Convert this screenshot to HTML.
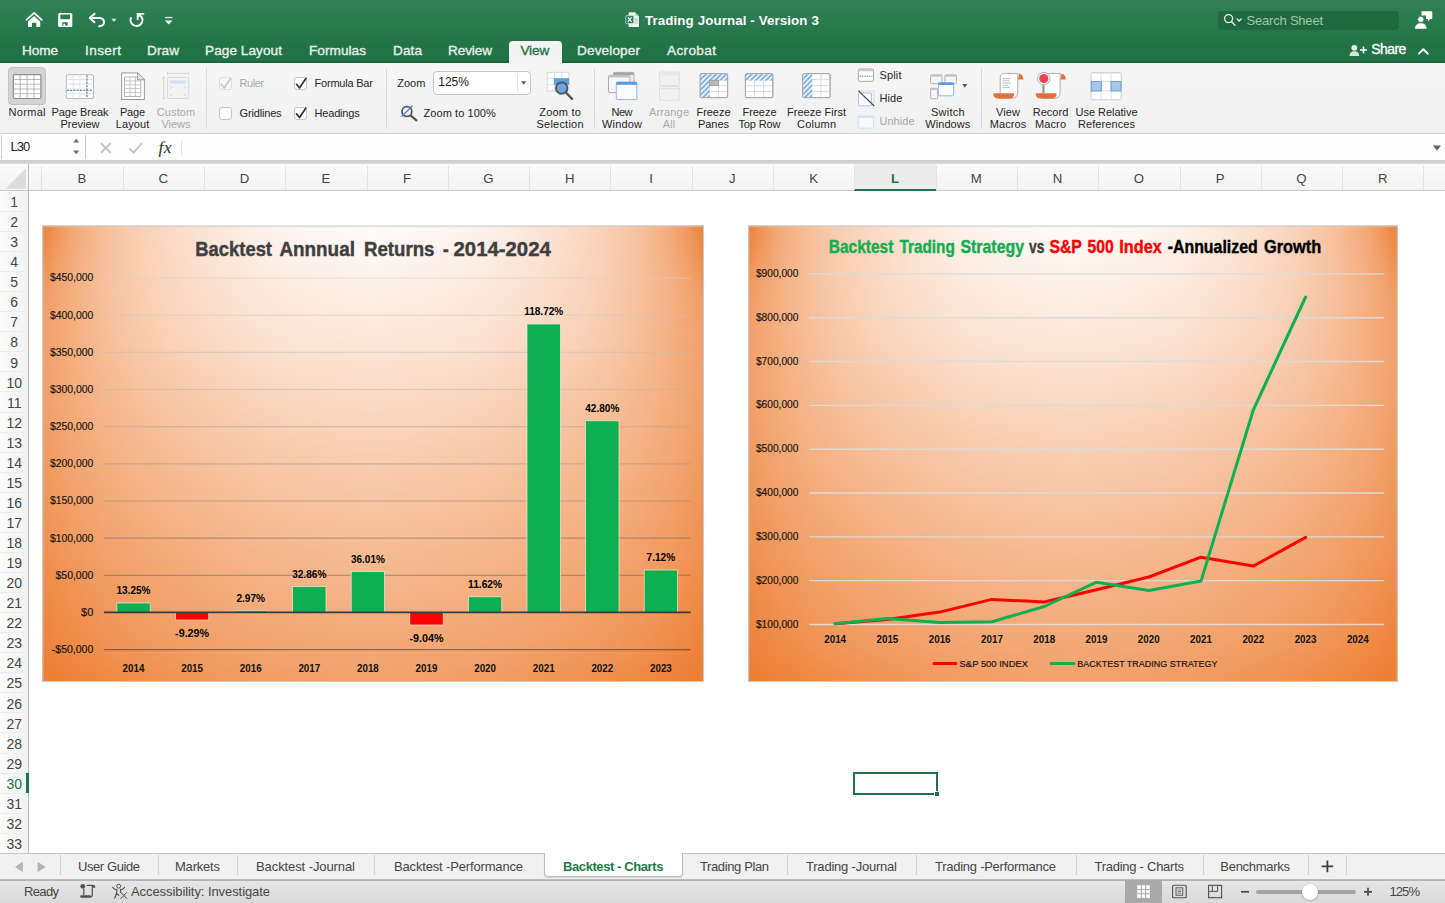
<!DOCTYPE html>
<html lang="en"><head><meta charset="utf-8"><title>Trading Journal - Version 3</title>
<style>
html,body{margin:0;padding:0;}
body{width:1445px;height:903px;overflow:hidden;position:relative;background:#fff;font-family:"Liberation Sans",sans-serif;}
.t{position:absolute;white-space:nowrap;}
.a{position:absolute;}
svg{position:absolute;overflow:visible;}
svg text{font-family:"Liberation Sans",sans-serif;}
</style></head><body>
<div class="a" id="titlebar" style="left:0;top:0;width:1445px;height:63px;background:linear-gradient(to bottom,#327f56 0px,#2c7c51 16px,#26784c 32px,#217346 48px,#217346 61px,#1b673d 61.5px,#1b673d 63px);"></div>
<div class="a" id="tab-view" style="left:508.6px;top:41px;width:53.2px;height:23px;background:#f4f4f4;border-radius:4px 4px 0 0;"></div>
<div class="a" id="search" style="left:1218.3px;top:10.5px;width:180.4px;height:19.2px;background:rgba(0,40,15,0.22);border-radius:4px;"></div>
<span class="t" style="left:1246.60px;top:14.00px;font-size:13px;line-height:13px;letter-spacing:-0.215px;color:#9ec7ae;">Search Sheet</span>
<span class="t" style="left:645.00px;top:13.64px;font-size:13.3px;line-height:13.3px;font-weight:700;letter-spacing:0.119px;color:#ffffff;">Trading Journal - Version 3</span>
<span class="t" style="left:22.00px;top:43.79px;font-size:13.6px;line-height:13.6px;letter-spacing:-0.092px;color:#e6f0ea;-webkit-text-stroke:0.35px #e6f0ea;">Home</span>
<span class="t" style="left:85.00px;top:43.79px;font-size:13.6px;line-height:13.6px;letter-spacing:0.398px;color:#e6f0ea;-webkit-text-stroke:0.35px #e6f0ea;">Insert</span>
<span class="t" style="left:147.00px;top:43.79px;font-size:13.6px;line-height:13.6px;letter-spacing:0.088px;color:#e6f0ea;-webkit-text-stroke:0.35px #e6f0ea;">Draw</span>
<span class="t" style="left:205.00px;top:43.79px;font-size:13.6px;line-height:13.6px;letter-spacing:0.063px;color:#e6f0ea;-webkit-text-stroke:0.35px #e6f0ea;">Page Layout</span>
<span class="t" style="left:309.00px;top:43.79px;font-size:13.6px;line-height:13.6px;letter-spacing:0.047px;color:#e6f0ea;-webkit-text-stroke:0.35px #e6f0ea;">Formulas</span>
<span class="t" style="left:393.00px;top:43.79px;font-size:13.6px;line-height:13.6px;letter-spacing:0.091px;color:#e6f0ea;-webkit-text-stroke:0.35px #e6f0ea;">Data</span>
<span class="t" style="left:448.00px;top:43.79px;font-size:13.6px;line-height:13.6px;letter-spacing:-0.118px;color:#e6f0ea;-webkit-text-stroke:0.35px #e6f0ea;">Review</span>
<span class="t" style="left:577.00px;top:43.79px;font-size:13.6px;line-height:13.6px;letter-spacing:0.127px;color:#e6f0ea;-webkit-text-stroke:0.35px #e6f0ea;">Developer</span>
<span class="t" style="left:667.00px;top:43.79px;font-size:13.6px;line-height:13.6px;letter-spacing:0.356px;color:#e6f0ea;-webkit-text-stroke:0.35px #e6f0ea;">Acrobat</span>
<span class="t" style="left:520.40px;top:43.79px;font-size:13.6px;line-height:13.6px;letter-spacing:-0.111px;color:#217346;-webkit-text-stroke:0.35px #217346;">View</span>
<span class="t" style="left:1371.20px;top:41.75px;font-size:14px;line-height:14px;letter-spacing:-0.564px;color:#ffffff;-webkit-text-stroke:0.3px #fff;">Share</span>
<div class="a" id="ribbon" style="left:0;top:63px;width:1445px;height:70px;background:linear-gradient(#f6f6f6,#f1f1f1);border-bottom:1px solid #d2d2d2;"></div>
<div class="a" style="left:8.2px;top:67px;width:37.7px;height:38px;background:#d4d4d4;border:1px solid #c2c2c2;border-radius:4px;box-sizing:border-box;"></div>
<div class="a" style="left:206.3px;top:68px;width:1px;height:61px;background:#dadada;"></div>
<div class="a" style="left:385.5px;top:68px;width:1px;height:61px;background:#dadada;"></div>
<div class="a" style="left:593.5px;top:68px;width:1px;height:61px;background:#dadada;"></div>
<div class="a" style="left:980.8px;top:68px;width:1px;height:61px;background:#dadada;"></div>
<div class="a" style="left:433px;top:71.3px;width:97.8px;height:23.7px;background:#fff;border:1px solid #c9c9c9;border-radius:4px;box-sizing:border-box;"></div>
<div class="a" style="left:516.5px;top:74px;width:1px;height:18px;background:#e2e2e2;"></div>
<span class="t" style="left:438.30px;top:76.14px;font-size:12px;line-height:12px;letter-spacing:-0.063px;color:#222;">125%</span>
<div class="a" style="left:218.6px;top:77.3px;width:13px;height:13px;background:#f7f7f7;border:1px solid #dedede;border-radius:3px;box-sizing:border-box;"></div>
<div class="a" style="left:218.6px;top:106.9px;width:13px;height:13px;background:#fdfdfd;border:1px solid #c6c6c6;border-radius:3px;box-sizing:border-box;"></div>
<div class="a" style="left:293.9px;top:77.3px;width:13px;height:13px;background:#fdfdfd;border:1px solid #c6c6c6;border-radius:3px;box-sizing:border-box;"></div>
<div class="a" style="left:293.9px;top:106.9px;width:13px;height:13px;background:#fdfdfd;border:1px solid #c6c6c6;border-radius:3px;box-sizing:border-box;"></div>
<span class="t" style="left:239.50px;top:77.99px;font-size:11px;line-height:11px;letter-spacing:-0.446px;color:#a9a9a9;">Ruler</span>
<span class="t" style="left:239.50px;top:108.29px;font-size:11px;line-height:11px;letter-spacing:-0.163px;color:#262626;">Gridlines</span>
<span class="t" style="left:314.60px;top:77.99px;font-size:11px;line-height:11px;letter-spacing:-0.231px;color:#262626;">Formula Bar</span>
<span class="t" style="left:314.60px;top:108.29px;font-size:11px;line-height:11px;letter-spacing:-0.196px;color:#262626;">Headings</span>
<span class="t" style="left:397.30px;top:77.99px;font-size:11px;line-height:11px;letter-spacing:-0.038px;color:#262626;">Zoom</span>
<span class="t" style="left:423.50px;top:108.29px;font-size:11px;line-height:11px;letter-spacing:0.070px;color:#262626;">Zoom to 100%</span>
<span class="t" style="left:8.50px;top:107.49px;font-size:11px;line-height:11px;letter-spacing:0.311px;color:#262626;">Normal</span>
<span class="t" style="left:51.50px;top:107.49px;font-size:11px;line-height:11px;letter-spacing:-0.053px;color:#262626;">Page Break</span>
<span class="t" style="left:60.50px;top:119.39px;font-size:11px;line-height:11px;letter-spacing:-0.020px;color:#262626;">Preview</span>
<span class="t" style="left:120.00px;top:107.49px;font-size:11px;line-height:11px;letter-spacing:-0.229px;color:#262626;">Page</span>
<span class="t" style="left:115.75px;top:119.39px;font-size:11px;line-height:11px;letter-spacing:0.095px;color:#262626;">Layout</span>
<span class="t" style="left:156.75px;top:107.49px;font-size:11px;line-height:11px;letter-spacing:0.121px;color:#a9a9a9;">Custom</span>
<span class="t" style="left:161.50px;top:119.39px;font-size:11px;line-height:11px;letter-spacing:-0.036px;color:#a9a9a9;">Views</span>
<span class="t" style="left:539.25px;top:107.49px;font-size:11px;line-height:11px;letter-spacing:0.193px;color:#262626;">Zoom to</span>
<span class="t" style="left:536.50px;top:119.39px;font-size:11px;line-height:11px;letter-spacing:0.219px;color:#262626;">Selection</span>
<span class="t" style="left:611.50px;top:107.49px;font-size:11px;line-height:11px;letter-spacing:-0.503px;color:#262626;">New</span>
<span class="t" style="left:602.00px;top:119.39px;font-size:11px;line-height:11px;letter-spacing:0.176px;color:#262626;">Window</span>
<span class="t" style="left:649.00px;top:107.49px;font-size:11px;line-height:11px;letter-spacing:0.145px;color:#a9a9a9;">Arrange</span>
<span class="t" style="left:662.75px;top:119.39px;font-size:11px;line-height:11px;letter-spacing:0.137px;color:#a9a9a9;">All</span>
<span class="t" style="left:696.50px;top:107.49px;font-size:11px;line-height:11px;letter-spacing:-0.046px;color:#262626;">Freeze</span>
<span class="t" style="left:698.00px;top:119.39px;font-size:11px;line-height:11px;letter-spacing:-0.047px;color:#262626;">Panes</span>
<span class="t" style="left:742.50px;top:107.49px;font-size:11px;line-height:11px;letter-spacing:-0.046px;color:#262626;">Freeze</span>
<span class="t" style="left:738.50px;top:119.39px;font-size:11px;line-height:11px;letter-spacing:-0.133px;color:#262626;">Top Row</span>
<span class="t" style="left:787.00px;top:107.49px;font-size:11px;line-height:11px;letter-spacing:0.030px;color:#262626;">Freeze First</span>
<span class="t" style="left:797.00px;top:119.39px;font-size:11px;line-height:11px;letter-spacing:0.220px;color:#262626;">Column</span>
<span class="t" style="left:931.05px;top:107.49px;font-size:11px;line-height:11px;letter-spacing:0.220px;color:#262626;">Switch</span>
<span class="t" style="left:925.30px;top:119.39px;font-size:11px;line-height:11px;letter-spacing:0.063px;color:#262626;">Windows</span>
<span class="t" style="left:996.00px;top:107.49px;font-size:11px;line-height:11px;letter-spacing:0.119px;color:#262626;">View</span>
<span class="t" style="left:989.75px;top:119.39px;font-size:11px;line-height:11px;letter-spacing:0.088px;color:#262626;">Macros</span>
<span class="t" style="left:1032.75px;top:107.49px;font-size:11px;line-height:11px;letter-spacing:0.008px;color:#262626;">Record</span>
<span class="t" style="left:1035.00px;top:119.39px;font-size:11px;line-height:11px;letter-spacing:0.110px;color:#262626;">Macro</span>
<span class="t" style="left:1075.50px;top:107.49px;font-size:11px;line-height:11px;letter-spacing:-0.032px;color:#262626;">Use Relative</span>
<span class="t" style="left:1078.00px;top:119.39px;font-size:11px;line-height:11px;letter-spacing:0.084px;color:#262626;">References</span>
<span class="t" style="left:879.40px;top:70.19px;font-size:11px;line-height:11px;letter-spacing:0.175px;color:#262626;">Split</span>
<span class="t" style="left:879.40px;top:93.19px;font-size:11px;line-height:11px;letter-spacing:0.159px;color:#262626;">Hide</span>
<span class="t" style="left:879.40px;top:116.49px;font-size:11px;line-height:11px;letter-spacing:0.049px;color:#a9a9a9;">Unhide</span>
<div class="a" id="formulabar" style="left:0;top:134px;width:1445px;height:26px;background:#fdfdfd;"></div>
<div class="a" style="left:0;top:159.6px;width:1445px;height:4.3px;background:linear-gradient(#cbcbcb,#d3d3d3 60%,#dcdcdc);"></div>
<div class="a" style="left:84.5px;top:135px;width:1px;height:24px;background:#c4c4c4;"></div>
<div class="a" style="left:0.5px;top:135px;width:1px;height:24px;background:#d0d0d0;"></div>
<div class="a" style="left:180.5px;top:141px;width:1px;height:14px;background:#e0e0e0;"></div>
<span class="t" style="left:10.50px;top:140.30px;font-size:13px;line-height:13px;letter-spacing:-0.994px;color:#222;">L30</span>
<span class="t" style="left:158.6px;top:137.3px;font-family:'Liberation Serif',serif;font-style:italic;font-size:17.6px;line-height:20px;color:#333;letter-spacing:0.2px;">fx</span>
<div class="a" id="colhead" style="left:0;top:163.9px;width:1445px;height:27.6px;background:linear-gradient(#fbfbfb,#f3f3f3);border-bottom:1.5px solid #cbcbcb;box-sizing:border-box;"></div>
<div class="a" style="left:854px;top:164px;width:82px;height:27px;background:#ececec;border-bottom:2px solid #217346;box-sizing:border-box;"></div>
<div class="a" style="left:41.3px;top:166px;width:1px;height:24px;background:#e3e3e3;"></div>
<span class="t" style="left:77.55px;top:171.83px;font-size:13.2px;line-height:13.2px;color:#444;">B</span>
<div class="a" style="left:122.6px;top:166px;width:1px;height:24px;background:#e3e3e3;"></div>
<span class="t" style="left:158.48px;top:171.83px;font-size:13.2px;line-height:13.2px;color:#444;">C</span>
<div class="a" style="left:203.9px;top:166px;width:1px;height:24px;background:#e3e3e3;"></div>
<span class="t" style="left:239.78px;top:171.83px;font-size:13.2px;line-height:13.2px;color:#444;">D</span>
<div class="a" style="left:285.2px;top:166px;width:1px;height:24px;background:#e3e3e3;"></div>
<span class="t" style="left:321.45px;top:171.83px;font-size:13.2px;line-height:13.2px;color:#444;">E</span>
<div class="a" style="left:366.5px;top:166px;width:1px;height:24px;background:#e3e3e3;"></div>
<span class="t" style="left:403.12px;top:171.83px;font-size:13.2px;line-height:13.2px;color:#444;">F</span>
<div class="a" style="left:447.8px;top:166px;width:1px;height:24px;background:#e3e3e3;"></div>
<span class="t" style="left:483.32px;top:171.83px;font-size:13.2px;line-height:13.2px;color:#444;">G</span>
<div class="a" style="left:529.1px;top:166px;width:1px;height:24px;background:#e3e3e3;"></div>
<span class="t" style="left:564.98px;top:171.83px;font-size:13.2px;line-height:13.2px;color:#444;">H</span>
<div class="a" style="left:610.4px;top:166px;width:1px;height:24px;background:#e3e3e3;"></div>
<span class="t" style="left:649.22px;top:171.83px;font-size:13.2px;line-height:13.2px;color:#444;">I</span>
<div class="a" style="left:691.7px;top:166px;width:1px;height:24px;background:#e3e3e3;"></div>
<span class="t" style="left:729.05px;top:171.83px;font-size:13.2px;line-height:13.2px;color:#444;">J</span>
<div class="a" style="left:773.0px;top:166px;width:1px;height:24px;background:#e3e3e3;"></div>
<span class="t" style="left:809.25px;top:171.83px;font-size:13.2px;line-height:13.2px;color:#444;">K</span>
<div class="a" style="left:854.3px;top:166px;width:1px;height:24px;background:#e3e3e3;"></div>
<span class="t" style="left:890.92px;top:171.83px;font-size:13.2px;line-height:13.2px;font-weight:700;color:#217346;">L</span>
<div class="a" style="left:935.6px;top:166px;width:1px;height:24px;background:#e3e3e3;"></div>
<span class="t" style="left:970.75px;top:171.83px;font-size:13.2px;line-height:13.2px;color:#444;">M</span>
<div class="a" style="left:1016.9px;top:166px;width:1px;height:24px;background:#e3e3e3;"></div>
<span class="t" style="left:1052.78px;top:171.83px;font-size:13.2px;line-height:13.2px;color:#444;">N</span>
<div class="a" style="left:1098.2px;top:166px;width:1px;height:24px;background:#e3e3e3;"></div>
<span class="t" style="left:1133.72px;top:171.83px;font-size:13.2px;line-height:13.2px;color:#444;">O</span>
<div class="a" style="left:1179.5px;top:166px;width:1px;height:24px;background:#e3e3e3;"></div>
<span class="t" style="left:1215.75px;top:171.83px;font-size:13.2px;line-height:13.2px;color:#444;">P</span>
<div class="a" style="left:1260.8px;top:166px;width:1px;height:24px;background:#e3e3e3;"></div>
<span class="t" style="left:1296.32px;top:171.83px;font-size:13.2px;line-height:13.2px;color:#444;">Q</span>
<div class="a" style="left:1342.1px;top:166px;width:1px;height:24px;background:#e3e3e3;"></div>
<span class="t" style="left:1377.98px;top:171.83px;font-size:13.2px;line-height:13.2px;color:#444;">R</span>
<div class="a" style="left:1423.4px;top:166px;width:1px;height:24px;background:#e3e3e3;"></div>
<div class="a" id="rowhead" style="left:0;top:191px;width:28px;height:662.4px;background:linear-gradient(to right,#fbfbfb,#f2f2f2);"></div>
<div class="a" style="left:28px;top:164px;width:1px;height:690px;background:#b9b9b9;"></div>
<div class="a" style="left:0;top:210.9px;width:28px;height:1px;background:#ececec;"></div>
<span class="t" style="left:10.31px;top:195.05px;font-size:14px;line-height:14px;color:#444;">1</span>
<div class="a" style="left:0;top:230.9px;width:28px;height:1px;background:#ececec;"></div>
<span class="t" style="left:10.31px;top:215.11px;font-size:14px;line-height:14px;color:#444;">2</span>
<div class="a" style="left:0;top:251.0px;width:28px;height:1px;background:#ececec;"></div>
<span class="t" style="left:10.31px;top:235.17px;font-size:14px;line-height:14px;color:#444;">3</span>
<div class="a" style="left:0;top:271.0px;width:28px;height:1px;background:#ececec;"></div>
<span class="t" style="left:10.31px;top:255.23px;font-size:14px;line-height:14px;color:#444;">4</span>
<div class="a" style="left:0;top:291.1px;width:28px;height:1px;background:#ececec;"></div>
<span class="t" style="left:10.31px;top:275.29px;font-size:14px;line-height:14px;color:#444;">5</span>
<div class="a" style="left:0;top:311.2px;width:28px;height:1px;background:#ececec;"></div>
<span class="t" style="left:10.31px;top:295.35px;font-size:14px;line-height:14px;color:#444;">6</span>
<div class="a" style="left:0;top:331.2px;width:28px;height:1px;background:#ececec;"></div>
<span class="t" style="left:10.31px;top:315.41px;font-size:14px;line-height:14px;color:#444;">7</span>
<div class="a" style="left:0;top:351.3px;width:28px;height:1px;background:#ececec;"></div>
<span class="t" style="left:10.31px;top:335.47px;font-size:14px;line-height:14px;color:#444;">8</span>
<div class="a" style="left:0;top:371.3px;width:28px;height:1px;background:#ececec;"></div>
<span class="t" style="left:10.31px;top:355.53px;font-size:14px;line-height:14px;color:#444;">9</span>
<div class="a" style="left:0;top:391.4px;width:28px;height:1px;background:#ececec;"></div>
<span class="t" style="left:6.41px;top:375.59px;font-size:14px;line-height:14px;color:#444;">10</span>
<div class="a" style="left:0;top:411.5px;width:28px;height:1px;background:#ececec;"></div>
<span class="t" style="left:6.93px;top:395.65px;font-size:14px;line-height:14px;color:#444;">11</span>
<div class="a" style="left:0;top:431.5px;width:28px;height:1px;background:#ececec;"></div>
<span class="t" style="left:6.41px;top:415.71px;font-size:14px;line-height:14px;color:#444;">12</span>
<div class="a" style="left:0;top:451.6px;width:28px;height:1px;background:#ececec;"></div>
<span class="t" style="left:6.41px;top:435.77px;font-size:14px;line-height:14px;color:#444;">13</span>
<div class="a" style="left:0;top:471.6px;width:28px;height:1px;background:#ececec;"></div>
<span class="t" style="left:6.41px;top:455.83px;font-size:14px;line-height:14px;color:#444;">14</span>
<div class="a" style="left:0;top:491.7px;width:28px;height:1px;background:#ececec;"></div>
<span class="t" style="left:6.41px;top:475.89px;font-size:14px;line-height:14px;color:#444;">15</span>
<div class="a" style="left:0;top:511.8px;width:28px;height:1px;background:#ececec;"></div>
<span class="t" style="left:6.41px;top:495.95px;font-size:14px;line-height:14px;color:#444;">16</span>
<div class="a" style="left:0;top:531.8px;width:28px;height:1px;background:#ececec;"></div>
<span class="t" style="left:6.41px;top:516.01px;font-size:14px;line-height:14px;color:#444;">17</span>
<div class="a" style="left:0;top:551.9px;width:28px;height:1px;background:#ececec;"></div>
<span class="t" style="left:6.41px;top:536.07px;font-size:14px;line-height:14px;color:#444;">18</span>
<div class="a" style="left:0;top:571.9px;width:28px;height:1px;background:#ececec;"></div>
<span class="t" style="left:6.41px;top:556.13px;font-size:14px;line-height:14px;color:#444;">19</span>
<div class="a" style="left:0;top:592.0px;width:28px;height:1px;background:#ececec;"></div>
<span class="t" style="left:6.41px;top:576.19px;font-size:14px;line-height:14px;color:#444;">20</span>
<div class="a" style="left:0;top:612.1px;width:28px;height:1px;background:#ececec;"></div>
<span class="t" style="left:6.41px;top:596.25px;font-size:14px;line-height:14px;color:#444;">21</span>
<div class="a" style="left:0;top:632.1px;width:28px;height:1px;background:#ececec;"></div>
<span class="t" style="left:6.41px;top:616.31px;font-size:14px;line-height:14px;color:#444;">22</span>
<div class="a" style="left:0;top:652.2px;width:28px;height:1px;background:#ececec;"></div>
<span class="t" style="left:6.41px;top:636.37px;font-size:14px;line-height:14px;color:#444;">23</span>
<div class="a" style="left:0;top:672.2px;width:28px;height:1px;background:#ececec;"></div>
<span class="t" style="left:6.41px;top:656.43px;font-size:14px;line-height:14px;color:#444;">24</span>
<div class="a" style="left:0;top:692.3px;width:28px;height:1px;background:#ececec;"></div>
<span class="t" style="left:6.41px;top:676.49px;font-size:14px;line-height:14px;color:#444;">25</span>
<div class="a" style="left:0;top:712.4px;width:28px;height:1px;background:#ececec;"></div>
<span class="t" style="left:6.41px;top:696.55px;font-size:14px;line-height:14px;color:#444;">26</span>
<div class="a" style="left:0;top:732.4px;width:28px;height:1px;background:#ececec;"></div>
<span class="t" style="left:6.41px;top:716.61px;font-size:14px;line-height:14px;color:#444;">27</span>
<div class="a" style="left:0;top:752.5px;width:28px;height:1px;background:#ececec;"></div>
<span class="t" style="left:6.41px;top:736.67px;font-size:14px;line-height:14px;color:#444;">28</span>
<div class="a" style="left:0;top:772.5px;width:28px;height:1px;background:#ececec;"></div>
<span class="t" style="left:6.41px;top:756.73px;font-size:14px;line-height:14px;color:#444;">29</span>
<div class="a" style="left:0;top:792.6px;width:28px;height:1px;background:#ececec;"></div>
<span class="t" style="left:6.41px;top:776.79px;font-size:14px;line-height:14px;color:#217346;">30</span>
<div class="a" style="left:0;top:812.7px;width:28px;height:1px;background:#ececec;"></div>
<span class="t" style="left:6.41px;top:796.85px;font-size:14px;line-height:14px;color:#444;">31</span>
<div class="a" style="left:0;top:832.7px;width:28px;height:1px;background:#ececec;"></div>
<span class="t" style="left:6.41px;top:816.91px;font-size:14px;line-height:14px;color:#444;">32</span>
<div class="a" style="left:0;top:852.8px;width:28px;height:1px;background:#ececec;"></div>
<span class="t" style="left:6.41px;top:836.97px;font-size:14px;line-height:14px;color:#444;">33</span>
<div class="a" style="left:26px;top:773.0px;width:2.5px;height:20px;background:#217346;"></div>
<div class="a" id="selcell" style="left:852.5px;top:771.5px;width:85px;height:23.5px;border:2px solid #217346;box-sizing:border-box;"></div>
<div class="a" style="left:933.5px;top:790.5px;width:6px;height:6px;background:#fff;"></div>
<div class="a" style="left:934.5px;top:791.5px;width:4.5px;height:4.5px;background:#217346;"></div>
<div class="a" id="sheettabs" style="left:0;top:853.4px;width:1445px;height:26.6px;background:#f1f1f1;border-top:1px solid #c8c8c8;border-bottom:1px solid #bdbdbd;box-sizing:border-box;"></div>
<div class="a" style="left:60.3px;top:855px;width:1px;height:20px;background:#d2d2d2;"></div>
<div class="a" style="left:157.7px;top:855px;width:1px;height:20px;background:#d2d2d2;"></div>
<div class="a" style="left:237.2px;top:855px;width:1px;height:20px;background:#d2d2d2;"></div>
<div class="a" style="left:373.7px;top:855px;width:1px;height:20px;background:#d2d2d2;"></div>
<div class="a" style="left:787.0px;top:855px;width:1px;height:20px;background:#d2d2d2;"></div>
<div class="a" style="left:916.0px;top:855px;width:1px;height:20px;background:#d2d2d2;"></div>
<div class="a" style="left:1076.0px;top:855px;width:1px;height:20px;background:#d2d2d2;"></div>
<div class="a" style="left:1202.6px;top:855px;width:1px;height:20px;background:#d2d2d2;"></div>
<div class="a" style="left:1308.0px;top:855px;width:1px;height:20px;background:#d2d2d2;"></div>
<div class="a" style="left:1346.0px;top:855px;width:1px;height:20px;background:#d2d2d2;"></div>
<div class="a" style="left:543.6px;top:853px;width:139.3px;height:23.6px;background:#fff;border:1px solid #bcbcbc;border-top:none;border-radius:0 0 4px 4px;box-sizing:border-box;box-shadow:0 1px 1px rgba(0,0,0,0.12);"></div>
<span class="t" style="left:78.00px;top:859.60px;font-size:13px;line-height:13px;letter-spacing:-0.416px;color:#464646;">User Guide</span>
<span class="t" style="left:175.00px;top:859.60px;font-size:13px;line-height:13px;letter-spacing:-0.205px;color:#464646;">Markets</span>
<span class="t" style="left:256.00px;top:859.60px;font-size:13px;line-height:13px;letter-spacing:-0.089px;color:#464646;">Backtest -Journal</span>
<span class="t" style="left:394.00px;top:859.60px;font-size:13px;line-height:13px;letter-spacing:-0.160px;color:#464646;">Backtest -Performance</span>
<span class="t" style="left:700.00px;top:859.60px;font-size:13px;line-height:13px;letter-spacing:-0.384px;color:#464646;">Trading Plan</span>
<span class="t" style="left:806.00px;top:859.60px;font-size:13px;line-height:13px;letter-spacing:-0.211px;color:#464646;">Trading -Journal</span>
<span class="t" style="left:935.00px;top:859.60px;font-size:13px;line-height:13px;letter-spacing:-0.260px;color:#464646;">Trading -Performance</span>
<span class="t" style="left:1094.50px;top:859.60px;font-size:13px;line-height:13px;letter-spacing:-0.262px;color:#464646;">Trading - Charts</span>
<span class="t" style="left:1220.30px;top:859.60px;font-size:13px;line-height:13px;letter-spacing:-0.283px;color:#464646;">Benchmarks</span>
<span class="t" style="left:563.00px;top:859.60px;font-size:13px;line-height:13px;font-weight:700;letter-spacing:-0.407px;color:#1e7b45;">Backtest - Charts</span>
<div class="a" id="statusbar" style="left:0;top:880px;width:1445px;height:23px;background:linear-gradient(#e6e6e6,#d9d9d9);border-top:1px solid #b4b4b4;box-sizing:border-box;"></div>
<div class="a" style="left:1124.9px;top:880px;width:36.8px;height:23px;background:#a9a9a9;"></div>
<span class="t" style="left:24.00px;top:885.20px;font-size:13px;line-height:13px;letter-spacing:-0.644px;color:#464646;">Ready</span>
<span class="t" style="left:131.00px;top:885.20px;font-size:13px;line-height:13px;letter-spacing:-0.075px;color:#464646;">Accessibility: Investigate</span>
<span class="t" style="left:1389.40px;top:885.20px;font-size:13px;line-height:13px;letter-spacing:-0.883px;color:#464646;">125%</span>
<div class="a" style="left:1256.4px;top:889.8px;width:100px;height:4px;background:#a3a3a3;border-radius:2px;"></div>
<div class="a" style="left:1301.7px;top:883.5px;width:16px;height:16px;background:#fff;border-radius:8px;box-shadow:0 0.5px 2px rgba(0,0,0,0.35);"></div>
<svg id="icons" width="1445" height="903" viewBox="0 0 1445 903" style="left:0;top:0;"><path d="M26.4 19.9 L34.1 12.9 L41.8 19.9" fill="none" stroke="#fff" stroke-width="1.7" stroke-linecap="round" stroke-linejoin="round"/>
<path d="M28 21.4 L34.1 16 L40.2 21.4 V26.9 H36.3 V22.8 H32 V26.9 H28 Z" fill="#fff"/>
<path d="M59.6 12.9 H70.8 Q72.3 12.9 72.3 14.4 V25.5 Q72.3 27 70.8 27 H59.6 Q58.1 27 58.1 25.5 V14.4 Q58.1 12.9 59.6 12.9 Z M60.4 15 V18.6 Q60.4 19.2 61 19.2 H69.4 Q70 19.2 70 18.6 V15 Q70 14.4 69.4 14.4 H61 Q60.4 14.4 60.4 15 Z M62.2 22.8 V25.8 H63.4 V23.8 H65.2 V25.8 H67.7 V22.8 Q67.7 22.2 67.1 22.2 H62.8 Q62.2 22.2 62.2 22.8 Z" fill="#fff" fill-rule="evenodd"/>
<path d="M94.6 13.7 L89.7 18.05 L94.4 22.3 M90.2 18.05 H99.6 Q104 18.3 104 22.2 Q103.8 25.8 99.1 26.2" fill="none" stroke="#fff" stroke-width="2" stroke-linecap="round" stroke-linejoin="round"/>
<path d="M111.3 18.7 H116.6 L113.95 21.9 Z" fill="#d8e6dd"/>
<path d="M130.9 17.9 A6 6 0 1 0 141.7 17 L138.4 14.4" fill="none" stroke="#fff" stroke-width="1.9" stroke-linecap="round" stroke-linejoin="round"/>
<path d="M144.2 13.9 H137.7 V20" fill="none" stroke="#fff" stroke-width="1.9" stroke-linecap="butt" stroke-linejoin="miter"/>
<path d="M137.7 13.9 H141.5 L137.7 17.6 Z" fill="#fff"/>
<rect x="165" y="16.9" width="7.4" height="1.3" fill="#e6f0ea"/>
<path d="M164.9 20.4 H172.5 L168.7 24.4 Z" fill="#fff"/>
<path d="M628.6 12.2 H635 L638.9 16.2 V26.9 H628.6 Z" fill="#f4f8f5"/>
<path d="M635 12.2 V16.2 H638.9 Z" fill="#b9d3c3"/>
<rect x="625.7" y="15.6" width="8" height="8" rx="1" fill="#2e7d52" stroke="#cfe3d6" stroke-width="0.7"/>
<path d="M627.8 17.4 L631.6 21.9 M631.6 17.4 L627.8 21.9" stroke="#fff" stroke-width="1.1"/>
<path d="M635.2 18 V24 M637 18 V24" stroke="#9cc3ab" stroke-width="0.8"/>
<circle cx="1228.6" cy="18.6" r="4" fill="none" stroke="#eaf3ed" stroke-width="1.3"/>
<path d="M1231.4 21.6 L1235 25.2" stroke="#eaf3ed" stroke-width="1.4" stroke-linecap="round"/>
<path d="M1237.2 19 L1239.2 21 L1241.2 19" fill="none" stroke="#eaf3ed" stroke-width="1.2" stroke-linecap="round" stroke-linejoin="round"/>
<path d="M1421.5 11.2 H1431.3 Q1432.3 11.2 1432.3 12.2 V18 Q1432.3 19 1431.3 19 H1430.2 L1428 21.3 V19 H1426 V15.5 H1421.5 Z" fill="#fff"/>
<circle cx="1420.8" cy="19.4" r="3.1" fill="#fff" stroke="#2d7b51" stroke-width="0.8"/>
<path d="M1415 28.8 Q1415 23.2 1420.8 23.2 Q1426.6 23.2 1426.6 28.8 Z" fill="#fff"/>
<circle cx="1354.3" cy="47.8" r="2.9" fill="#e8f1ec"/>
<path d="M1349.5 56 Q1349.5 51.3 1354.3 51.3 Q1359.2 51.3 1359.2 56 Z" fill="#d3e4d9"/>
<path d="M1360 50 H1367 M1363.5 46.5 V53.5" stroke="#fff" stroke-width="1.6"/>
<path d="M1418.9 53.6 L1423.3 49.2 L1427.7 53.6" fill="none" stroke="#fff" stroke-width="2" stroke-linecap="round" stroke-linejoin="round"/>
<path d="M221.2 84.3 L224.2 87.9 L230.6 78.5" fill="none" stroke="#c9c9c9" stroke-width="1.7" stroke-linecap="round" stroke-linejoin="round"/>
<path d="M296.5 84.3 L299.5 87.9 L305.9 78.5" fill="none" stroke="#333" stroke-width="1.7" stroke-linecap="round" stroke-linejoin="round"/>
<path d="M296.5 113.9 L299.5 117.5 L305.9 108.1" fill="none" stroke="#333" stroke-width="1.7" stroke-linecap="round" stroke-linejoin="round"/>
<rect x="13.3" y="74.7" width="27.6" height="23.8" rx="1.5" fill="#fff" stroke="#8a8a8a" stroke-width="1.2"/>
<path d="M20.2 74.7 V98.5 M27.1 74.7 V98.5 M34.0 74.7 V98.5 M13.3 79.5 H40.9 M13.3 84.2 H40.9 M13.3 89.0 H40.9 M13.3 93.7 H40.9 " stroke="#9c9c9c" stroke-width="0.7" fill="none"/>
<rect x="66.3" y="74.7" width="27.2" height="23.8" rx="1.5" fill="#fff" stroke="#b4b4b4" stroke-width="1"/>
<path d="M73.1 74.7 V98.5 M79.9 74.7 V98.5 M86.7 74.7 V98.5 M66.3 79.5 H93.5 M66.3 84.2 H93.5 M66.3 89.0 H93.5 M66.3 93.7 H93.5 " stroke="#cfe0f5" stroke-width="0.8" fill="none"/>
<path d="M66.8 90.3 H93 M87 75.2 V98" stroke="#555" stroke-width="0.9" stroke-dasharray="2 1.3" fill="none"/>
<path d="M121.6 72.9 H137.6 L144.4 79.7 V99.5 H121.6 Z" fill="#fff" stroke="#9a9a9a" stroke-width="1"/>
<path d="M137.6 72.9 V79.7 H144.4 Z" fill="#e4e4e4" stroke="#9a9a9a" stroke-width="0.8"/>
<rect x="124.6" y="77" width="16.2" height="19.4" fill="none" stroke="#a5a5a5" stroke-width="0.8"/>
<path d="M130.0 77.0 V96.4 M135.4 77.0 V96.4 M124.6 80.9 H140.8 M124.6 84.8 H140.8 M124.6 88.6 H140.8 M124.6 92.5 H140.8 " stroke="#b5b5b5" stroke-width="0.7" fill="none"/>
<path d="M137.6 72.9 V79.7 H144.4 L137.6 72.9Z" fill="#ebebeb" stroke="#9a9a9a" stroke-width="0.8"/>
<rect x="167.5" y="77.3" width="21.2" height="21.2" rx="1" fill="#f3f3f3" stroke="#d7d7d7" stroke-width="1"/>
<rect x="170.2" y="80.4" width="15.8" height="3.4" fill="#d7e1f0"/>
<path d="M167.5 73.4 H188.7 M167.5 71.8 V75 M188.7 71.8 V75 M163.6 77.3 V98.5 M162 77.3 H165.2 M162 98.5 H165.2" stroke="#d0d0d0" stroke-width="0.9" fill="none"/>
<path d="M170.5 89 V86.8 H172.7 M183.5 86.8 H185.7 V89 M170.5 93.5 V95.7 H172.7 M183.5 95.7 H185.7 V93.5" stroke="#d4d4d4" stroke-width="0.8" fill="none"/>
<circle cx="406.9" cy="111.6" r="4.9" fill="none" stroke="#555" stroke-width="1.7"/>
<path d="M410.6 115.4 L416.4 120.4" stroke="#555" stroke-width="2.1" stroke-linecap="round"/>
<path d="M401.4 116.6 L412.6 105.8" stroke="#3b7fd6" stroke-width="1.3"/>
<path d="M521.2 81.2 H526.2 L523.7 84.8 Z" fill="#555"/>
<rect x="547.2" y="72.3" width="21.8" height="18.6" fill="#fff" stroke="#d0d0d0" stroke-width="0.8"/>
<path d="M554.5 72.3 V90.9 M561.7 72.3 V90.9 M547.2 78.5 H569.0 M547.2 84.7 H569.0 " stroke="#d6d6d6" stroke-width="0.7" fill="none"/>
<rect x="553.9" y="78.3" width="15.1" height="6.6" fill="#5d9ce4"/>
<circle cx="561.7" cy="88.1" r="5.7" fill="#6ea6e4" stroke="#555" stroke-width="2"/>
<path d="M566 92.5 L572 98.8" stroke="#555" stroke-width="2.4" stroke-linecap="round"/>
<rect x="613.5" y="72.4" width="20.5" height="14" rx="1.5" fill="#f0f0f0" stroke="#a8a8a8" stroke-width="0.9"/>
<rect x="613.5" y="72.4" width="20.5" height="2.6" fill="#a8a8a8"/>
<rect x="608.5" y="75.3" width="21.5" height="17.2" rx="1.5" fill="#f7f7f7" stroke="#a0a0a0" stroke-width="0.9"/>
<rect x="608.5" y="75.3" width="21.5" height="2.2" fill="#c4c4c4"/>
<rect x="616.3" y="82" width="20.6" height="17.6" rx="1.5" fill="#f9fbfe" stroke="#8bb9f2" stroke-width="1"/>
<rect x="616.3" y="82" width="20.6" height="2.8" fill="#5b9be6"/>
<rect x="659.5" y="72" width="19.8" height="13.8" rx="1" fill="#f1f1f1" stroke="#dcdcdc" stroke-width="0.9"/>
<rect x="659.5" y="86.5" width="19.8" height="13.8" rx="1" fill="#f1f1f1" stroke="#dcdcdc" stroke-width="0.9"/>
<path d="M659.5 74.2 H679.3 M659.5 88.7 H679.3" stroke="#dedede" stroke-width="0.9"/>
<defs><pattern id="hatch" width="3.6" height="3.6" patternUnits="userSpaceOnUse" patternTransform="rotate(-45)"><rect width="3.6" height="3.6" fill="#eef4fc"/><rect width="3.6" height="1.7" fill="#78aee8"/></pattern></defs>
<rect x="700.2" y="73.6" width="27.4" height="24.0" rx="1.2" fill="#fff" stroke="#a6a6a6" stroke-width="0.9"/><path d="M709.3 73.6 V97.6 M718.5 73.6 V97.6 M700.2 79.6 H727.6 M700.2 85.6 H727.6 M700.2 91.6 H727.6 " stroke="#d2d2d2" stroke-width="0.8" fill="none"/><rect x="700.7" y="74.1" width="26.4" height="6.5" fill="url(#hatch)"/><rect x="700.7" y="74.1" width="9" height="23.0" fill="url(#hatch)"/><rect x="709.7" y="80.2" width="8.8" height="5.4" fill="#b9b9b9" stroke="#8a8a8a" stroke-width="0.7"/><rect x="700.2" y="73.6" width="27.4" height="24.0" rx="1.2" fill="none" stroke="#a6a6a6" stroke-width="0.9"/>
<rect x="745.4" y="73.6" width="27.4" height="24.0" rx="1.2" fill="#fff" stroke="#a6a6a6" stroke-width="0.9"/><path d="M754.5 73.6 V97.6 M763.7 73.6 V97.6 M745.4 79.6 H772.8 M745.4 85.6 H772.8 M745.4 91.6 H772.8 " stroke="#d2d2d2" stroke-width="0.8" fill="none"/><rect x="745.9" y="74.1" width="26.4" height="6.5" fill="url(#hatch)"/><rect x="745.4" y="73.6" width="27.4" height="24.0" rx="1.2" fill="none" stroke="#a6a6a6" stroke-width="0.9"/>
<rect x="802.7" y="73.6" width="27.4" height="24.0" rx="1.2" fill="#fff" stroke="#a6a6a6" stroke-width="0.9"/><path d="M811.8 73.6 V97.6 M821.0 73.6 V97.6 M802.7 79.6 H830.1 M802.7 85.6 H830.1 M802.7 91.6 H830.1 " stroke="#d2d2d2" stroke-width="0.8" fill="none"/><rect x="803.2" y="74.1" width="9" height="23.0" fill="url(#hatch)"/><rect x="802.7" y="73.6" width="27.4" height="24.0" rx="1.2" fill="none" stroke="#a6a6a6" stroke-width="0.9"/>
<rect x="858.3" y="69" width="15.2" height="12.3" rx="1.2" fill="#fff" stroke="#a0a0a0" stroke-width="0.9"/>
<rect x="858.3" y="69" width="15.2" height="2.3" fill="#c9c9c9"/>
<path d="M859.5 76.2 H872.5" stroke="#3b86e0" stroke-width="1" stroke-dasharray="1.4 1"/>
<rect x="858.5" y="93" width="13" height="12.8" rx="1" fill="#fafcff" stroke="#9cc3f3" stroke-width="0.9"/>
<path d="M858.5 91 H874 V104" stroke="#b8b8b8" stroke-width="0.8" stroke-dasharray="1.2 1.2" fill="none"/>
<path d="M858.2 90.6 L874.2 106" stroke="#444" stroke-width="1.1"/>
<rect x="858.3" y="116" width="15.2" height="12.2" rx="1.2" fill="#f8fafd" stroke="#c6dcf6" stroke-width="0.9"/>
<rect x="858.3" y="116" width="15.2" height="2" fill="#d3e3f7"/>
<rect x="930.6" y="74.9" width="11.4" height="8.8" rx="1" fill="#f6f6f6" stroke="#a9a9a9" stroke-width="0.9"/>
<rect x="930.6" y="74.9" width="11.4" height="1.8" fill="#c4c4c4"/>
<rect x="945.0" y="74.9" width="11.4" height="8.8" rx="1" fill="#f6f6f6" stroke="#a9a9a9" stroke-width="0.9"/>
<rect x="945.0" y="74.9" width="11.4" height="1.8" fill="#c4c4c4"/>
<rect x="930.6" y="88.3" width="7.0" height="10.4" rx="1" fill="#f6f6f6" stroke="#a9a9a9" stroke-width="0.9"/>
<rect x="930.6" y="88.3" width="7.0" height="1.8" fill="#c4c4c4"/>
<rect x="938.4" y="82.6" width="15.2" height="13.2" rx="1" fill="#f9fbfe" stroke="#8bb9f2" stroke-width="1"/>
<rect x="938.4" y="82.6" width="15.2" height="2.4" fill="#5b9be6"/>
<path d="M962.3 84 H967.3 L964.8 87.7 Z" fill="#555"/>
<path d="M1004.7 73.4 H1017.7 Q1017.7 73.4 1017.7 79.8 V92 Q1017.7 98.4 1011.2 98.4 H999.2 Q1000.2 96 1000.2 92.6 V77.5 Q1000.2 73.4 1004.7 73.4 Z" fill="#fff" stroke="#a6a6a6" stroke-width="0.9"/><path d="M1017.7 73.6 Q1023.2 73.6 1023.4 79.6 H1017.8 Q1020.2 73.8 1017.7 73.6 Z" fill="#e0703f"/><path d="M993.2 93.2 H1014.2 Q1014.2 98.6 1009.2 98.6 H998.2 Q993.4 98.6 993.2 93.2 Z" fill="#e0703f"/>
<path d="M1002.6 78.6 H1011 M1002.6 80.8 H1009 M1002.6 83 H1011 M1002.6 85.2 H1008 M1002.6 87.4 H1010" stroke="#b5b5b5" stroke-width="0.9"/>
<path d="M1047.1 73.4 H1060.1 Q1060.1 73.4 1060.1 79.8 V92 Q1060.1 98.4 1053.6 98.4 H1041.6 Q1042.6 96 1042.6 92.6 V77.5 Q1042.6 73.4 1047.1 73.4 Z" fill="#fff" stroke="#a6a6a6" stroke-width="0.9"/><path d="M1060.1 73.6 Q1065.6 73.6 1065.8 79.6 H1060.2 Q1062.6 73.8 1060.1 73.6 Z" fill="#e0703f"/><path d="M1035.6 93.2 H1056.6 Q1056.6 98.6 1051.6 98.6 H1040.6 Q1035.8 98.6 1035.6 93.2 Z" fill="#e0703f"/>
<path d="M1043.8 83 V93" stroke="#9a9a9a" stroke-width="1.6"/>
<circle cx="1043.8" cy="78.6" r="6.2" fill="#fff" stroke="#a0a0a0" stroke-width="0.8"/>
<circle cx="1043.8" cy="78.6" r="4.6" fill="#e8474e"/>
<rect x="1091" y="72.8" width="30.2" height="27" rx="1" fill="#fff" stroke="#c4c4c4" stroke-width="0.9"/>
<path d="M1101.1 72.8 V99.8 M1111.1 72.8 V99.8 M1091.0 81.8 H1121.2 M1091.0 90.8 H1121.2 " stroke="#d4d4d4" stroke-width="0.8" fill="none"/>
<rect x="1091.3" y="81.6" width="10" height="9.4" fill="#a9c7ea" stroke="#5b9be6" stroke-width="0.9"/>
<rect x="1111" y="81.6" width="10" height="9.4" fill="#a9c7ea" stroke="#5b9be6" stroke-width="0.9"/>
<path d="M73.2 142.5 L76.2 138.8 L79.2 142.5 Z M73.2 150.6 L76.2 154.3 L79.2 150.6 Z" fill="#6e6e6e"/>
<path d="M100.9 143.3 L110.7 152.8 M110.7 143.3 L100.9 152.8" stroke="#c4c4c4" stroke-width="1.9"/>
<path d="M129.3 148.3 L133.6 152.6 L142 143.2" stroke="#c4c4c4" stroke-width="1.9" fill="none"/>
<path d="M1433 145.5 H1441 L1437 150.7 Z" fill="#666"/>
<path d="M5.5 188.8 L26 168.3 V188.8 Z" fill="#dcdcdc"/>
<path d="M22.8 861.8 V872.2 L15 867 Z" fill="#b4b4b4"/>
<path d="M37.6 861.8 V872.2 L45.6 867 Z" fill="#b4b4b4"/>
<path d="M1321.6 866.4 H1333.2 M1327.4 860.6 V872.2" stroke="#3c3c3c" stroke-width="1.8"/>
<circle cx="82.8" cy="886.3" r="2.4" fill="#505050"/>
<path d="M83.8 888.5 V895.6" stroke="#505050" stroke-width="1.2"/>
<rect x="80.2" y="895.2" width="10.6" height="2.5" rx="1.2" fill="#505050"/>
<path d="M86.6 885.3 H92.8 Q94.7 885.3 94.7 887.6 M92.3 885.6 V894.8 Q92.3 897.1 89.6 897.1" stroke="#505050" stroke-width="1.2" fill="none"/>
<path d="M92.3 885 Q94.9 885 94.9 887.8 H92.3 Z" fill="#505050"/>
<circle cx="118.7" cy="886.2" r="1.9" fill="#f2f2f2" stroke="#4a4a4a" stroke-width="1"/>
<path d="M112.8 887.2 Q114.2 889.8 117 889.5 L116.5 893.2 L114.7 898.3 M124.6 887.2 Q123.2 889.8 120.5 889.5 L120.8 892.4 M116.7 893.6 L118.8 895.3" stroke="#4a4a4a" stroke-width="1.1" fill="none" stroke-linecap="round" stroke-linejoin="round"/>
<path d="M120.6 892.2 L127 898.8 M127 892.2 L120.6 898.8" stroke="#4a4a4a" stroke-width="1"/>
<rect x="1137.2" y="885.3" width="12.6" height="12.6" fill="#fff"/>
<path d="M1141.4 885.3 V897.9 M1145.6 885.3 V897.9 M1137.2 889.5 H1149.8 M1137.2 893.7 H1149.8 " stroke="#a9a9a9" stroke-width="1.1" fill="none"/>
<rect x="1172.6" y="885.3" width="13.6" height="12.4" rx="1" fill="none" stroke="#4f4f4f" stroke-width="1.1"/>
<rect x="1176" y="887.8" width="6.8" height="7.4" fill="none" stroke="#4f4f4f" stroke-width="0.9"/>
<path d="M1177.5 890 H1181.3 M1177.5 891.6 H1181.3 M1177.5 893.2 H1181.3" stroke="#4f4f4f" stroke-width="0.7"/>
<rect x="1208.6" y="885.3" width="13" height="12.4" fill="none" stroke="#4f4f4f" stroke-width="1.1"/>
<path d="M1212.4 885.3 V891.4 M1217.6 885.3 V891.4 M1208.6 891.4 H1217.6" stroke="#4f4f4f" stroke-width="1"/>
<path d="M1241 891.8 H1249" stroke="#4a4a4a" stroke-width="1.7"/>
<path d="M1364 891.8 H1372 M1368 887.8 V895.8" stroke="#4a4a4a" stroke-width="1.7"/></svg>
<svg id="chart1" width="1445" height="903" viewBox="0 0 1445 903" style="left:0;top:0;"><defs><linearGradient id="g1s0" gradientUnits="userSpaceOnUse" x1="42.40" y1="0" x2="704.00" y2="0"><stop offset="0.0000" stop-color="rgb(238,129,55)"/><stop offset="0.0200" stop-color="rgb(240,148,86)"/><stop offset="0.0475" stop-color="rgb(243,169,118)"/><stop offset="0.0950" stop-color="rgb(246,192,155)"/><stop offset="0.1400" stop-color="rgb(248,206,178)"/><stop offset="0.1870" stop-color="rgb(250,217,195)"/><stop offset="0.2325" stop-color="rgb(251,226,210)"/><stop offset="0.2800" stop-color="rgb(252,234,222)"/><stop offset="0.3350" stop-color="rgb(253,242,234)"/><stop offset="0.4000" stop-color="rgb(254,247,243)"/><stop offset="0.5000" stop-color="rgb(254,251,249)"/><stop offset="0.6000" stop-color="rgb(254,247,243)"/><stop offset="0.6650" stop-color="rgb(253,242,234)"/><stop offset="0.7200" stop-color="rgb(252,234,222)"/><stop offset="0.7675" stop-color="rgb(251,226,210)"/><stop offset="0.8130" stop-color="rgb(250,217,195)"/><stop offset="0.8600" stop-color="rgb(248,206,178)"/><stop offset="0.9050" stop-color="rgb(246,192,155)"/><stop offset="0.9525" stop-color="rgb(243,169,118)"/><stop offset="0.9800" stop-color="rgb(240,148,86)"/><stop offset="1.0000" stop-color="rgb(238,129,55)"/></linearGradient><linearGradient id="g1s1" gradientUnits="userSpaceOnUse" x1="42.40" y1="0" x2="704.00" y2="0"><stop offset="0.0000" stop-color="rgb(238,129,55)"/><stop offset="0.0200" stop-color="rgb(240,148,86)"/><stop offset="0.0475" stop-color="rgb(243,169,118)"/><stop offset="0.0950" stop-color="rgb(246,192,155)"/><stop offset="0.1400" stop-color="rgb(248,206,178)"/><stop offset="0.1870" stop-color="rgb(250,217,195)"/><stop offset="0.2325" stop-color="rgb(251,226,210)"/><stop offset="0.2800" stop-color="rgb(252,234,222)"/><stop offset="0.3350" stop-color="rgb(253,242,234)"/><stop offset="0.4000" stop-color="rgb(254,247,243)"/><stop offset="0.5000" stop-color="rgb(254,251,249)"/><stop offset="0.6000" stop-color="rgb(254,247,243)"/><stop offset="0.6650" stop-color="rgb(253,242,234)"/><stop offset="0.7200" stop-color="rgb(252,234,222)"/><stop offset="0.7675" stop-color="rgb(251,226,210)"/><stop offset="0.8130" stop-color="rgb(250,217,195)"/><stop offset="0.8600" stop-color="rgb(248,206,178)"/><stop offset="0.9050" stop-color="rgb(246,192,155)"/><stop offset="0.9525" stop-color="rgb(243,169,118)"/><stop offset="0.9800" stop-color="rgb(240,148,86)"/><stop offset="1.0000" stop-color="rgb(238,129,55)"/></linearGradient><linearGradient id="g1s2" gradientUnits="userSpaceOnUse" x1="42.40" y1="0" x2="704.00" y2="0"><stop offset="0.0000" stop-color="rgb(238,130,57)"/><stop offset="0.0200" stop-color="rgb(240,148,86)"/><stop offset="0.0475" stop-color="rgb(243,169,118)"/><stop offset="0.0950" stop-color="rgb(246,192,155)"/><stop offset="0.1400" stop-color="rgb(248,206,178)"/><stop offset="0.1870" stop-color="rgb(250,217,195)"/><stop offset="0.2325" stop-color="rgb(251,226,210)"/><stop offset="0.2800" stop-color="rgb(252,234,222)"/><stop offset="0.3350" stop-color="rgb(253,242,234)"/><stop offset="0.4000" stop-color="rgb(254,247,243)"/><stop offset="0.5000" stop-color="rgb(254,251,249)"/><stop offset="0.6000" stop-color="rgb(254,247,243)"/><stop offset="0.6650" stop-color="rgb(253,242,234)"/><stop offset="0.7200" stop-color="rgb(252,234,222)"/><stop offset="0.7675" stop-color="rgb(251,226,210)"/><stop offset="0.8130" stop-color="rgb(250,217,195)"/><stop offset="0.8600" stop-color="rgb(248,206,178)"/><stop offset="0.9050" stop-color="rgb(246,192,155)"/><stop offset="0.9525" stop-color="rgb(243,169,118)"/><stop offset="0.9800" stop-color="rgb(240,148,86)"/><stop offset="1.0000" stop-color="rgb(238,130,57)"/></linearGradient><linearGradient id="g1s3" gradientUnits="userSpaceOnUse" x1="42.40" y1="0" x2="704.00" y2="0"><stop offset="0.0000" stop-color="rgb(238,134,64)"/><stop offset="0.0200" stop-color="rgb(241,151,91)"/><stop offset="0.0475" stop-color="rgb(243,170,120)"/><stop offset="0.0950" stop-color="rgb(246,192,155)"/><stop offset="0.1400" stop-color="rgb(248,206,177)"/><stop offset="0.1870" stop-color="rgb(250,217,194)"/><stop offset="0.2325" stop-color="rgb(251,225,208)"/><stop offset="0.2800" stop-color="rgb(252,233,220)"/><stop offset="0.3350" stop-color="rgb(253,240,232)"/><stop offset="0.4000" stop-color="rgb(254,245,240)"/><stop offset="0.5000" stop-color="rgb(254,249,246)"/><stop offset="0.6000" stop-color="rgb(254,245,240)"/><stop offset="0.6650" stop-color="rgb(253,240,232)"/><stop offset="0.7200" stop-color="rgb(252,233,220)"/><stop offset="0.7675" stop-color="rgb(251,225,208)"/><stop offset="0.8130" stop-color="rgb(250,217,194)"/><stop offset="0.8600" stop-color="rgb(248,206,177)"/><stop offset="0.9050" stop-color="rgb(246,192,155)"/><stop offset="0.9525" stop-color="rgb(243,170,120)"/><stop offset="0.9800" stop-color="rgb(241,151,91)"/><stop offset="1.0000" stop-color="rgb(238,134,64)"/></linearGradient><linearGradient id="g1s4" gradientUnits="userSpaceOnUse" x1="42.40" y1="0" x2="704.00" y2="0"><stop offset="0.0000" stop-color="rgb(239,139,71)"/><stop offset="0.0200" stop-color="rgb(241,154,96)"/><stop offset="0.0475" stop-color="rgb(243,171,123)"/><stop offset="0.0950" stop-color="rgb(246,192,155)"/><stop offset="0.1400" stop-color="rgb(248,206,177)"/><stop offset="0.1870" stop-color="rgb(250,216,193)"/><stop offset="0.2325" stop-color="rgb(251,224,206)"/><stop offset="0.2800" stop-color="rgb(252,231,217)"/><stop offset="0.3350" stop-color="rgb(253,238,229)"/><stop offset="0.4000" stop-color="rgb(253,243,236)"/><stop offset="0.5000" stop-color="rgb(254,247,242)"/><stop offset="0.6000" stop-color="rgb(253,243,236)"/><stop offset="0.6650" stop-color="rgb(253,238,229)"/><stop offset="0.7200" stop-color="rgb(252,231,217)"/><stop offset="0.7675" stop-color="rgb(251,224,206)"/><stop offset="0.8130" stop-color="rgb(250,216,193)"/><stop offset="0.8600" stop-color="rgb(248,206,177)"/><stop offset="0.9050" stop-color="rgb(246,192,155)"/><stop offset="0.9525" stop-color="rgb(243,171,123)"/><stop offset="0.9800" stop-color="rgb(241,154,96)"/><stop offset="1.0000" stop-color="rgb(239,139,71)"/></linearGradient><linearGradient id="g1s5" gradientUnits="userSpaceOnUse" x1="42.40" y1="0" x2="704.00" y2="0"><stop offset="0.0000" stop-color="rgb(240,143,78)"/><stop offset="0.0200" stop-color="rgb(242,158,101)"/><stop offset="0.0475" stop-color="rgb(244,173,125)"/><stop offset="0.0950" stop-color="rgb(246,192,156)"/><stop offset="0.1400" stop-color="rgb(248,205,176)"/><stop offset="0.1870" stop-color="rgb(250,215,192)"/><stop offset="0.2325" stop-color="rgb(251,223,205)"/><stop offset="0.2800" stop-color="rgb(251,230,215)"/><stop offset="0.3350" stop-color="rgb(252,237,226)"/><stop offset="0.4000" stop-color="rgb(253,241,233)"/><stop offset="0.5000" stop-color="rgb(254,245,238)"/><stop offset="0.6000" stop-color="rgb(253,241,233)"/><stop offset="0.6650" stop-color="rgb(252,237,226)"/><stop offset="0.7200" stop-color="rgb(251,230,215)"/><stop offset="0.7675" stop-color="rgb(251,223,205)"/><stop offset="0.8130" stop-color="rgb(250,215,192)"/><stop offset="0.8600" stop-color="rgb(248,205,176)"/><stop offset="0.9050" stop-color="rgb(246,192,156)"/><stop offset="0.9525" stop-color="rgb(244,173,125)"/><stop offset="0.9800" stop-color="rgb(242,158,101)"/><stop offset="1.0000" stop-color="rgb(240,143,78)"/></linearGradient><linearGradient id="g1s6" gradientUnits="userSpaceOnUse" x1="42.40" y1="0" x2="704.00" y2="0"><stop offset="0.0000" stop-color="rgb(240,148,85)"/><stop offset="0.0200" stop-color="rgb(242,161,106)"/><stop offset="0.0475" stop-color="rgb(244,175,128)"/><stop offset="0.0950" stop-color="rgb(246,192,156)"/><stop offset="0.1400" stop-color="rgb(248,205,175)"/><stop offset="0.1870" stop-color="rgb(249,215,191)"/><stop offset="0.2325" stop-color="rgb(250,222,203)"/><stop offset="0.2800" stop-color="rgb(251,228,212)"/><stop offset="0.3350" stop-color="rgb(252,235,223)"/><stop offset="0.4000" stop-color="rgb(253,239,229)"/><stop offset="0.5000" stop-color="rgb(253,242,235)"/><stop offset="0.6000" stop-color="rgb(253,239,229)"/><stop offset="0.6650" stop-color="rgb(252,235,223)"/><stop offset="0.7200" stop-color="rgb(251,228,212)"/><stop offset="0.7675" stop-color="rgb(250,222,203)"/><stop offset="0.8130" stop-color="rgb(249,215,191)"/><stop offset="0.8600" stop-color="rgb(248,205,175)"/><stop offset="0.9050" stop-color="rgb(246,192,156)"/><stop offset="0.9525" stop-color="rgb(244,175,128)"/><stop offset="0.9800" stop-color="rgb(242,161,106)"/><stop offset="1.0000" stop-color="rgb(240,148,85)"/></linearGradient><linearGradient id="g1s7" gradientUnits="userSpaceOnUse" x1="42.40" y1="0" x2="704.00" y2="0"><stop offset="0.0000" stop-color="rgb(241,152,92)"/><stop offset="0.0200" stop-color="rgb(242,164,111)"/><stop offset="0.0475" stop-color="rgb(244,176,130)"/><stop offset="0.0950" stop-color="rgb(246,193,156)"/><stop offset="0.1400" stop-color="rgb(248,204,175)"/><stop offset="0.1870" stop-color="rgb(249,214,190)"/><stop offset="0.2325" stop-color="rgb(250,221,201)"/><stop offset="0.2800" stop-color="rgb(251,227,210)"/><stop offset="0.3350" stop-color="rgb(252,233,220)"/><stop offset="0.4000" stop-color="rgb(252,237,226)"/><stop offset="0.5000" stop-color="rgb(253,240,231)"/><stop offset="0.6000" stop-color="rgb(252,237,226)"/><stop offset="0.6650" stop-color="rgb(252,233,220)"/><stop offset="0.7200" stop-color="rgb(251,227,210)"/><stop offset="0.7675" stop-color="rgb(250,221,201)"/><stop offset="0.8130" stop-color="rgb(249,214,190)"/><stop offset="0.8600" stop-color="rgb(248,204,175)"/><stop offset="0.9050" stop-color="rgb(246,193,156)"/><stop offset="0.9525" stop-color="rgb(244,176,130)"/><stop offset="0.9800" stop-color="rgb(242,164,111)"/><stop offset="1.0000" stop-color="rgb(241,152,92)"/></linearGradient><linearGradient id="g1s8" gradientUnits="userSpaceOnUse" x1="42.40" y1="0" x2="704.00" y2="0"><stop offset="0.0000" stop-color="rgb(241,154,95)"/><stop offset="0.0200" stop-color="rgb(242,165,112)"/><stop offset="0.0475" stop-color="rgb(244,176,129)"/><stop offset="0.0950" stop-color="rgb(246,192,155)"/><stop offset="0.1400" stop-color="rgb(248,203,173)"/><stop offset="0.1870" stop-color="rgb(249,213,188)"/><stop offset="0.2325" stop-color="rgb(250,220,199)"/><stop offset="0.2800" stop-color="rgb(251,225,208)"/><stop offset="0.3350" stop-color="rgb(252,231,218)"/><stop offset="0.4000" stop-color="rgb(252,235,224)"/><stop offset="0.5000" stop-color="rgb(253,238,228)"/><stop offset="0.6000" stop-color="rgb(252,235,224)"/><stop offset="0.6650" stop-color="rgb(252,231,218)"/><stop offset="0.7200" stop-color="rgb(251,225,208)"/><stop offset="0.7675" stop-color="rgb(250,220,199)"/><stop offset="0.8130" stop-color="rgb(249,213,188)"/><stop offset="0.8600" stop-color="rgb(248,203,173)"/><stop offset="0.9050" stop-color="rgb(246,192,155)"/><stop offset="0.9525" stop-color="rgb(244,176,129)"/><stop offset="0.9800" stop-color="rgb(242,165,112)"/><stop offset="1.0000" stop-color="rgb(241,154,95)"/></linearGradient><linearGradient id="g1s9" gradientUnits="userSpaceOnUse" x1="42.40" y1="0" x2="704.00" y2="0"><stop offset="0.0000" stop-color="rgb(241,156,98)"/><stop offset="0.0200" stop-color="rgb(243,165,113)"/><stop offset="0.0475" stop-color="rgb(244,175,129)"/><stop offset="0.0950" stop-color="rgb(246,191,154)"/><stop offset="0.1400" stop-color="rgb(248,202,172)"/><stop offset="0.1870" stop-color="rgb(249,212,186)"/><stop offset="0.2325" stop-color="rgb(250,218,197)"/><stop offset="0.2800" stop-color="rgb(251,224,205)"/><stop offset="0.3350" stop-color="rgb(252,230,215)"/><stop offset="0.4000" stop-color="rgb(252,233,221)"/><stop offset="0.5000" stop-color="rgb(252,236,225)"/><stop offset="0.6000" stop-color="rgb(252,233,221)"/><stop offset="0.6650" stop-color="rgb(252,230,215)"/><stop offset="0.7200" stop-color="rgb(251,224,205)"/><stop offset="0.7675" stop-color="rgb(250,218,197)"/><stop offset="0.8130" stop-color="rgb(249,212,186)"/><stop offset="0.8600" stop-color="rgb(248,202,172)"/><stop offset="0.9050" stop-color="rgb(246,191,154)"/><stop offset="0.9525" stop-color="rgb(244,175,129)"/><stop offset="0.9800" stop-color="rgb(243,165,113)"/><stop offset="1.0000" stop-color="rgb(241,156,98)"/></linearGradient><linearGradient id="g1s10" gradientUnits="userSpaceOnUse" x1="42.40" y1="0" x2="704.00" y2="0"><stop offset="0.0000" stop-color="rgb(241,157,100)"/><stop offset="0.0200" stop-color="rgb(243,166,114)"/><stop offset="0.0475" stop-color="rgb(244,175,129)"/><stop offset="0.0950" stop-color="rgb(246,191,153)"/><stop offset="0.1400" stop-color="rgb(248,202,170)"/><stop offset="0.1870" stop-color="rgb(249,211,185)"/><stop offset="0.2325" stop-color="rgb(250,217,195)"/><stop offset="0.2800" stop-color="rgb(250,222,203)"/><stop offset="0.3350" stop-color="rgb(251,229,213)"/><stop offset="0.4000" stop-color="rgb(252,232,218)"/><stop offset="0.5000" stop-color="rgb(252,234,222)"/><stop offset="0.6000" stop-color="rgb(252,232,218)"/><stop offset="0.6650" stop-color="rgb(251,229,213)"/><stop offset="0.7200" stop-color="rgb(250,222,203)"/><stop offset="0.7675" stop-color="rgb(250,217,195)"/><stop offset="0.8130" stop-color="rgb(249,211,185)"/><stop offset="0.8600" stop-color="rgb(248,202,170)"/><stop offset="0.9050" stop-color="rgb(246,191,153)"/><stop offset="0.9525" stop-color="rgb(244,175,129)"/><stop offset="0.9800" stop-color="rgb(243,166,114)"/><stop offset="1.0000" stop-color="rgb(241,157,100)"/></linearGradient><linearGradient id="g1s11" gradientUnits="userSpaceOnUse" x1="42.40" y1="0" x2="704.00" y2="0"><stop offset="0.0000" stop-color="rgb(242,159,103)"/><stop offset="0.0200" stop-color="rgb(243,166,115)"/><stop offset="0.0475" stop-color="rgb(244,175,128)"/><stop offset="0.0950" stop-color="rgb(246,190,152)"/><stop offset="0.1400" stop-color="rgb(247,201,169)"/><stop offset="0.1870" stop-color="rgb(249,209,183)"/><stop offset="0.2325" stop-color="rgb(250,216,193)"/><stop offset="0.2800" stop-color="rgb(250,221,201)"/><stop offset="0.3350" stop-color="rgb(251,227,211)"/><stop offset="0.4000" stop-color="rgb(252,230,216)"/><stop offset="0.5000" stop-color="rgb(252,232,219)"/><stop offset="0.6000" stop-color="rgb(252,230,216)"/><stop offset="0.6650" stop-color="rgb(251,227,211)"/><stop offset="0.7200" stop-color="rgb(250,221,201)"/><stop offset="0.7675" stop-color="rgb(250,216,193)"/><stop offset="0.8130" stop-color="rgb(249,209,183)"/><stop offset="0.8600" stop-color="rgb(247,201,169)"/><stop offset="0.9050" stop-color="rgb(246,190,152)"/><stop offset="0.9525" stop-color="rgb(244,175,128)"/><stop offset="0.9800" stop-color="rgb(243,166,115)"/><stop offset="1.0000" stop-color="rgb(242,159,103)"/></linearGradient><linearGradient id="g1s12" gradientUnits="userSpaceOnUse" x1="42.40" y1="0" x2="704.00" y2="0"><stop offset="0.0000" stop-color="rgb(242,159,103)"/><stop offset="0.0200" stop-color="rgb(243,166,114)"/><stop offset="0.0475" stop-color="rgb(244,175,127)"/><stop offset="0.0950" stop-color="rgb(246,189,151)"/><stop offset="0.1400" stop-color="rgb(247,199,167)"/><stop offset="0.1870" stop-color="rgb(248,208,180)"/><stop offset="0.2325" stop-color="rgb(249,214,190)"/><stop offset="0.2800" stop-color="rgb(250,219,197)"/><stop offset="0.3350" stop-color="rgb(251,225,207)"/><stop offset="0.4000" stop-color="rgb(251,228,212)"/><stop offset="0.5000" stop-color="rgb(252,230,215)"/><stop offset="0.6000" stop-color="rgb(251,228,212)"/><stop offset="0.6650" stop-color="rgb(251,225,207)"/><stop offset="0.7200" stop-color="rgb(250,219,197)"/><stop offset="0.7675" stop-color="rgb(249,214,190)"/><stop offset="0.8130" stop-color="rgb(248,208,180)"/><stop offset="0.8600" stop-color="rgb(247,199,167)"/><stop offset="0.9050" stop-color="rgb(246,189,151)"/><stop offset="0.9525" stop-color="rgb(244,175,127)"/><stop offset="0.9800" stop-color="rgb(243,166,114)"/><stop offset="1.0000" stop-color="rgb(242,159,103)"/></linearGradient><linearGradient id="g1s13" gradientUnits="userSpaceOnUse" x1="42.40" y1="0" x2="704.00" y2="0"><stop offset="0.0000" stop-color="rgb(242,159,103)"/><stop offset="0.0200" stop-color="rgb(243,166,114)"/><stop offset="0.0475" stop-color="rgb(244,174,127)"/><stop offset="0.0950" stop-color="rgb(246,188,149)"/><stop offset="0.1400" stop-color="rgb(247,198,164)"/><stop offset="0.1870" stop-color="rgb(248,205,177)"/><stop offset="0.2325" stop-color="rgb(249,211,186)"/><stop offset="0.2800" stop-color="rgb(250,216,194)"/><stop offset="0.3350" stop-color="rgb(250,222,203)"/><stop offset="0.4000" stop-color="rgb(251,225,208)"/><stop offset="0.5000" stop-color="rgb(251,227,211)"/><stop offset="0.6000" stop-color="rgb(251,225,208)"/><stop offset="0.6650" stop-color="rgb(250,222,203)"/><stop offset="0.7200" stop-color="rgb(250,216,194)"/><stop offset="0.7675" stop-color="rgb(249,211,186)"/><stop offset="0.8130" stop-color="rgb(248,205,177)"/><stop offset="0.8600" stop-color="rgb(247,198,164)"/><stop offset="0.9050" stop-color="rgb(246,188,149)"/><stop offset="0.9525" stop-color="rgb(244,174,127)"/><stop offset="0.9800" stop-color="rgb(243,166,114)"/><stop offset="1.0000" stop-color="rgb(242,159,103)"/></linearGradient><linearGradient id="g1s14" gradientUnits="userSpaceOnUse" x1="42.40" y1="0" x2="704.00" y2="0"><stop offset="0.0000" stop-color="rgb(242,159,102)"/><stop offset="0.0200" stop-color="rgb(243,165,113)"/><stop offset="0.0475" stop-color="rgb(244,174,126)"/><stop offset="0.0950" stop-color="rgb(246,187,146)"/><stop offset="0.1400" stop-color="rgb(247,196,161)"/><stop offset="0.1870" stop-color="rgb(248,203,173)"/><stop offset="0.2325" stop-color="rgb(249,209,182)"/><stop offset="0.2800" stop-color="rgb(249,214,190)"/><stop offset="0.3350" stop-color="rgb(250,220,199)"/><stop offset="0.4000" stop-color="rgb(251,223,204)"/><stop offset="0.5000" stop-color="rgb(251,225,207)"/><stop offset="0.6000" stop-color="rgb(251,223,204)"/><stop offset="0.6650" stop-color="rgb(250,220,199)"/><stop offset="0.7200" stop-color="rgb(249,214,190)"/><stop offset="0.7675" stop-color="rgb(249,209,182)"/><stop offset="0.8130" stop-color="rgb(248,203,173)"/><stop offset="0.8600" stop-color="rgb(247,196,161)"/><stop offset="0.9050" stop-color="rgb(246,187,146)"/><stop offset="0.9525" stop-color="rgb(244,174,126)"/><stop offset="0.9800" stop-color="rgb(243,165,113)"/><stop offset="1.0000" stop-color="rgb(242,159,102)"/></linearGradient><linearGradient id="g1s15" gradientUnits="userSpaceOnUse" x1="42.40" y1="0" x2="704.00" y2="0"><stop offset="0.0000" stop-color="rgb(242,158,102)"/><stop offset="0.0200" stop-color="rgb(243,165,112)"/><stop offset="0.0475" stop-color="rgb(244,173,125)"/><stop offset="0.0950" stop-color="rgb(245,185,144)"/><stop offset="0.1400" stop-color="rgb(247,194,159)"/><stop offset="0.1870" stop-color="rgb(248,201,170)"/><stop offset="0.2325" stop-color="rgb(248,207,178)"/><stop offset="0.2800" stop-color="rgb(249,211,186)"/><stop offset="0.3350" stop-color="rgb(250,217,195)"/><stop offset="0.4000" stop-color="rgb(250,220,200)"/><stop offset="0.5000" stop-color="rgb(251,223,204)"/><stop offset="0.6000" stop-color="rgb(250,220,200)"/><stop offset="0.6650" stop-color="rgb(250,217,195)"/><stop offset="0.7200" stop-color="rgb(249,211,186)"/><stop offset="0.7675" stop-color="rgb(248,207,178)"/><stop offset="0.8130" stop-color="rgb(248,201,170)"/><stop offset="0.8600" stop-color="rgb(247,194,159)"/><stop offset="0.9050" stop-color="rgb(245,185,144)"/><stop offset="0.9525" stop-color="rgb(244,173,125)"/><stop offset="0.9800" stop-color="rgb(243,165,112)"/><stop offset="1.0000" stop-color="rgb(242,158,102)"/></linearGradient><linearGradient id="g1s16" gradientUnits="userSpaceOnUse" x1="42.40" y1="0" x2="704.00" y2="0"><stop offset="0.0000" stop-color="rgb(242,158,101)"/><stop offset="0.0200" stop-color="rgb(242,164,112)"/><stop offset="0.0475" stop-color="rgb(244,173,125)"/><stop offset="0.0950" stop-color="rgb(245,184,142)"/><stop offset="0.1400" stop-color="rgb(246,193,156)"/><stop offset="0.1870" stop-color="rgb(247,199,167)"/><stop offset="0.2325" stop-color="rgb(248,204,175)"/><stop offset="0.2800" stop-color="rgb(249,209,182)"/><stop offset="0.3350" stop-color="rgb(249,214,191)"/><stop offset="0.4000" stop-color="rgb(250,218,196)"/><stop offset="0.5000" stop-color="rgb(250,220,200)"/><stop offset="0.6000" stop-color="rgb(250,218,196)"/><stop offset="0.6650" stop-color="rgb(249,214,191)"/><stop offset="0.7200" stop-color="rgb(249,209,182)"/><stop offset="0.7675" stop-color="rgb(248,204,175)"/><stop offset="0.8130" stop-color="rgb(247,199,167)"/><stop offset="0.8600" stop-color="rgb(246,193,156)"/><stop offset="0.9050" stop-color="rgb(245,184,142)"/><stop offset="0.9525" stop-color="rgb(244,173,125)"/><stop offset="0.9800" stop-color="rgb(242,164,112)"/><stop offset="1.0000" stop-color="rgb(242,158,101)"/></linearGradient><linearGradient id="g1s17" gradientUnits="userSpaceOnUse" x1="42.40" y1="0" x2="704.00" y2="0"><stop offset="0.0000" stop-color="rgb(242,158,101)"/><stop offset="0.0200" stop-color="rgb(242,164,111)"/><stop offset="0.0475" stop-color="rgb(244,172,124)"/><stop offset="0.0950" stop-color="rgb(245,183,140)"/><stop offset="0.1400" stop-color="rgb(246,191,153)"/><stop offset="0.1870" stop-color="rgb(247,197,163)"/><stop offset="0.2325" stop-color="rgb(248,202,171)"/><stop offset="0.2800" stop-color="rgb(248,207,178)"/><stop offset="0.3350" stop-color="rgb(249,212,186)"/><stop offset="0.4000" stop-color="rgb(249,215,192)"/><stop offset="0.5000" stop-color="rgb(250,218,196)"/><stop offset="0.6000" stop-color="rgb(249,215,192)"/><stop offset="0.6650" stop-color="rgb(249,212,186)"/><stop offset="0.7200" stop-color="rgb(248,207,178)"/><stop offset="0.7675" stop-color="rgb(248,202,171)"/><stop offset="0.8130" stop-color="rgb(247,197,163)"/><stop offset="0.8600" stop-color="rgb(246,191,153)"/><stop offset="0.9050" stop-color="rgb(245,183,140)"/><stop offset="0.9525" stop-color="rgb(244,172,124)"/><stop offset="0.9800" stop-color="rgb(242,164,111)"/><stop offset="1.0000" stop-color="rgb(242,158,101)"/></linearGradient><linearGradient id="g1s18" gradientUnits="userSpaceOnUse" x1="42.40" y1="0" x2="704.00" y2="0"><stop offset="0.0000" stop-color="rgb(241,157,99)"/><stop offset="0.0200" stop-color="rgb(242,163,109)"/><stop offset="0.0475" stop-color="rgb(243,171,122)"/><stop offset="0.0950" stop-color="rgb(245,181,138)"/><stop offset="0.1400" stop-color="rgb(246,189,150)"/><stop offset="0.1870" stop-color="rgb(247,195,160)"/><stop offset="0.2325" stop-color="rgb(247,200,168)"/><stop offset="0.2800" stop-color="rgb(248,205,175)"/><stop offset="0.3350" stop-color="rgb(249,209,183)"/><stop offset="0.4000" stop-color="rgb(249,213,188)"/><stop offset="0.5000" stop-color="rgb(249,215,192)"/><stop offset="0.6000" stop-color="rgb(249,213,188)"/><stop offset="0.6650" stop-color="rgb(249,209,183)"/><stop offset="0.7200" stop-color="rgb(248,205,175)"/><stop offset="0.7675" stop-color="rgb(247,200,168)"/><stop offset="0.8130" stop-color="rgb(247,195,160)"/><stop offset="0.8600" stop-color="rgb(246,189,150)"/><stop offset="0.9050" stop-color="rgb(245,181,138)"/><stop offset="0.9525" stop-color="rgb(243,171,122)"/><stop offset="0.9800" stop-color="rgb(242,163,109)"/><stop offset="1.0000" stop-color="rgb(241,157,99)"/></linearGradient><linearGradient id="g1s19" gradientUnits="userSpaceOnUse" x1="42.40" y1="0" x2="704.00" y2="0"><stop offset="0.0000" stop-color="rgb(241,156,98)"/><stop offset="0.0200" stop-color="rgb(242,162,108)"/><stop offset="0.0475" stop-color="rgb(243,170,120)"/><stop offset="0.0950" stop-color="rgb(245,180,135)"/><stop offset="0.1400" stop-color="rgb(246,187,148)"/><stop offset="0.1870" stop-color="rgb(246,193,157)"/><stop offset="0.2325" stop-color="rgb(247,198,165)"/><stop offset="0.2800" stop-color="rgb(248,202,172)"/><stop offset="0.3350" stop-color="rgb(248,207,179)"/><stop offset="0.4000" stop-color="rgb(249,210,184)"/><stop offset="0.5000" stop-color="rgb(249,213,188)"/><stop offset="0.6000" stop-color="rgb(249,210,184)"/><stop offset="0.6650" stop-color="rgb(248,207,179)"/><stop offset="0.7200" stop-color="rgb(248,202,172)"/><stop offset="0.7675" stop-color="rgb(247,198,165)"/><stop offset="0.8130" stop-color="rgb(246,193,157)"/><stop offset="0.8600" stop-color="rgb(246,187,148)"/><stop offset="0.9050" stop-color="rgb(245,180,135)"/><stop offset="0.9525" stop-color="rgb(243,170,120)"/><stop offset="0.9800" stop-color="rgb(242,162,108)"/><stop offset="1.0000" stop-color="rgb(241,156,98)"/></linearGradient><linearGradient id="g1s20" gradientUnits="userSpaceOnUse" x1="42.40" y1="0" x2="704.00" y2="0"><stop offset="0.0000" stop-color="rgb(241,155,96)"/><stop offset="0.0200" stop-color="rgb(242,161,106)"/><stop offset="0.0475" stop-color="rgb(243,169,118)"/><stop offset="0.0950" stop-color="rgb(244,178,133)"/><stop offset="0.1400" stop-color="rgb(245,185,145)"/><stop offset="0.1870" stop-color="rgb(246,191,154)"/><stop offset="0.2325" stop-color="rgb(247,196,162)"/><stop offset="0.2800" stop-color="rgb(247,200,168)"/><stop offset="0.3350" stop-color="rgb(248,205,176)"/><stop offset="0.4000" stop-color="rgb(248,208,180)"/><stop offset="0.5000" stop-color="rgb(249,211,185)"/><stop offset="0.6000" stop-color="rgb(248,208,180)"/><stop offset="0.6650" stop-color="rgb(248,205,176)"/><stop offset="0.7200" stop-color="rgb(247,200,168)"/><stop offset="0.7675" stop-color="rgb(247,196,162)"/><stop offset="0.8130" stop-color="rgb(246,191,154)"/><stop offset="0.8600" stop-color="rgb(245,185,145)"/><stop offset="0.9050" stop-color="rgb(244,178,133)"/><stop offset="0.9525" stop-color="rgb(243,169,118)"/><stop offset="0.9800" stop-color="rgb(242,161,106)"/><stop offset="1.0000" stop-color="rgb(241,155,96)"/></linearGradient><linearGradient id="g1s21" gradientUnits="userSpaceOnUse" x1="42.40" y1="0" x2="704.00" y2="0"><stop offset="0.0000" stop-color="rgb(241,154,94)"/><stop offset="0.0200" stop-color="rgb(242,160,104)"/><stop offset="0.0475" stop-color="rgb(243,167,116)"/><stop offset="0.0950" stop-color="rgb(244,177,131)"/><stop offset="0.1400" stop-color="rgb(245,184,142)"/><stop offset="0.1870" stop-color="rgb(246,190,151)"/><stop offset="0.2325" stop-color="rgb(247,194,159)"/><stop offset="0.2800" stop-color="rgb(247,198,165)"/><stop offset="0.3350" stop-color="rgb(248,203,172)"/><stop offset="0.4000" stop-color="rgb(248,206,177)"/><stop offset="0.5000" stop-color="rgb(249,208,181)"/><stop offset="0.6000" stop-color="rgb(248,206,177)"/><stop offset="0.6650" stop-color="rgb(248,203,172)"/><stop offset="0.7200" stop-color="rgb(247,198,165)"/><stop offset="0.7675" stop-color="rgb(247,194,159)"/><stop offset="0.8130" stop-color="rgb(246,190,151)"/><stop offset="0.8600" stop-color="rgb(245,184,142)"/><stop offset="0.9050" stop-color="rgb(244,177,131)"/><stop offset="0.9525" stop-color="rgb(243,167,116)"/><stop offset="0.9800" stop-color="rgb(242,160,104)"/><stop offset="1.0000" stop-color="rgb(241,154,94)"/></linearGradient><linearGradient id="g1s22" gradientUnits="userSpaceOnUse" x1="42.40" y1="0" x2="704.00" y2="0"><stop offset="0.0000" stop-color="rgb(241,153,93)"/><stop offset="0.0200" stop-color="rgb(242,159,102)"/><stop offset="0.0475" stop-color="rgb(243,166,114)"/><stop offset="0.0950" stop-color="rgb(244,175,128)"/><stop offset="0.1400" stop-color="rgb(245,182,139)"/><stop offset="0.1870" stop-color="rgb(246,188,148)"/><stop offset="0.2325" stop-color="rgb(246,192,155)"/><stop offset="0.2800" stop-color="rgb(247,196,162)"/><stop offset="0.3350" stop-color="rgb(247,200,169)"/><stop offset="0.4000" stop-color="rgb(248,203,173)"/><stop offset="0.5000" stop-color="rgb(248,206,177)"/><stop offset="0.6000" stop-color="rgb(248,203,173)"/><stop offset="0.6650" stop-color="rgb(247,200,169)"/><stop offset="0.7200" stop-color="rgb(247,196,162)"/><stop offset="0.7675" stop-color="rgb(246,192,155)"/><stop offset="0.8130" stop-color="rgb(246,188,148)"/><stop offset="0.8600" stop-color="rgb(245,182,139)"/><stop offset="0.9050" stop-color="rgb(244,175,128)"/><stop offset="0.9525" stop-color="rgb(243,166,114)"/><stop offset="0.9800" stop-color="rgb(242,159,102)"/><stop offset="1.0000" stop-color="rgb(241,153,93)"/></linearGradient><linearGradient id="g1s23" gradientUnits="userSpaceOnUse" x1="42.40" y1="0" x2="704.00" y2="0"><stop offset="0.0000" stop-color="rgb(241,152,91)"/><stop offset="0.0200" stop-color="rgb(242,158,101)"/><stop offset="0.0475" stop-color="rgb(243,165,112)"/><stop offset="0.0950" stop-color="rgb(244,174,126)"/><stop offset="0.1400" stop-color="rgb(245,180,136)"/><stop offset="0.1870" stop-color="rgb(245,186,145)"/><stop offset="0.2325" stop-color="rgb(246,190,152)"/><stop offset="0.2800" stop-color="rgb(247,194,159)"/><stop offset="0.3350" stop-color="rgb(247,198,165)"/><stop offset="0.4000" stop-color="rgb(248,201,169)"/><stop offset="0.5000" stop-color="rgb(248,204,173)"/><stop offset="0.6000" stop-color="rgb(248,201,169)"/><stop offset="0.6650" stop-color="rgb(247,198,165)"/><stop offset="0.7200" stop-color="rgb(247,194,159)"/><stop offset="0.7675" stop-color="rgb(246,190,152)"/><stop offset="0.8130" stop-color="rgb(245,186,145)"/><stop offset="0.8600" stop-color="rgb(245,180,136)"/><stop offset="0.9050" stop-color="rgb(244,174,126)"/><stop offset="0.9525" stop-color="rgb(243,165,112)"/><stop offset="0.9800" stop-color="rgb(242,158,101)"/><stop offset="1.0000" stop-color="rgb(241,152,91)"/></linearGradient><linearGradient id="g1s24" gradientUnits="userSpaceOnUse" x1="42.40" y1="0" x2="704.00" y2="0"><stop offset="0.0000" stop-color="rgb(241,151,90)"/><stop offset="0.0200" stop-color="rgb(241,157,99)"/><stop offset="0.0475" stop-color="rgb(242,164,110)"/><stop offset="0.0950" stop-color="rgb(243,172,123)"/><stop offset="0.1400" stop-color="rgb(244,178,133)"/><stop offset="0.1870" stop-color="rgb(245,184,142)"/><stop offset="0.2325" stop-color="rgb(246,188,149)"/><stop offset="0.2800" stop-color="rgb(246,192,155)"/><stop offset="0.3350" stop-color="rgb(247,196,162)"/><stop offset="0.4000" stop-color="rgb(247,199,166)"/><stop offset="0.5000" stop-color="rgb(248,201,170)"/><stop offset="0.6000" stop-color="rgb(247,199,166)"/><stop offset="0.6650" stop-color="rgb(247,196,162)"/><stop offset="0.7200" stop-color="rgb(246,192,155)"/><stop offset="0.7675" stop-color="rgb(246,188,149)"/><stop offset="0.8130" stop-color="rgb(245,184,142)"/><stop offset="0.8600" stop-color="rgb(244,178,133)"/><stop offset="0.9050" stop-color="rgb(243,172,123)"/><stop offset="0.9525" stop-color="rgb(242,164,110)"/><stop offset="0.9800" stop-color="rgb(241,157,99)"/><stop offset="1.0000" stop-color="rgb(241,151,90)"/></linearGradient><linearGradient id="g1s25" gradientUnits="userSpaceOnUse" x1="42.40" y1="0" x2="704.00" y2="0"><stop offset="0.0000" stop-color="rgb(240,150,88)"/><stop offset="0.0200" stop-color="rgb(241,155,97)"/><stop offset="0.0475" stop-color="rgb(242,162,108)"/><stop offset="0.0950" stop-color="rgb(243,170,121)"/><stop offset="0.1400" stop-color="rgb(244,176,130)"/><stop offset="0.1870" stop-color="rgb(245,182,139)"/><stop offset="0.2325" stop-color="rgb(245,186,146)"/><stop offset="0.2800" stop-color="rgb(246,190,152)"/><stop offset="0.3350" stop-color="rgb(247,194,158)"/><stop offset="0.4000" stop-color="rgb(247,196,162)"/><stop offset="0.5000" stop-color="rgb(247,199,166)"/><stop offset="0.6000" stop-color="rgb(247,196,162)"/><stop offset="0.6650" stop-color="rgb(247,194,158)"/><stop offset="0.7200" stop-color="rgb(246,190,152)"/><stop offset="0.7675" stop-color="rgb(245,186,146)"/><stop offset="0.8130" stop-color="rgb(245,182,139)"/><stop offset="0.8600" stop-color="rgb(244,176,130)"/><stop offset="0.9050" stop-color="rgb(243,170,121)"/><stop offset="0.9525" stop-color="rgb(242,162,108)"/><stop offset="0.9800" stop-color="rgb(241,155,97)"/><stop offset="1.0000" stop-color="rgb(240,150,88)"/></linearGradient><linearGradient id="g1s26" gradientUnits="userSpaceOnUse" x1="42.40" y1="0" x2="704.00" y2="0"><stop offset="0.0000" stop-color="rgb(240,148,86)"/><stop offset="0.0200" stop-color="rgb(241,154,95)"/><stop offset="0.0475" stop-color="rgb(242,160,105)"/><stop offset="0.0950" stop-color="rgb(243,168,118)"/><stop offset="0.1400" stop-color="rgb(244,175,128)"/><stop offset="0.1870" stop-color="rgb(245,180,136)"/><stop offset="0.2325" stop-color="rgb(245,184,142)"/><stop offset="0.2800" stop-color="rgb(246,188,149)"/><stop offset="0.3350" stop-color="rgb(246,192,155)"/><stop offset="0.4000" stop-color="rgb(247,194,159)"/><stop offset="0.5000" stop-color="rgb(247,197,163)"/><stop offset="0.6000" stop-color="rgb(247,194,159)"/><stop offset="0.6650" stop-color="rgb(246,192,155)"/><stop offset="0.7200" stop-color="rgb(246,188,149)"/><stop offset="0.7675" stop-color="rgb(245,184,142)"/><stop offset="0.8130" stop-color="rgb(245,180,136)"/><stop offset="0.8600" stop-color="rgb(244,175,128)"/><stop offset="0.9050" stop-color="rgb(243,168,118)"/><stop offset="0.9525" stop-color="rgb(242,160,105)"/><stop offset="0.9800" stop-color="rgb(241,154,95)"/><stop offset="1.0000" stop-color="rgb(240,148,86)"/></linearGradient><linearGradient id="g1s27" gradientUnits="userSpaceOnUse" x1="42.40" y1="0" x2="704.00" y2="0"><stop offset="0.0000" stop-color="rgb(240,147,84)"/><stop offset="0.0200" stop-color="rgb(241,152,92)"/><stop offset="0.0475" stop-color="rgb(242,159,103)"/><stop offset="0.0950" stop-color="rgb(243,167,115)"/><stop offset="0.1400" stop-color="rgb(244,173,125)"/><stop offset="0.1870" stop-color="rgb(244,178,133)"/><stop offset="0.2325" stop-color="rgb(245,182,139)"/><stop offset="0.2800" stop-color="rgb(245,186,145)"/><stop offset="0.3350" stop-color="rgb(246,190,151)"/><stop offset="0.4000" stop-color="rgb(246,192,155)"/><stop offset="0.5000" stop-color="rgb(247,194,159)"/><stop offset="0.6000" stop-color="rgb(246,192,155)"/><stop offset="0.6650" stop-color="rgb(246,190,151)"/><stop offset="0.7200" stop-color="rgb(245,186,145)"/><stop offset="0.7675" stop-color="rgb(245,182,139)"/><stop offset="0.8130" stop-color="rgb(244,178,133)"/><stop offset="0.8600" stop-color="rgb(244,173,125)"/><stop offset="0.9050" stop-color="rgb(243,167,115)"/><stop offset="0.9525" stop-color="rgb(242,159,103)"/><stop offset="0.9800" stop-color="rgb(241,152,92)"/><stop offset="1.0000" stop-color="rgb(240,147,84)"/></linearGradient><linearGradient id="g1s28" gradientUnits="userSpaceOnUse" x1="42.40" y1="0" x2="704.00" y2="0"><stop offset="0.0000" stop-color="rgb(240,146,82)"/><stop offset="0.0200" stop-color="rgb(241,151,90)"/><stop offset="0.0475" stop-color="rgb(241,157,100)"/><stop offset="0.0950" stop-color="rgb(243,165,112)"/><stop offset="0.1400" stop-color="rgb(243,171,122)"/><stop offset="0.1870" stop-color="rgb(244,176,129)"/><stop offset="0.2325" stop-color="rgb(245,180,136)"/><stop offset="0.2800" stop-color="rgb(245,184,142)"/><stop offset="0.3350" stop-color="rgb(246,187,148)"/><stop offset="0.4000" stop-color="rgb(246,190,152)"/><stop offset="0.5000" stop-color="rgb(246,192,155)"/><stop offset="0.6000" stop-color="rgb(246,190,152)"/><stop offset="0.6650" stop-color="rgb(246,187,148)"/><stop offset="0.7200" stop-color="rgb(245,184,142)"/><stop offset="0.7675" stop-color="rgb(245,180,136)"/><stop offset="0.8130" stop-color="rgb(244,176,129)"/><stop offset="0.8600" stop-color="rgb(243,171,122)"/><stop offset="0.9050" stop-color="rgb(243,165,112)"/><stop offset="0.9525" stop-color="rgb(241,157,100)"/><stop offset="0.9800" stop-color="rgb(241,151,90)"/><stop offset="1.0000" stop-color="rgb(240,146,82)"/></linearGradient><linearGradient id="g1s29" gradientUnits="userSpaceOnUse" x1="42.40" y1="0" x2="704.00" y2="0"><stop offset="0.0000" stop-color="rgb(240,145,80)"/><stop offset="0.0200" stop-color="rgb(240,150,88)"/><stop offset="0.0475" stop-color="rgb(241,156,98)"/><stop offset="0.0950" stop-color="rgb(242,163,110)"/><stop offset="0.1400" stop-color="rgb(243,169,119)"/><stop offset="0.1870" stop-color="rgb(244,174,126)"/><stop offset="0.2325" stop-color="rgb(244,178,132)"/><stop offset="0.2800" stop-color="rgb(245,181,138)"/><stop offset="0.3350" stop-color="rgb(245,185,144)"/><stop offset="0.4000" stop-color="rgb(246,188,148)"/><stop offset="0.5000" stop-color="rgb(246,190,152)"/><stop offset="0.6000" stop-color="rgb(246,188,148)"/><stop offset="0.6650" stop-color="rgb(245,185,144)"/><stop offset="0.7200" stop-color="rgb(245,181,138)"/><stop offset="0.7675" stop-color="rgb(244,178,132)"/><stop offset="0.8130" stop-color="rgb(244,174,126)"/><stop offset="0.8600" stop-color="rgb(243,169,119)"/><stop offset="0.9050" stop-color="rgb(242,163,110)"/><stop offset="0.9525" stop-color="rgb(241,156,98)"/><stop offset="0.9800" stop-color="rgb(240,150,88)"/><stop offset="1.0000" stop-color="rgb(240,145,80)"/></linearGradient><linearGradient id="g1s30" gradientUnits="userSpaceOnUse" x1="42.40" y1="0" x2="704.00" y2="0"><stop offset="0.0000" stop-color="rgb(240,144,78)"/><stop offset="0.0200" stop-color="rgb(240,148,86)"/><stop offset="0.0475" stop-color="rgb(241,154,95)"/><stop offset="0.0950" stop-color="rgb(242,162,107)"/><stop offset="0.1400" stop-color="rgb(243,167,116)"/><stop offset="0.1870" stop-color="rgb(243,172,123)"/><stop offset="0.2325" stop-color="rgb(244,175,129)"/><stop offset="0.2800" stop-color="rgb(245,179,135)"/><stop offset="0.3350" stop-color="rgb(245,183,141)"/><stop offset="0.4000" stop-color="rgb(245,185,145)"/><stop offset="0.5000" stop-color="rgb(246,188,148)"/><stop offset="0.6000" stop-color="rgb(245,185,145)"/><stop offset="0.6650" stop-color="rgb(245,183,141)"/><stop offset="0.7200" stop-color="rgb(245,179,135)"/><stop offset="0.7675" stop-color="rgb(244,175,129)"/><stop offset="0.8130" stop-color="rgb(243,172,123)"/><stop offset="0.8600" stop-color="rgb(243,167,116)"/><stop offset="0.9050" stop-color="rgb(242,162,107)"/><stop offset="0.9525" stop-color="rgb(241,154,95)"/><stop offset="0.9800" stop-color="rgb(240,148,86)"/><stop offset="1.0000" stop-color="rgb(240,144,78)"/></linearGradient><linearGradient id="g1s31" gradientUnits="userSpaceOnUse" x1="42.40" y1="0" x2="704.00" y2="0"><stop offset="0.0000" stop-color="rgb(239,142,76)"/><stop offset="0.0200" stop-color="rgb(240,147,83)"/><stop offset="0.0475" stop-color="rgb(241,152,92)"/><stop offset="0.0950" stop-color="rgb(242,160,104)"/><stop offset="0.1400" stop-color="rgb(243,165,113)"/><stop offset="0.1870" stop-color="rgb(243,170,120)"/><stop offset="0.2325" stop-color="rgb(244,173,126)"/><stop offset="0.2800" stop-color="rgb(244,177,132)"/><stop offset="0.3350" stop-color="rgb(245,181,138)"/><stop offset="0.4000" stop-color="rgb(245,183,141)"/><stop offset="0.5000" stop-color="rgb(245,185,145)"/><stop offset="0.6000" stop-color="rgb(245,183,141)"/><stop offset="0.6650" stop-color="rgb(245,181,138)"/><stop offset="0.7200" stop-color="rgb(244,177,132)"/><stop offset="0.7675" stop-color="rgb(244,173,126)"/><stop offset="0.8130" stop-color="rgb(243,170,120)"/><stop offset="0.8600" stop-color="rgb(243,165,113)"/><stop offset="0.9050" stop-color="rgb(242,160,104)"/><stop offset="0.9525" stop-color="rgb(241,152,92)"/><stop offset="0.9800" stop-color="rgb(240,147,83)"/><stop offset="1.0000" stop-color="rgb(239,142,76)"/></linearGradient><linearGradient id="g1s32" gradientUnits="userSpaceOnUse" x1="42.40" y1="0" x2="704.00" y2="0"><stop offset="0.0000" stop-color="rgb(239,140,74)"/><stop offset="0.0200" stop-color="rgb(240,145,80)"/><stop offset="0.0475" stop-color="rgb(241,150,89)"/><stop offset="0.0950" stop-color="rgb(242,158,101)"/><stop offset="0.1400" stop-color="rgb(242,163,110)"/><stop offset="0.1870" stop-color="rgb(243,168,117)"/><stop offset="0.2325" stop-color="rgb(243,171,123)"/><stop offset="0.2800" stop-color="rgb(244,175,129)"/><stop offset="0.3350" stop-color="rgb(244,179,134)"/><stop offset="0.4000" stop-color="rgb(245,181,138)"/><stop offset="0.5000" stop-color="rgb(245,183,141)"/><stop offset="0.6000" stop-color="rgb(245,181,138)"/><stop offset="0.6650" stop-color="rgb(244,179,134)"/><stop offset="0.7200" stop-color="rgb(244,175,129)"/><stop offset="0.7675" stop-color="rgb(243,171,123)"/><stop offset="0.8130" stop-color="rgb(243,168,117)"/><stop offset="0.8600" stop-color="rgb(242,163,110)"/><stop offset="0.9050" stop-color="rgb(242,158,101)"/><stop offset="0.9525" stop-color="rgb(241,150,89)"/><stop offset="0.9800" stop-color="rgb(240,145,80)"/><stop offset="1.0000" stop-color="rgb(239,140,74)"/></linearGradient><linearGradient id="g1s33" gradientUnits="userSpaceOnUse" x1="42.40" y1="0" x2="704.00" y2="0"><stop offset="0.0000" stop-color="rgb(239,139,71)"/><stop offset="0.0200" stop-color="rgb(240,143,78)"/><stop offset="0.0475" stop-color="rgb(240,149,86)"/><stop offset="0.0950" stop-color="rgb(241,156,98)"/><stop offset="0.1400" stop-color="rgb(242,162,107)"/><stop offset="0.1870" stop-color="rgb(243,166,114)"/><stop offset="0.2325" stop-color="rgb(243,169,119)"/><stop offset="0.2800" stop-color="rgb(244,173,125)"/><stop offset="0.3350" stop-color="rgb(244,177,131)"/><stop offset="0.4000" stop-color="rgb(244,179,134)"/><stop offset="0.5000" stop-color="rgb(245,181,137)"/><stop offset="0.6000" stop-color="rgb(244,179,134)"/><stop offset="0.6650" stop-color="rgb(244,177,131)"/><stop offset="0.7200" stop-color="rgb(244,173,125)"/><stop offset="0.7675" stop-color="rgb(243,169,119)"/><stop offset="0.8130" stop-color="rgb(243,166,114)"/><stop offset="0.8600" stop-color="rgb(242,162,107)"/><stop offset="0.9050" stop-color="rgb(241,156,98)"/><stop offset="0.9525" stop-color="rgb(240,149,86)"/><stop offset="0.9800" stop-color="rgb(240,143,78)"/><stop offset="1.0000" stop-color="rgb(239,139,71)"/></linearGradient><linearGradient id="g1s34" gradientUnits="userSpaceOnUse" x1="42.40" y1="0" x2="704.00" y2="0"><stop offset="0.0000" stop-color="rgb(239,137,68)"/><stop offset="0.0200" stop-color="rgb(239,141,75)"/><stop offset="0.0475" stop-color="rgb(240,147,84)"/><stop offset="0.0950" stop-color="rgb(241,154,95)"/><stop offset="0.1400" stop-color="rgb(242,160,104)"/><stop offset="0.1870" stop-color="rgb(242,164,111)"/><stop offset="0.2325" stop-color="rgb(243,168,116)"/><stop offset="0.2800" stop-color="rgb(243,171,122)"/><stop offset="0.3350" stop-color="rgb(244,175,128)"/><stop offset="0.4000" stop-color="rgb(244,177,131)"/><stop offset="0.5000" stop-color="rgb(244,178,134)"/><stop offset="0.6000" stop-color="rgb(244,177,131)"/><stop offset="0.6650" stop-color="rgb(244,175,128)"/><stop offset="0.7200" stop-color="rgb(243,171,122)"/><stop offset="0.7675" stop-color="rgb(243,168,116)"/><stop offset="0.8130" stop-color="rgb(242,164,111)"/><stop offset="0.8600" stop-color="rgb(242,160,104)"/><stop offset="0.9050" stop-color="rgb(241,154,95)"/><stop offset="0.9525" stop-color="rgb(240,147,84)"/><stop offset="0.9800" stop-color="rgb(239,141,75)"/><stop offset="1.0000" stop-color="rgb(239,137,68)"/></linearGradient><linearGradient id="g1s35" gradientUnits="userSpaceOnUse" x1="42.40" y1="0" x2="704.00" y2="0"><stop offset="0.0000" stop-color="rgb(238,136,66)"/><stop offset="0.0200" stop-color="rgb(239,140,72)"/><stop offset="0.0475" stop-color="rgb(240,145,81)"/><stop offset="0.0950" stop-color="rgb(241,152,93)"/><stop offset="0.1400" stop-color="rgb(242,158,101)"/><stop offset="0.1870" stop-color="rgb(242,162,108)"/><stop offset="0.2325" stop-color="rgb(243,166,113)"/><stop offset="0.2800" stop-color="rgb(243,169,119)"/><stop offset="0.3350" stop-color="rgb(244,172,124)"/><stop offset="0.4000" stop-color="rgb(244,174,127)"/><stop offset="0.5000" stop-color="rgb(244,176,130)"/><stop offset="0.6000" stop-color="rgb(244,174,127)"/><stop offset="0.6650" stop-color="rgb(244,172,124)"/><stop offset="0.7200" stop-color="rgb(243,169,119)"/><stop offset="0.7675" stop-color="rgb(243,166,113)"/><stop offset="0.8130" stop-color="rgb(242,162,108)"/><stop offset="0.8600" stop-color="rgb(242,158,101)"/><stop offset="0.9050" stop-color="rgb(241,152,93)"/><stop offset="0.9525" stop-color="rgb(240,145,81)"/><stop offset="0.9800" stop-color="rgb(239,140,72)"/><stop offset="1.0000" stop-color="rgb(238,136,66)"/></linearGradient><linearGradient id="g1s36" gradientUnits="userSpaceOnUse" x1="42.40" y1="0" x2="704.00" y2="0"><stop offset="0.0000" stop-color="rgb(238,134,63)"/><stop offset="0.0200" stop-color="rgb(239,138,70)"/><stop offset="0.0475" stop-color="rgb(240,143,78)"/><stop offset="0.0950" stop-color="rgb(241,151,90)"/><stop offset="0.1400" stop-color="rgb(241,156,98)"/><stop offset="0.1870" stop-color="rgb(242,160,105)"/><stop offset="0.2325" stop-color="rgb(242,164,110)"/><stop offset="0.2800" stop-color="rgb(243,167,115)"/><stop offset="0.3350" stop-color="rgb(243,170,121)"/><stop offset="0.4000" stop-color="rgb(244,172,124)"/><stop offset="0.5000" stop-color="rgb(244,174,127)"/><stop offset="0.6000" stop-color="rgb(244,172,124)"/><stop offset="0.6650" stop-color="rgb(243,170,121)"/><stop offset="0.7200" stop-color="rgb(243,167,115)"/><stop offset="0.7675" stop-color="rgb(242,164,110)"/><stop offset="0.8130" stop-color="rgb(242,160,105)"/><stop offset="0.8600" stop-color="rgb(241,156,98)"/><stop offset="0.9050" stop-color="rgb(241,151,90)"/><stop offset="0.9525" stop-color="rgb(240,143,78)"/><stop offset="0.9800" stop-color="rgb(239,138,70)"/><stop offset="1.0000" stop-color="rgb(238,134,63)"/></linearGradient><linearGradient id="g1s37" gradientUnits="userSpaceOnUse" x1="42.40" y1="0" x2="704.00" y2="0"><stop offset="0.0000" stop-color="rgb(238,132,61)"/><stop offset="0.0200" stop-color="rgb(239,136,67)"/><stop offset="0.0475" stop-color="rgb(239,141,75)"/><stop offset="0.0950" stop-color="rgb(240,149,87)"/><stop offset="0.1400" stop-color="rgb(241,154,95)"/><stop offset="0.1870" stop-color="rgb(242,158,102)"/><stop offset="0.2325" stop-color="rgb(242,162,107)"/><stop offset="0.2800" stop-color="rgb(243,165,112)"/><stop offset="0.3350" stop-color="rgb(243,168,117)"/><stop offset="0.4000" stop-color="rgb(243,170,120)"/><stop offset="0.5000" stop-color="rgb(243,172,123)"/><stop offset="0.6000" stop-color="rgb(243,170,120)"/><stop offset="0.6650" stop-color="rgb(243,168,117)"/><stop offset="0.7200" stop-color="rgb(243,165,112)"/><stop offset="0.7675" stop-color="rgb(242,162,107)"/><stop offset="0.8130" stop-color="rgb(242,158,102)"/><stop offset="0.8600" stop-color="rgb(241,154,95)"/><stop offset="0.9050" stop-color="rgb(240,149,87)"/><stop offset="0.9525" stop-color="rgb(239,141,75)"/><stop offset="0.9800" stop-color="rgb(239,136,67)"/><stop offset="1.0000" stop-color="rgb(238,132,61)"/></linearGradient><linearGradient id="g1s38" gradientUnits="userSpaceOnUse" x1="42.40" y1="0" x2="704.00" y2="0"><stop offset="0.0000" stop-color="rgb(238,131,58)"/><stop offset="0.0200" stop-color="rgb(238,135,64)"/><stop offset="0.0475" stop-color="rgb(239,140,72)"/><stop offset="0.0950" stop-color="rgb(240,147,84)"/><stop offset="0.1400" stop-color="rgb(241,152,92)"/><stop offset="0.1870" stop-color="rgb(241,157,99)"/><stop offset="0.2325" stop-color="rgb(242,160,104)"/><stop offset="0.2800" stop-color="rgb(242,163,109)"/><stop offset="0.3350" stop-color="rgb(243,166,114)"/><stop offset="0.4000" stop-color="rgb(243,168,117)"/><stop offset="0.5000" stop-color="rgb(243,169,119)"/><stop offset="0.6000" stop-color="rgb(243,168,117)"/><stop offset="0.6650" stop-color="rgb(243,166,114)"/><stop offset="0.7200" stop-color="rgb(242,163,109)"/><stop offset="0.7675" stop-color="rgb(242,160,104)"/><stop offset="0.8130" stop-color="rgb(241,157,99)"/><stop offset="0.8600" stop-color="rgb(241,152,92)"/><stop offset="0.9050" stop-color="rgb(240,147,84)"/><stop offset="0.9525" stop-color="rgb(239,140,72)"/><stop offset="0.9800" stop-color="rgb(238,135,64)"/><stop offset="1.0000" stop-color="rgb(238,131,58)"/></linearGradient><linearGradient id="g1s39" gradientUnits="userSpaceOnUse" x1="42.40" y1="0" x2="704.00" y2="0"><stop offset="0.0000" stop-color="rgb(238,129,56)"/><stop offset="0.0200" stop-color="rgb(238,132,61)"/><stop offset="0.0475" stop-color="rgb(239,137,67)"/><stop offset="0.0950" stop-color="rgb(240,144,79)"/><stop offset="0.1400" stop-color="rgb(240,149,87)"/><stop offset="0.1870" stop-color="rgb(241,153,94)"/><stop offset="0.2325" stop-color="rgb(241,157,99)"/><stop offset="0.2800" stop-color="rgb(242,160,104)"/><stop offset="0.3350" stop-color="rgb(242,163,110)"/><stop offset="0.4000" stop-color="rgb(243,165,113)"/><stop offset="0.5000" stop-color="rgb(243,167,116)"/><stop offset="0.6000" stop-color="rgb(243,165,113)"/><stop offset="0.6650" stop-color="rgb(242,163,110)"/><stop offset="0.7200" stop-color="rgb(242,160,104)"/><stop offset="0.7675" stop-color="rgb(241,157,99)"/><stop offset="0.8130" stop-color="rgb(241,153,94)"/><stop offset="0.8600" stop-color="rgb(240,149,87)"/><stop offset="0.9050" stop-color="rgb(240,144,79)"/><stop offset="0.9525" stop-color="rgb(239,137,67)"/><stop offset="0.9800" stop-color="rgb(238,132,61)"/><stop offset="1.0000" stop-color="rgb(238,129,56)"/></linearGradient><linearGradient id="g1s40" gradientUnits="userSpaceOnUse" x1="42.40" y1="0" x2="704.00" y2="0"><stop offset="0.0000" stop-color="rgb(237,127,53)"/><stop offset="0.0200" stop-color="rgb(238,130,57)"/><stop offset="0.0475" stop-color="rgb(238,134,63)"/><stop offset="0.0950" stop-color="rgb(239,141,74)"/><stop offset="0.1400" stop-color="rgb(240,146,82)"/><stop offset="0.1870" stop-color="rgb(240,150,89)"/><stop offset="0.2325" stop-color="rgb(241,154,94)"/><stop offset="0.2800" stop-color="rgb(241,157,100)"/><stop offset="0.3350" stop-color="rgb(242,161,106)"/><stop offset="0.4000" stop-color="rgb(242,163,109)"/><stop offset="0.5000" stop-color="rgb(243,165,113)"/><stop offset="0.6000" stop-color="rgb(242,163,109)"/><stop offset="0.6650" stop-color="rgb(242,161,106)"/><stop offset="0.7200" stop-color="rgb(241,157,100)"/><stop offset="0.7675" stop-color="rgb(241,154,94)"/><stop offset="0.8130" stop-color="rgb(240,150,89)"/><stop offset="0.8600" stop-color="rgb(240,146,82)"/><stop offset="0.9050" stop-color="rgb(239,141,74)"/><stop offset="0.9525" stop-color="rgb(238,134,63)"/><stop offset="0.9800" stop-color="rgb(238,130,57)"/><stop offset="1.0000" stop-color="rgb(237,127,53)"/></linearGradient><linearGradient id="g1s41" gradientUnits="userSpaceOnUse" x1="42.40" y1="0" x2="704.00" y2="0"><stop offset="0.0000" stop-color="rgb(237,126,50)"/><stop offset="0.0200" stop-color="rgb(237,128,53)"/><stop offset="0.0475" stop-color="rgb(238,131,59)"/><stop offset="0.0950" stop-color="rgb(239,137,68)"/><stop offset="0.1400" stop-color="rgb(239,142,77)"/><stop offset="0.1870" stop-color="rgb(240,147,84)"/><stop offset="0.2325" stop-color="rgb(241,151,89)"/><stop offset="0.2800" stop-color="rgb(241,154,95)"/><stop offset="0.3350" stop-color="rgb(242,158,101)"/><stop offset="0.4000" stop-color="rgb(242,160,105)"/><stop offset="0.5000" stop-color="rgb(242,163,109)"/><stop offset="0.6000" stop-color="rgb(242,160,105)"/><stop offset="0.6650" stop-color="rgb(242,158,101)"/><stop offset="0.7200" stop-color="rgb(241,154,95)"/><stop offset="0.7675" stop-color="rgb(241,151,89)"/><stop offset="0.8130" stop-color="rgb(240,147,84)"/><stop offset="0.8600" stop-color="rgb(239,142,77)"/><stop offset="0.9050" stop-color="rgb(239,137,68)"/><stop offset="0.9525" stop-color="rgb(238,131,59)"/><stop offset="0.9800" stop-color="rgb(237,128,53)"/><stop offset="1.0000" stop-color="rgb(237,126,50)"/></linearGradient><linearGradient id="g1s42" gradientUnits="userSpaceOnUse" x1="42.40" y1="0" x2="704.00" y2="0"><stop offset="0.0000" stop-color="rgb(237,125,49)"/><stop offset="0.0200" stop-color="rgb(237,127,52)"/><stop offset="0.0475" stop-color="rgb(238,130,57)"/><stop offset="0.0950" stop-color="rgb(239,136,67)"/><stop offset="0.1400" stop-color="rgb(239,141,75)"/><stop offset="0.1870" stop-color="rgb(240,146,82)"/><stop offset="0.2325" stop-color="rgb(240,149,88)"/><stop offset="0.2800" stop-color="rgb(241,153,93)"/><stop offset="0.3350" stop-color="rgb(241,157,99)"/><stop offset="0.4000" stop-color="rgb(242,159,104)"/><stop offset="0.5000" stop-color="rgb(242,162,108)"/><stop offset="0.6000" stop-color="rgb(242,159,104)"/><stop offset="0.6650" stop-color="rgb(241,157,99)"/><stop offset="0.7200" stop-color="rgb(241,153,93)"/><stop offset="0.7675" stop-color="rgb(240,149,88)"/><stop offset="0.8130" stop-color="rgb(240,146,82)"/><stop offset="0.8600" stop-color="rgb(239,141,75)"/><stop offset="0.9050" stop-color="rgb(239,136,67)"/><stop offset="0.9525" stop-color="rgb(238,130,57)"/><stop offset="0.9800" stop-color="rgb(237,127,52)"/><stop offset="1.0000" stop-color="rgb(237,125,49)"/></linearGradient><linearGradient id="g1s43" gradientUnits="userSpaceOnUse" x1="42.40" y1="0" x2="704.00" y2="0"><stop offset="0.0000" stop-color="rgb(237,125,49)"/><stop offset="0.0200" stop-color="rgb(237,127,52)"/><stop offset="0.0475" stop-color="rgb(238,130,57)"/><stop offset="0.0950" stop-color="rgb(239,136,67)"/><stop offset="0.1400" stop-color="rgb(239,141,75)"/><stop offset="0.1870" stop-color="rgb(240,146,82)"/><stop offset="0.2325" stop-color="rgb(240,149,88)"/><stop offset="0.2800" stop-color="rgb(241,153,93)"/><stop offset="0.3350" stop-color="rgb(241,157,99)"/><stop offset="0.4000" stop-color="rgb(242,159,104)"/><stop offset="0.5000" stop-color="rgb(242,162,108)"/><stop offset="0.6000" stop-color="rgb(242,159,104)"/><stop offset="0.6650" stop-color="rgb(241,157,99)"/><stop offset="0.7200" stop-color="rgb(241,153,93)"/><stop offset="0.7675" stop-color="rgb(240,149,88)"/><stop offset="0.8130" stop-color="rgb(240,146,82)"/><stop offset="0.8600" stop-color="rgb(239,141,75)"/><stop offset="0.9050" stop-color="rgb(239,136,67)"/><stop offset="0.9525" stop-color="rgb(238,130,57)"/><stop offset="0.9800" stop-color="rgb(237,127,52)"/><stop offset="1.0000" stop-color="rgb(237,125,49)"/></linearGradient><clipPath id="g1clip"><rect x="42.4" y="225.6" width="661.6" height="456.4"/></clipPath><filter id="g1blur" filterUnits="userSpaceOnUse" x="22.4" y="202.8" width="701.6" height="502.0"><feGaussianBlur stdDeviation="0 6.8"/></filter></defs><g clip-path="url(#g1clip)"><g filter="url(#g1blur)"><rect x="22.4" y="202.48" width="701.6" height="12.01" fill="url(#g1s0)"/><rect x="22.4" y="213.89" width="701.6" height="12.01" fill="url(#g1s1)"/><rect x="22.4" y="225.30" width="701.6" height="12.01" fill="url(#g1s2)"/><rect x="22.4" y="236.71" width="701.6" height="12.01" fill="url(#g1s3)"/><rect x="22.4" y="248.12" width="701.6" height="12.01" fill="url(#g1s4)"/><rect x="22.4" y="259.53" width="701.6" height="12.01" fill="url(#g1s5)"/><rect x="22.4" y="270.94" width="701.6" height="12.01" fill="url(#g1s6)"/><rect x="22.4" y="282.35" width="701.6" height="12.01" fill="url(#g1s7)"/><rect x="22.4" y="293.76" width="701.6" height="12.01" fill="url(#g1s8)"/><rect x="22.4" y="305.17" width="701.6" height="12.01" fill="url(#g1s9)"/><rect x="22.4" y="316.58" width="701.6" height="12.01" fill="url(#g1s10)"/><rect x="22.4" y="327.99" width="701.6" height="12.01" fill="url(#g1s11)"/><rect x="22.4" y="339.40" width="701.6" height="12.01" fill="url(#g1s12)"/><rect x="22.4" y="350.81" width="701.6" height="12.01" fill="url(#g1s13)"/><rect x="22.4" y="362.22" width="701.6" height="12.01" fill="url(#g1s14)"/><rect x="22.4" y="373.63" width="701.6" height="12.01" fill="url(#g1s15)"/><rect x="22.4" y="385.04" width="701.6" height="12.01" fill="url(#g1s16)"/><rect x="22.4" y="396.45" width="701.6" height="12.01" fill="url(#g1s17)"/><rect x="22.4" y="407.86" width="701.6" height="12.01" fill="url(#g1s18)"/><rect x="22.4" y="419.27" width="701.6" height="12.01" fill="url(#g1s19)"/><rect x="22.4" y="430.68" width="701.6" height="12.01" fill="url(#g1s20)"/><rect x="22.4" y="442.09" width="701.6" height="12.01" fill="url(#g1s21)"/><rect x="22.4" y="453.50" width="701.6" height="12.01" fill="url(#g1s22)"/><rect x="22.4" y="464.91" width="701.6" height="12.01" fill="url(#g1s23)"/><rect x="22.4" y="476.32" width="701.6" height="12.01" fill="url(#g1s24)"/><rect x="22.4" y="487.73" width="701.6" height="12.01" fill="url(#g1s25)"/><rect x="22.4" y="499.14" width="701.6" height="12.01" fill="url(#g1s26)"/><rect x="22.4" y="510.55" width="701.6" height="12.01" fill="url(#g1s27)"/><rect x="22.4" y="521.96" width="701.6" height="12.01" fill="url(#g1s28)"/><rect x="22.4" y="533.37" width="701.6" height="12.01" fill="url(#g1s29)"/><rect x="22.4" y="544.78" width="701.6" height="12.01" fill="url(#g1s30)"/><rect x="22.4" y="556.19" width="701.6" height="12.01" fill="url(#g1s31)"/><rect x="22.4" y="567.60" width="701.6" height="12.01" fill="url(#g1s32)"/><rect x="22.4" y="579.01" width="701.6" height="12.01" fill="url(#g1s33)"/><rect x="22.4" y="590.42" width="701.6" height="12.01" fill="url(#g1s34)"/><rect x="22.4" y="601.83" width="701.6" height="12.01" fill="url(#g1s35)"/><rect x="22.4" y="613.24" width="701.6" height="12.01" fill="url(#g1s36)"/><rect x="22.4" y="624.65" width="701.6" height="12.01" fill="url(#g1s37)"/><rect x="22.4" y="636.06" width="701.6" height="12.01" fill="url(#g1s38)"/><rect x="22.4" y="647.47" width="701.6" height="12.01" fill="url(#g1s39)"/><rect x="22.4" y="658.88" width="701.6" height="12.01" fill="url(#g1s40)"/><rect x="22.4" y="670.29" width="701.6" height="12.01" fill="url(#g1s41)"/><rect x="22.4" y="681.70" width="701.6" height="12.01" fill="url(#g1s42)"/><rect x="22.4" y="693.11" width="701.6" height="12.01" fill="url(#g1s43)"/></g></g><rect x="42.9" y="226.1" width="660.6" height="455.4" fill="none" stroke="#c3cad2" stroke-width="1"/>
<text x="195.30" y="256.20" font-size="20.6" font-weight="700" fill="#3f3f3f" textLength="76.70" lengthAdjust="spacingAndGlyphs" stroke="#3f3f3f" stroke-width="0.45">Backtest</text>
<text x="279.40" y="256.20" font-size="20.6" font-weight="700" fill="#3f3f3f" textLength="75.50" lengthAdjust="spacingAndGlyphs" stroke="#3f3f3f" stroke-width="0.45">Annnual</text>
<text x="364.00" y="256.20" font-size="20.6" font-weight="700" fill="#3f3f3f" textLength="70.50" lengthAdjust="spacingAndGlyphs" stroke="#3f3f3f" stroke-width="0.45">Returns</text>
<text x="443.00" y="256.20" font-size="20.6" font-weight="700" fill="#3f3f3f" textLength="5.70" lengthAdjust="spacingAndGlyphs" stroke="#3f3f3f" stroke-width="0.45">-</text>
<text x="453.50" y="256.20" font-size="20.6" font-weight="700" fill="#3f3f3f" textLength="97.30" lengthAdjust="spacingAndGlyphs" stroke="#3f3f3f" stroke-width="0.45">2014-2024</text>
<path d="M104 278.05 H690.4" stroke="rgb(210,210,210)" stroke-opacity="0.47" stroke-width="1.15"/>
<text x="50.00" y="281.45" font-size="10.3" fill="#111" textLength="43.30" lengthAdjust="spacingAndGlyphs" stroke="#111" stroke-width="0.15">$450,000</text>
<path d="M104 315.20 H690.4" stroke="rgb(200,200,200)" stroke-opacity="0.47" stroke-width="1.15"/>
<text x="50.00" y="318.60" font-size="10.3" fill="#111" textLength="43.30" lengthAdjust="spacingAndGlyphs" stroke="#111" stroke-width="0.15">$400,000</text>
<path d="M104 352.35 H690.4" stroke="rgb(190,190,190)" stroke-opacity="0.47" stroke-width="1.15"/>
<text x="50.00" y="355.75" font-size="10.3" fill="#111" textLength="43.30" lengthAdjust="spacingAndGlyphs" stroke="#111" stroke-width="0.15">$350,000</text>
<path d="M104 389.50 H690.4" stroke="rgb(178,178,178)" stroke-opacity="0.47" stroke-width="1.15"/>
<text x="50.00" y="392.90" font-size="10.3" fill="#111" textLength="43.30" lengthAdjust="spacingAndGlyphs" stroke="#111" stroke-width="0.15">$300,000</text>
<path d="M104 426.65 H690.4" stroke="rgb(165,165,165)" stroke-opacity="0.47" stroke-width="1.15"/>
<text x="50.00" y="430.05" font-size="10.3" fill="#111" textLength="43.30" lengthAdjust="spacingAndGlyphs" stroke="#111" stroke-width="0.15">$250,000</text>
<path d="M104 463.80 H690.4" stroke="rgb(150,150,150)" stroke-opacity="0.47" stroke-width="1.15"/>
<text x="50.00" y="467.20" font-size="10.3" fill="#111" textLength="43.30" lengthAdjust="spacingAndGlyphs" stroke="#111" stroke-width="0.15">$200,000</text>
<path d="M104 500.95 H690.4" stroke="rgb(128,128,128)" stroke-opacity="0.47" stroke-width="1.15"/>
<text x="50.00" y="504.35" font-size="10.3" fill="#111" textLength="43.30" lengthAdjust="spacingAndGlyphs" stroke="#111" stroke-width="0.15">$150,000</text>
<path d="M104 538.10 H690.4" stroke="rgb(103,103,103)" stroke-opacity="0.47" stroke-width="1.15"/>
<text x="50.00" y="541.50" font-size="10.3" fill="#111" textLength="43.30" lengthAdjust="spacingAndGlyphs" stroke="#111" stroke-width="0.15">$100,000</text>
<path d="M104 575.25 H690.4" stroke="rgb(76,76,76)" stroke-opacity="0.47" stroke-width="1.15"/>
<text x="55.50" y="578.65" font-size="10.3" fill="#111" textLength="37.80" lengthAdjust="spacingAndGlyphs" stroke="#111" stroke-width="0.15">$50,000</text>
<text x="81.10" y="615.80" font-size="10.3" fill="#111" textLength="12.20" lengthAdjust="spacingAndGlyphs" stroke="#111" stroke-width="0.15">$0</text>
<path d="M104 649.55 H690.4" stroke="rgb(30,30,30)" stroke-opacity="0.47" stroke-width="1.15"/>
<text x="51.80" y="652.95" font-size="10.3" fill="#111" textLength="41.50" lengthAdjust="spacingAndGlyphs" stroke="#111" stroke-width="0.15">-$50,000</text>
<rect x="116.8" y="603.0" width="33.4" height="9.4" fill="#0db050" stroke="#fbe3d2" stroke-opacity="0.9" stroke-width="0.8"/>
<text x="116.50" y="594.30" font-size="10.2" font-weight="700" fill="#000" textLength="34.00" lengthAdjust="spacingAndGlyphs">13.25%</text>
<text x="122.60" y="671.50" font-size="10.3" font-weight="700" fill="#111" textLength="21.80" lengthAdjust="spacingAndGlyphs">2014</text>
<rect x="175.4" y="612.4" width="33.4" height="7.6" fill="#ff0000" stroke="#fbe3d2" stroke-opacity="0.9" stroke-width="0.8"/>
<text x="175.10" y="636.80" font-size="10.2" font-weight="700" fill="#000" textLength="34.00" lengthAdjust="spacingAndGlyphs">-9.29%</text>
<text x="181.20" y="671.50" font-size="10.3" font-weight="700" fill="#111" textLength="21.80" lengthAdjust="spacingAndGlyphs">2015</text>
<rect x="234.0" y="610.8" width="33.4" height="1.6" fill="#0db050" stroke="#fbe3d2" stroke-opacity="0.9" stroke-width="0.8"/>
<text x="236.40" y="602.10" font-size="10.2" font-weight="700" fill="#000" textLength="28.60" lengthAdjust="spacingAndGlyphs">2.97%</text>
<text x="239.80" y="671.50" font-size="10.3" font-weight="700" fill="#111" textLength="21.80" lengthAdjust="spacingAndGlyphs">2016</text>
<rect x="292.6" y="586.6" width="33.4" height="25.8" fill="#0db050" stroke="#fbe3d2" stroke-opacity="0.9" stroke-width="0.8"/>
<text x="292.30" y="577.90" font-size="10.2" font-weight="700" fill="#000" textLength="34.00" lengthAdjust="spacingAndGlyphs">32.86%</text>
<text x="298.40" y="671.50" font-size="10.3" font-weight="700" fill="#111" textLength="21.80" lengthAdjust="spacingAndGlyphs">2017</text>
<rect x="351.2" y="571.6" width="33.4" height="40.8" fill="#0db050" stroke="#fbe3d2" stroke-opacity="0.9" stroke-width="0.8"/>
<text x="350.90" y="562.90" font-size="10.2" font-weight="700" fill="#000" textLength="34.00" lengthAdjust="spacingAndGlyphs">36.01%</text>
<text x="357.00" y="671.50" font-size="10.3" font-weight="700" fill="#111" textLength="21.80" lengthAdjust="spacingAndGlyphs">2018</text>
<rect x="409.8" y="612.4" width="33.4" height="12.6" fill="#ff0000" stroke="#fbe3d2" stroke-opacity="0.9" stroke-width="0.8"/>
<text x="409.50" y="641.80" font-size="10.2" font-weight="700" fill="#000" textLength="34.00" lengthAdjust="spacingAndGlyphs">-9.04%</text>
<text x="415.60" y="671.50" font-size="10.3" font-weight="700" fill="#111" textLength="21.80" lengthAdjust="spacingAndGlyphs">2019</text>
<rect x="468.4" y="596.8" width="33.4" height="15.6" fill="#0db050" stroke="#fbe3d2" stroke-opacity="0.9" stroke-width="0.8"/>
<text x="468.10" y="588.10" font-size="10.2" font-weight="700" fill="#000" textLength="34.00" lengthAdjust="spacingAndGlyphs">11.62%</text>
<text x="474.20" y="671.50" font-size="10.3" font-weight="700" fill="#111" textLength="21.80" lengthAdjust="spacingAndGlyphs">2020</text>
<rect x="527.0" y="324.0" width="33.4" height="288.4" fill="#0db050" stroke="#fbe3d2" stroke-opacity="0.9" stroke-width="0.8"/>
<text x="524.20" y="315.30" font-size="10.2" font-weight="700" fill="#000" textLength="39.00" lengthAdjust="spacingAndGlyphs">118.72%</text>
<text x="532.80" y="671.50" font-size="10.3" font-weight="700" fill="#111" textLength="21.80" lengthAdjust="spacingAndGlyphs">2021</text>
<rect x="585.6" y="420.8" width="33.4" height="191.6" fill="#0db050" stroke="#fbe3d2" stroke-opacity="0.9" stroke-width="0.8"/>
<text x="585.30" y="412.10" font-size="10.2" font-weight="700" fill="#000" textLength="34.00" lengthAdjust="spacingAndGlyphs">42.80%</text>
<text x="591.40" y="671.50" font-size="10.3" font-weight="700" fill="#111" textLength="21.80" lengthAdjust="spacingAndGlyphs">2022</text>
<rect x="644.2" y="570.0" width="33.4" height="42.4" fill="#0db050" stroke="#fbe3d2" stroke-opacity="0.9" stroke-width="0.8"/>
<text x="646.60" y="561.30" font-size="10.2" font-weight="700" fill="#000" textLength="28.60" lengthAdjust="spacingAndGlyphs">7.12%</text>
<text x="650.00" y="671.50" font-size="10.3" font-weight="700" fill="#111" textLength="21.80" lengthAdjust="spacingAndGlyphs">2023</text>
<path d="M104 612.4 H690.6" stroke="#333b44" stroke-width="1.6"/></svg>
<svg id="chart2" width="1445" height="903" viewBox="0 0 1445 903" style="left:0;top:0;"><defs><linearGradient id="g2s0" gradientUnits="userSpaceOnUse" x1="748.20" y1="0" x2="1397.70" y2="0"><stop offset="0.0000" stop-color="rgb(238,129,55)"/><stop offset="0.0200" stop-color="rgb(240,148,86)"/><stop offset="0.0475" stop-color="rgb(243,169,118)"/><stop offset="0.0950" stop-color="rgb(246,192,155)"/><stop offset="0.1400" stop-color="rgb(248,206,178)"/><stop offset="0.1870" stop-color="rgb(250,217,195)"/><stop offset="0.2325" stop-color="rgb(251,226,210)"/><stop offset="0.2800" stop-color="rgb(252,234,222)"/><stop offset="0.3350" stop-color="rgb(253,242,234)"/><stop offset="0.4000" stop-color="rgb(254,247,243)"/><stop offset="0.5000" stop-color="rgb(254,251,249)"/><stop offset="0.6000" stop-color="rgb(254,247,243)"/><stop offset="0.6650" stop-color="rgb(253,242,234)"/><stop offset="0.7200" stop-color="rgb(252,234,222)"/><stop offset="0.7675" stop-color="rgb(251,226,210)"/><stop offset="0.8130" stop-color="rgb(250,217,195)"/><stop offset="0.8600" stop-color="rgb(248,206,178)"/><stop offset="0.9050" stop-color="rgb(246,192,155)"/><stop offset="0.9525" stop-color="rgb(243,169,118)"/><stop offset="0.9800" stop-color="rgb(240,148,86)"/><stop offset="1.0000" stop-color="rgb(238,129,55)"/></linearGradient><linearGradient id="g2s1" gradientUnits="userSpaceOnUse" x1="748.20" y1="0" x2="1397.70" y2="0"><stop offset="0.0000" stop-color="rgb(238,129,55)"/><stop offset="0.0200" stop-color="rgb(240,148,86)"/><stop offset="0.0475" stop-color="rgb(243,169,118)"/><stop offset="0.0950" stop-color="rgb(246,192,155)"/><stop offset="0.1400" stop-color="rgb(248,206,178)"/><stop offset="0.1870" stop-color="rgb(250,217,195)"/><stop offset="0.2325" stop-color="rgb(251,226,210)"/><stop offset="0.2800" stop-color="rgb(252,234,222)"/><stop offset="0.3350" stop-color="rgb(253,242,234)"/><stop offset="0.4000" stop-color="rgb(254,247,243)"/><stop offset="0.5000" stop-color="rgb(254,251,249)"/><stop offset="0.6000" stop-color="rgb(254,247,243)"/><stop offset="0.6650" stop-color="rgb(253,242,234)"/><stop offset="0.7200" stop-color="rgb(252,234,222)"/><stop offset="0.7675" stop-color="rgb(251,226,210)"/><stop offset="0.8130" stop-color="rgb(250,217,195)"/><stop offset="0.8600" stop-color="rgb(248,206,178)"/><stop offset="0.9050" stop-color="rgb(246,192,155)"/><stop offset="0.9525" stop-color="rgb(243,169,118)"/><stop offset="0.9800" stop-color="rgb(240,148,86)"/><stop offset="1.0000" stop-color="rgb(238,129,55)"/></linearGradient><linearGradient id="g2s2" gradientUnits="userSpaceOnUse" x1="748.20" y1="0" x2="1397.70" y2="0"><stop offset="0.0000" stop-color="rgb(238,130,57)"/><stop offset="0.0200" stop-color="rgb(240,148,86)"/><stop offset="0.0475" stop-color="rgb(243,169,118)"/><stop offset="0.0950" stop-color="rgb(246,192,155)"/><stop offset="0.1400" stop-color="rgb(248,206,178)"/><stop offset="0.1870" stop-color="rgb(250,217,195)"/><stop offset="0.2325" stop-color="rgb(251,226,210)"/><stop offset="0.2800" stop-color="rgb(252,234,222)"/><stop offset="0.3350" stop-color="rgb(253,242,234)"/><stop offset="0.4000" stop-color="rgb(254,247,243)"/><stop offset="0.5000" stop-color="rgb(254,251,249)"/><stop offset="0.6000" stop-color="rgb(254,247,243)"/><stop offset="0.6650" stop-color="rgb(253,242,234)"/><stop offset="0.7200" stop-color="rgb(252,234,222)"/><stop offset="0.7675" stop-color="rgb(251,226,210)"/><stop offset="0.8130" stop-color="rgb(250,217,195)"/><stop offset="0.8600" stop-color="rgb(248,206,178)"/><stop offset="0.9050" stop-color="rgb(246,192,155)"/><stop offset="0.9525" stop-color="rgb(243,169,118)"/><stop offset="0.9800" stop-color="rgb(240,148,86)"/><stop offset="1.0000" stop-color="rgb(238,130,57)"/></linearGradient><linearGradient id="g2s3" gradientUnits="userSpaceOnUse" x1="748.20" y1="0" x2="1397.70" y2="0"><stop offset="0.0000" stop-color="rgb(238,134,64)"/><stop offset="0.0200" stop-color="rgb(241,151,91)"/><stop offset="0.0475" stop-color="rgb(243,170,120)"/><stop offset="0.0950" stop-color="rgb(246,192,155)"/><stop offset="0.1400" stop-color="rgb(248,206,177)"/><stop offset="0.1870" stop-color="rgb(250,217,194)"/><stop offset="0.2325" stop-color="rgb(251,225,208)"/><stop offset="0.2800" stop-color="rgb(252,233,220)"/><stop offset="0.3350" stop-color="rgb(253,240,232)"/><stop offset="0.4000" stop-color="rgb(254,245,240)"/><stop offset="0.5000" stop-color="rgb(254,249,246)"/><stop offset="0.6000" stop-color="rgb(254,245,240)"/><stop offset="0.6650" stop-color="rgb(253,240,232)"/><stop offset="0.7200" stop-color="rgb(252,233,220)"/><stop offset="0.7675" stop-color="rgb(251,225,208)"/><stop offset="0.8130" stop-color="rgb(250,217,194)"/><stop offset="0.8600" stop-color="rgb(248,206,177)"/><stop offset="0.9050" stop-color="rgb(246,192,155)"/><stop offset="0.9525" stop-color="rgb(243,170,120)"/><stop offset="0.9800" stop-color="rgb(241,151,91)"/><stop offset="1.0000" stop-color="rgb(238,134,64)"/></linearGradient><linearGradient id="g2s4" gradientUnits="userSpaceOnUse" x1="748.20" y1="0" x2="1397.70" y2="0"><stop offset="0.0000" stop-color="rgb(239,139,71)"/><stop offset="0.0200" stop-color="rgb(241,154,96)"/><stop offset="0.0475" stop-color="rgb(243,171,123)"/><stop offset="0.0950" stop-color="rgb(246,192,155)"/><stop offset="0.1400" stop-color="rgb(248,206,177)"/><stop offset="0.1870" stop-color="rgb(250,216,193)"/><stop offset="0.2325" stop-color="rgb(251,224,206)"/><stop offset="0.2800" stop-color="rgb(252,231,217)"/><stop offset="0.3350" stop-color="rgb(253,238,229)"/><stop offset="0.4000" stop-color="rgb(253,243,236)"/><stop offset="0.5000" stop-color="rgb(254,247,242)"/><stop offset="0.6000" stop-color="rgb(253,243,236)"/><stop offset="0.6650" stop-color="rgb(253,238,229)"/><stop offset="0.7200" stop-color="rgb(252,231,217)"/><stop offset="0.7675" stop-color="rgb(251,224,206)"/><stop offset="0.8130" stop-color="rgb(250,216,193)"/><stop offset="0.8600" stop-color="rgb(248,206,177)"/><stop offset="0.9050" stop-color="rgb(246,192,155)"/><stop offset="0.9525" stop-color="rgb(243,171,123)"/><stop offset="0.9800" stop-color="rgb(241,154,96)"/><stop offset="1.0000" stop-color="rgb(239,139,71)"/></linearGradient><linearGradient id="g2s5" gradientUnits="userSpaceOnUse" x1="748.20" y1="0" x2="1397.70" y2="0"><stop offset="0.0000" stop-color="rgb(240,143,78)"/><stop offset="0.0200" stop-color="rgb(242,158,101)"/><stop offset="0.0475" stop-color="rgb(244,173,125)"/><stop offset="0.0950" stop-color="rgb(246,192,156)"/><stop offset="0.1400" stop-color="rgb(248,205,176)"/><stop offset="0.1870" stop-color="rgb(250,215,192)"/><stop offset="0.2325" stop-color="rgb(251,223,205)"/><stop offset="0.2800" stop-color="rgb(251,230,215)"/><stop offset="0.3350" stop-color="rgb(252,237,226)"/><stop offset="0.4000" stop-color="rgb(253,241,233)"/><stop offset="0.5000" stop-color="rgb(254,245,238)"/><stop offset="0.6000" stop-color="rgb(253,241,233)"/><stop offset="0.6650" stop-color="rgb(252,237,226)"/><stop offset="0.7200" stop-color="rgb(251,230,215)"/><stop offset="0.7675" stop-color="rgb(251,223,205)"/><stop offset="0.8130" stop-color="rgb(250,215,192)"/><stop offset="0.8600" stop-color="rgb(248,205,176)"/><stop offset="0.9050" stop-color="rgb(246,192,156)"/><stop offset="0.9525" stop-color="rgb(244,173,125)"/><stop offset="0.9800" stop-color="rgb(242,158,101)"/><stop offset="1.0000" stop-color="rgb(240,143,78)"/></linearGradient><linearGradient id="g2s6" gradientUnits="userSpaceOnUse" x1="748.20" y1="0" x2="1397.70" y2="0"><stop offset="0.0000" stop-color="rgb(240,148,85)"/><stop offset="0.0200" stop-color="rgb(242,161,106)"/><stop offset="0.0475" stop-color="rgb(244,175,128)"/><stop offset="0.0950" stop-color="rgb(246,192,156)"/><stop offset="0.1400" stop-color="rgb(248,205,175)"/><stop offset="0.1870" stop-color="rgb(249,215,191)"/><stop offset="0.2325" stop-color="rgb(250,222,203)"/><stop offset="0.2800" stop-color="rgb(251,228,212)"/><stop offset="0.3350" stop-color="rgb(252,235,223)"/><stop offset="0.4000" stop-color="rgb(253,239,229)"/><stop offset="0.5000" stop-color="rgb(253,242,235)"/><stop offset="0.6000" stop-color="rgb(253,239,229)"/><stop offset="0.6650" stop-color="rgb(252,235,223)"/><stop offset="0.7200" stop-color="rgb(251,228,212)"/><stop offset="0.7675" stop-color="rgb(250,222,203)"/><stop offset="0.8130" stop-color="rgb(249,215,191)"/><stop offset="0.8600" stop-color="rgb(248,205,175)"/><stop offset="0.9050" stop-color="rgb(246,192,156)"/><stop offset="0.9525" stop-color="rgb(244,175,128)"/><stop offset="0.9800" stop-color="rgb(242,161,106)"/><stop offset="1.0000" stop-color="rgb(240,148,85)"/></linearGradient><linearGradient id="g2s7" gradientUnits="userSpaceOnUse" x1="748.20" y1="0" x2="1397.70" y2="0"><stop offset="0.0000" stop-color="rgb(241,152,92)"/><stop offset="0.0200" stop-color="rgb(242,164,111)"/><stop offset="0.0475" stop-color="rgb(244,176,130)"/><stop offset="0.0950" stop-color="rgb(246,193,156)"/><stop offset="0.1400" stop-color="rgb(248,204,175)"/><stop offset="0.1870" stop-color="rgb(249,214,190)"/><stop offset="0.2325" stop-color="rgb(250,221,201)"/><stop offset="0.2800" stop-color="rgb(251,227,210)"/><stop offset="0.3350" stop-color="rgb(252,233,220)"/><stop offset="0.4000" stop-color="rgb(252,237,226)"/><stop offset="0.5000" stop-color="rgb(253,240,231)"/><stop offset="0.6000" stop-color="rgb(252,237,226)"/><stop offset="0.6650" stop-color="rgb(252,233,220)"/><stop offset="0.7200" stop-color="rgb(251,227,210)"/><stop offset="0.7675" stop-color="rgb(250,221,201)"/><stop offset="0.8130" stop-color="rgb(249,214,190)"/><stop offset="0.8600" stop-color="rgb(248,204,175)"/><stop offset="0.9050" stop-color="rgb(246,193,156)"/><stop offset="0.9525" stop-color="rgb(244,176,130)"/><stop offset="0.9800" stop-color="rgb(242,164,111)"/><stop offset="1.0000" stop-color="rgb(241,152,92)"/></linearGradient><linearGradient id="g2s8" gradientUnits="userSpaceOnUse" x1="748.20" y1="0" x2="1397.70" y2="0"><stop offset="0.0000" stop-color="rgb(241,154,95)"/><stop offset="0.0200" stop-color="rgb(242,165,112)"/><stop offset="0.0475" stop-color="rgb(244,176,129)"/><stop offset="0.0950" stop-color="rgb(246,192,155)"/><stop offset="0.1400" stop-color="rgb(248,203,173)"/><stop offset="0.1870" stop-color="rgb(249,213,188)"/><stop offset="0.2325" stop-color="rgb(250,220,199)"/><stop offset="0.2800" stop-color="rgb(251,225,208)"/><stop offset="0.3350" stop-color="rgb(252,231,218)"/><stop offset="0.4000" stop-color="rgb(252,235,224)"/><stop offset="0.5000" stop-color="rgb(253,238,228)"/><stop offset="0.6000" stop-color="rgb(252,235,224)"/><stop offset="0.6650" stop-color="rgb(252,231,218)"/><stop offset="0.7200" stop-color="rgb(251,225,208)"/><stop offset="0.7675" stop-color="rgb(250,220,199)"/><stop offset="0.8130" stop-color="rgb(249,213,188)"/><stop offset="0.8600" stop-color="rgb(248,203,173)"/><stop offset="0.9050" stop-color="rgb(246,192,155)"/><stop offset="0.9525" stop-color="rgb(244,176,129)"/><stop offset="0.9800" stop-color="rgb(242,165,112)"/><stop offset="1.0000" stop-color="rgb(241,154,95)"/></linearGradient><linearGradient id="g2s9" gradientUnits="userSpaceOnUse" x1="748.20" y1="0" x2="1397.70" y2="0"><stop offset="0.0000" stop-color="rgb(241,156,98)"/><stop offset="0.0200" stop-color="rgb(243,165,113)"/><stop offset="0.0475" stop-color="rgb(244,175,129)"/><stop offset="0.0950" stop-color="rgb(246,191,154)"/><stop offset="0.1400" stop-color="rgb(248,202,172)"/><stop offset="0.1870" stop-color="rgb(249,212,186)"/><stop offset="0.2325" stop-color="rgb(250,218,197)"/><stop offset="0.2800" stop-color="rgb(251,224,205)"/><stop offset="0.3350" stop-color="rgb(252,230,215)"/><stop offset="0.4000" stop-color="rgb(252,233,221)"/><stop offset="0.5000" stop-color="rgb(252,236,225)"/><stop offset="0.6000" stop-color="rgb(252,233,221)"/><stop offset="0.6650" stop-color="rgb(252,230,215)"/><stop offset="0.7200" stop-color="rgb(251,224,205)"/><stop offset="0.7675" stop-color="rgb(250,218,197)"/><stop offset="0.8130" stop-color="rgb(249,212,186)"/><stop offset="0.8600" stop-color="rgb(248,202,172)"/><stop offset="0.9050" stop-color="rgb(246,191,154)"/><stop offset="0.9525" stop-color="rgb(244,175,129)"/><stop offset="0.9800" stop-color="rgb(243,165,113)"/><stop offset="1.0000" stop-color="rgb(241,156,98)"/></linearGradient><linearGradient id="g2s10" gradientUnits="userSpaceOnUse" x1="748.20" y1="0" x2="1397.70" y2="0"><stop offset="0.0000" stop-color="rgb(241,157,100)"/><stop offset="0.0200" stop-color="rgb(243,166,114)"/><stop offset="0.0475" stop-color="rgb(244,175,129)"/><stop offset="0.0950" stop-color="rgb(246,191,153)"/><stop offset="0.1400" stop-color="rgb(248,202,170)"/><stop offset="0.1870" stop-color="rgb(249,211,185)"/><stop offset="0.2325" stop-color="rgb(250,217,195)"/><stop offset="0.2800" stop-color="rgb(250,222,203)"/><stop offset="0.3350" stop-color="rgb(251,229,213)"/><stop offset="0.4000" stop-color="rgb(252,232,218)"/><stop offset="0.5000" stop-color="rgb(252,234,222)"/><stop offset="0.6000" stop-color="rgb(252,232,218)"/><stop offset="0.6650" stop-color="rgb(251,229,213)"/><stop offset="0.7200" stop-color="rgb(250,222,203)"/><stop offset="0.7675" stop-color="rgb(250,217,195)"/><stop offset="0.8130" stop-color="rgb(249,211,185)"/><stop offset="0.8600" stop-color="rgb(248,202,170)"/><stop offset="0.9050" stop-color="rgb(246,191,153)"/><stop offset="0.9525" stop-color="rgb(244,175,129)"/><stop offset="0.9800" stop-color="rgb(243,166,114)"/><stop offset="1.0000" stop-color="rgb(241,157,100)"/></linearGradient><linearGradient id="g2s11" gradientUnits="userSpaceOnUse" x1="748.20" y1="0" x2="1397.70" y2="0"><stop offset="0.0000" stop-color="rgb(242,159,103)"/><stop offset="0.0200" stop-color="rgb(243,166,115)"/><stop offset="0.0475" stop-color="rgb(244,175,128)"/><stop offset="0.0950" stop-color="rgb(246,190,152)"/><stop offset="0.1400" stop-color="rgb(247,201,169)"/><stop offset="0.1870" stop-color="rgb(249,209,183)"/><stop offset="0.2325" stop-color="rgb(250,216,193)"/><stop offset="0.2800" stop-color="rgb(250,221,201)"/><stop offset="0.3350" stop-color="rgb(251,227,211)"/><stop offset="0.4000" stop-color="rgb(252,230,216)"/><stop offset="0.5000" stop-color="rgb(252,232,219)"/><stop offset="0.6000" stop-color="rgb(252,230,216)"/><stop offset="0.6650" stop-color="rgb(251,227,211)"/><stop offset="0.7200" stop-color="rgb(250,221,201)"/><stop offset="0.7675" stop-color="rgb(250,216,193)"/><stop offset="0.8130" stop-color="rgb(249,209,183)"/><stop offset="0.8600" stop-color="rgb(247,201,169)"/><stop offset="0.9050" stop-color="rgb(246,190,152)"/><stop offset="0.9525" stop-color="rgb(244,175,128)"/><stop offset="0.9800" stop-color="rgb(243,166,115)"/><stop offset="1.0000" stop-color="rgb(242,159,103)"/></linearGradient><linearGradient id="g2s12" gradientUnits="userSpaceOnUse" x1="748.20" y1="0" x2="1397.70" y2="0"><stop offset="0.0000" stop-color="rgb(242,159,103)"/><stop offset="0.0200" stop-color="rgb(243,166,114)"/><stop offset="0.0475" stop-color="rgb(244,175,127)"/><stop offset="0.0950" stop-color="rgb(246,189,151)"/><stop offset="0.1400" stop-color="rgb(247,199,167)"/><stop offset="0.1870" stop-color="rgb(248,208,180)"/><stop offset="0.2325" stop-color="rgb(249,214,190)"/><stop offset="0.2800" stop-color="rgb(250,219,197)"/><stop offset="0.3350" stop-color="rgb(251,225,207)"/><stop offset="0.4000" stop-color="rgb(251,228,212)"/><stop offset="0.5000" stop-color="rgb(252,230,215)"/><stop offset="0.6000" stop-color="rgb(251,228,212)"/><stop offset="0.6650" stop-color="rgb(251,225,207)"/><stop offset="0.7200" stop-color="rgb(250,219,197)"/><stop offset="0.7675" stop-color="rgb(249,214,190)"/><stop offset="0.8130" stop-color="rgb(248,208,180)"/><stop offset="0.8600" stop-color="rgb(247,199,167)"/><stop offset="0.9050" stop-color="rgb(246,189,151)"/><stop offset="0.9525" stop-color="rgb(244,175,127)"/><stop offset="0.9800" stop-color="rgb(243,166,114)"/><stop offset="1.0000" stop-color="rgb(242,159,103)"/></linearGradient><linearGradient id="g2s13" gradientUnits="userSpaceOnUse" x1="748.20" y1="0" x2="1397.70" y2="0"><stop offset="0.0000" stop-color="rgb(242,159,103)"/><stop offset="0.0200" stop-color="rgb(243,166,114)"/><stop offset="0.0475" stop-color="rgb(244,174,127)"/><stop offset="0.0950" stop-color="rgb(246,188,149)"/><stop offset="0.1400" stop-color="rgb(247,198,164)"/><stop offset="0.1870" stop-color="rgb(248,205,177)"/><stop offset="0.2325" stop-color="rgb(249,211,186)"/><stop offset="0.2800" stop-color="rgb(250,216,194)"/><stop offset="0.3350" stop-color="rgb(250,222,203)"/><stop offset="0.4000" stop-color="rgb(251,225,208)"/><stop offset="0.5000" stop-color="rgb(251,227,211)"/><stop offset="0.6000" stop-color="rgb(251,225,208)"/><stop offset="0.6650" stop-color="rgb(250,222,203)"/><stop offset="0.7200" stop-color="rgb(250,216,194)"/><stop offset="0.7675" stop-color="rgb(249,211,186)"/><stop offset="0.8130" stop-color="rgb(248,205,177)"/><stop offset="0.8600" stop-color="rgb(247,198,164)"/><stop offset="0.9050" stop-color="rgb(246,188,149)"/><stop offset="0.9525" stop-color="rgb(244,174,127)"/><stop offset="0.9800" stop-color="rgb(243,166,114)"/><stop offset="1.0000" stop-color="rgb(242,159,103)"/></linearGradient><linearGradient id="g2s14" gradientUnits="userSpaceOnUse" x1="748.20" y1="0" x2="1397.70" y2="0"><stop offset="0.0000" stop-color="rgb(242,159,102)"/><stop offset="0.0200" stop-color="rgb(243,165,113)"/><stop offset="0.0475" stop-color="rgb(244,174,126)"/><stop offset="0.0950" stop-color="rgb(246,187,146)"/><stop offset="0.1400" stop-color="rgb(247,196,161)"/><stop offset="0.1870" stop-color="rgb(248,203,173)"/><stop offset="0.2325" stop-color="rgb(249,209,182)"/><stop offset="0.2800" stop-color="rgb(249,214,190)"/><stop offset="0.3350" stop-color="rgb(250,220,199)"/><stop offset="0.4000" stop-color="rgb(251,223,204)"/><stop offset="0.5000" stop-color="rgb(251,225,207)"/><stop offset="0.6000" stop-color="rgb(251,223,204)"/><stop offset="0.6650" stop-color="rgb(250,220,199)"/><stop offset="0.7200" stop-color="rgb(249,214,190)"/><stop offset="0.7675" stop-color="rgb(249,209,182)"/><stop offset="0.8130" stop-color="rgb(248,203,173)"/><stop offset="0.8600" stop-color="rgb(247,196,161)"/><stop offset="0.9050" stop-color="rgb(246,187,146)"/><stop offset="0.9525" stop-color="rgb(244,174,126)"/><stop offset="0.9800" stop-color="rgb(243,165,113)"/><stop offset="1.0000" stop-color="rgb(242,159,102)"/></linearGradient><linearGradient id="g2s15" gradientUnits="userSpaceOnUse" x1="748.20" y1="0" x2="1397.70" y2="0"><stop offset="0.0000" stop-color="rgb(242,158,102)"/><stop offset="0.0200" stop-color="rgb(243,165,112)"/><stop offset="0.0475" stop-color="rgb(244,173,125)"/><stop offset="0.0950" stop-color="rgb(245,185,144)"/><stop offset="0.1400" stop-color="rgb(247,194,159)"/><stop offset="0.1870" stop-color="rgb(248,201,170)"/><stop offset="0.2325" stop-color="rgb(248,207,178)"/><stop offset="0.2800" stop-color="rgb(249,211,186)"/><stop offset="0.3350" stop-color="rgb(250,217,195)"/><stop offset="0.4000" stop-color="rgb(250,220,200)"/><stop offset="0.5000" stop-color="rgb(251,223,204)"/><stop offset="0.6000" stop-color="rgb(250,220,200)"/><stop offset="0.6650" stop-color="rgb(250,217,195)"/><stop offset="0.7200" stop-color="rgb(249,211,186)"/><stop offset="0.7675" stop-color="rgb(248,207,178)"/><stop offset="0.8130" stop-color="rgb(248,201,170)"/><stop offset="0.8600" stop-color="rgb(247,194,159)"/><stop offset="0.9050" stop-color="rgb(245,185,144)"/><stop offset="0.9525" stop-color="rgb(244,173,125)"/><stop offset="0.9800" stop-color="rgb(243,165,112)"/><stop offset="1.0000" stop-color="rgb(242,158,102)"/></linearGradient><linearGradient id="g2s16" gradientUnits="userSpaceOnUse" x1="748.20" y1="0" x2="1397.70" y2="0"><stop offset="0.0000" stop-color="rgb(242,158,101)"/><stop offset="0.0200" stop-color="rgb(242,164,112)"/><stop offset="0.0475" stop-color="rgb(244,173,125)"/><stop offset="0.0950" stop-color="rgb(245,184,142)"/><stop offset="0.1400" stop-color="rgb(246,193,156)"/><stop offset="0.1870" stop-color="rgb(247,199,167)"/><stop offset="0.2325" stop-color="rgb(248,204,175)"/><stop offset="0.2800" stop-color="rgb(249,209,182)"/><stop offset="0.3350" stop-color="rgb(249,214,191)"/><stop offset="0.4000" stop-color="rgb(250,218,196)"/><stop offset="0.5000" stop-color="rgb(250,220,200)"/><stop offset="0.6000" stop-color="rgb(250,218,196)"/><stop offset="0.6650" stop-color="rgb(249,214,191)"/><stop offset="0.7200" stop-color="rgb(249,209,182)"/><stop offset="0.7675" stop-color="rgb(248,204,175)"/><stop offset="0.8130" stop-color="rgb(247,199,167)"/><stop offset="0.8600" stop-color="rgb(246,193,156)"/><stop offset="0.9050" stop-color="rgb(245,184,142)"/><stop offset="0.9525" stop-color="rgb(244,173,125)"/><stop offset="0.9800" stop-color="rgb(242,164,112)"/><stop offset="1.0000" stop-color="rgb(242,158,101)"/></linearGradient><linearGradient id="g2s17" gradientUnits="userSpaceOnUse" x1="748.20" y1="0" x2="1397.70" y2="0"><stop offset="0.0000" stop-color="rgb(242,158,101)"/><stop offset="0.0200" stop-color="rgb(242,164,111)"/><stop offset="0.0475" stop-color="rgb(244,172,124)"/><stop offset="0.0950" stop-color="rgb(245,183,140)"/><stop offset="0.1400" stop-color="rgb(246,191,153)"/><stop offset="0.1870" stop-color="rgb(247,197,163)"/><stop offset="0.2325" stop-color="rgb(248,202,171)"/><stop offset="0.2800" stop-color="rgb(248,207,178)"/><stop offset="0.3350" stop-color="rgb(249,212,186)"/><stop offset="0.4000" stop-color="rgb(249,215,192)"/><stop offset="0.5000" stop-color="rgb(250,218,196)"/><stop offset="0.6000" stop-color="rgb(249,215,192)"/><stop offset="0.6650" stop-color="rgb(249,212,186)"/><stop offset="0.7200" stop-color="rgb(248,207,178)"/><stop offset="0.7675" stop-color="rgb(248,202,171)"/><stop offset="0.8130" stop-color="rgb(247,197,163)"/><stop offset="0.8600" stop-color="rgb(246,191,153)"/><stop offset="0.9050" stop-color="rgb(245,183,140)"/><stop offset="0.9525" stop-color="rgb(244,172,124)"/><stop offset="0.9800" stop-color="rgb(242,164,111)"/><stop offset="1.0000" stop-color="rgb(242,158,101)"/></linearGradient><linearGradient id="g2s18" gradientUnits="userSpaceOnUse" x1="748.20" y1="0" x2="1397.70" y2="0"><stop offset="0.0000" stop-color="rgb(241,157,99)"/><stop offset="0.0200" stop-color="rgb(242,163,109)"/><stop offset="0.0475" stop-color="rgb(243,171,122)"/><stop offset="0.0950" stop-color="rgb(245,181,138)"/><stop offset="0.1400" stop-color="rgb(246,189,150)"/><stop offset="0.1870" stop-color="rgb(247,195,160)"/><stop offset="0.2325" stop-color="rgb(247,200,168)"/><stop offset="0.2800" stop-color="rgb(248,205,175)"/><stop offset="0.3350" stop-color="rgb(249,209,183)"/><stop offset="0.4000" stop-color="rgb(249,213,188)"/><stop offset="0.5000" stop-color="rgb(249,215,192)"/><stop offset="0.6000" stop-color="rgb(249,213,188)"/><stop offset="0.6650" stop-color="rgb(249,209,183)"/><stop offset="0.7200" stop-color="rgb(248,205,175)"/><stop offset="0.7675" stop-color="rgb(247,200,168)"/><stop offset="0.8130" stop-color="rgb(247,195,160)"/><stop offset="0.8600" stop-color="rgb(246,189,150)"/><stop offset="0.9050" stop-color="rgb(245,181,138)"/><stop offset="0.9525" stop-color="rgb(243,171,122)"/><stop offset="0.9800" stop-color="rgb(242,163,109)"/><stop offset="1.0000" stop-color="rgb(241,157,99)"/></linearGradient><linearGradient id="g2s19" gradientUnits="userSpaceOnUse" x1="748.20" y1="0" x2="1397.70" y2="0"><stop offset="0.0000" stop-color="rgb(241,156,98)"/><stop offset="0.0200" stop-color="rgb(242,162,108)"/><stop offset="0.0475" stop-color="rgb(243,170,120)"/><stop offset="0.0950" stop-color="rgb(245,180,135)"/><stop offset="0.1400" stop-color="rgb(246,187,148)"/><stop offset="0.1870" stop-color="rgb(246,193,157)"/><stop offset="0.2325" stop-color="rgb(247,198,165)"/><stop offset="0.2800" stop-color="rgb(248,202,172)"/><stop offset="0.3350" stop-color="rgb(248,207,179)"/><stop offset="0.4000" stop-color="rgb(249,210,184)"/><stop offset="0.5000" stop-color="rgb(249,213,188)"/><stop offset="0.6000" stop-color="rgb(249,210,184)"/><stop offset="0.6650" stop-color="rgb(248,207,179)"/><stop offset="0.7200" stop-color="rgb(248,202,172)"/><stop offset="0.7675" stop-color="rgb(247,198,165)"/><stop offset="0.8130" stop-color="rgb(246,193,157)"/><stop offset="0.8600" stop-color="rgb(246,187,148)"/><stop offset="0.9050" stop-color="rgb(245,180,135)"/><stop offset="0.9525" stop-color="rgb(243,170,120)"/><stop offset="0.9800" stop-color="rgb(242,162,108)"/><stop offset="1.0000" stop-color="rgb(241,156,98)"/></linearGradient><linearGradient id="g2s20" gradientUnits="userSpaceOnUse" x1="748.20" y1="0" x2="1397.70" y2="0"><stop offset="0.0000" stop-color="rgb(241,155,96)"/><stop offset="0.0200" stop-color="rgb(242,161,106)"/><stop offset="0.0475" stop-color="rgb(243,169,118)"/><stop offset="0.0950" stop-color="rgb(244,178,133)"/><stop offset="0.1400" stop-color="rgb(245,185,145)"/><stop offset="0.1870" stop-color="rgb(246,191,154)"/><stop offset="0.2325" stop-color="rgb(247,196,162)"/><stop offset="0.2800" stop-color="rgb(247,200,168)"/><stop offset="0.3350" stop-color="rgb(248,205,176)"/><stop offset="0.4000" stop-color="rgb(248,208,180)"/><stop offset="0.5000" stop-color="rgb(249,211,185)"/><stop offset="0.6000" stop-color="rgb(248,208,180)"/><stop offset="0.6650" stop-color="rgb(248,205,176)"/><stop offset="0.7200" stop-color="rgb(247,200,168)"/><stop offset="0.7675" stop-color="rgb(247,196,162)"/><stop offset="0.8130" stop-color="rgb(246,191,154)"/><stop offset="0.8600" stop-color="rgb(245,185,145)"/><stop offset="0.9050" stop-color="rgb(244,178,133)"/><stop offset="0.9525" stop-color="rgb(243,169,118)"/><stop offset="0.9800" stop-color="rgb(242,161,106)"/><stop offset="1.0000" stop-color="rgb(241,155,96)"/></linearGradient><linearGradient id="g2s21" gradientUnits="userSpaceOnUse" x1="748.20" y1="0" x2="1397.70" y2="0"><stop offset="0.0000" stop-color="rgb(241,154,94)"/><stop offset="0.0200" stop-color="rgb(242,160,104)"/><stop offset="0.0475" stop-color="rgb(243,167,116)"/><stop offset="0.0950" stop-color="rgb(244,177,131)"/><stop offset="0.1400" stop-color="rgb(245,184,142)"/><stop offset="0.1870" stop-color="rgb(246,190,151)"/><stop offset="0.2325" stop-color="rgb(247,194,159)"/><stop offset="0.2800" stop-color="rgb(247,198,165)"/><stop offset="0.3350" stop-color="rgb(248,203,172)"/><stop offset="0.4000" stop-color="rgb(248,206,177)"/><stop offset="0.5000" stop-color="rgb(249,208,181)"/><stop offset="0.6000" stop-color="rgb(248,206,177)"/><stop offset="0.6650" stop-color="rgb(248,203,172)"/><stop offset="0.7200" stop-color="rgb(247,198,165)"/><stop offset="0.7675" stop-color="rgb(247,194,159)"/><stop offset="0.8130" stop-color="rgb(246,190,151)"/><stop offset="0.8600" stop-color="rgb(245,184,142)"/><stop offset="0.9050" stop-color="rgb(244,177,131)"/><stop offset="0.9525" stop-color="rgb(243,167,116)"/><stop offset="0.9800" stop-color="rgb(242,160,104)"/><stop offset="1.0000" stop-color="rgb(241,154,94)"/></linearGradient><linearGradient id="g2s22" gradientUnits="userSpaceOnUse" x1="748.20" y1="0" x2="1397.70" y2="0"><stop offset="0.0000" stop-color="rgb(241,153,93)"/><stop offset="0.0200" stop-color="rgb(242,159,102)"/><stop offset="0.0475" stop-color="rgb(243,166,114)"/><stop offset="0.0950" stop-color="rgb(244,175,128)"/><stop offset="0.1400" stop-color="rgb(245,182,139)"/><stop offset="0.1870" stop-color="rgb(246,188,148)"/><stop offset="0.2325" stop-color="rgb(246,192,155)"/><stop offset="0.2800" stop-color="rgb(247,196,162)"/><stop offset="0.3350" stop-color="rgb(247,200,169)"/><stop offset="0.4000" stop-color="rgb(248,203,173)"/><stop offset="0.5000" stop-color="rgb(248,206,177)"/><stop offset="0.6000" stop-color="rgb(248,203,173)"/><stop offset="0.6650" stop-color="rgb(247,200,169)"/><stop offset="0.7200" stop-color="rgb(247,196,162)"/><stop offset="0.7675" stop-color="rgb(246,192,155)"/><stop offset="0.8130" stop-color="rgb(246,188,148)"/><stop offset="0.8600" stop-color="rgb(245,182,139)"/><stop offset="0.9050" stop-color="rgb(244,175,128)"/><stop offset="0.9525" stop-color="rgb(243,166,114)"/><stop offset="0.9800" stop-color="rgb(242,159,102)"/><stop offset="1.0000" stop-color="rgb(241,153,93)"/></linearGradient><linearGradient id="g2s23" gradientUnits="userSpaceOnUse" x1="748.20" y1="0" x2="1397.70" y2="0"><stop offset="0.0000" stop-color="rgb(241,152,91)"/><stop offset="0.0200" stop-color="rgb(242,158,101)"/><stop offset="0.0475" stop-color="rgb(243,165,112)"/><stop offset="0.0950" stop-color="rgb(244,174,126)"/><stop offset="0.1400" stop-color="rgb(245,180,136)"/><stop offset="0.1870" stop-color="rgb(245,186,145)"/><stop offset="0.2325" stop-color="rgb(246,190,152)"/><stop offset="0.2800" stop-color="rgb(247,194,159)"/><stop offset="0.3350" stop-color="rgb(247,198,165)"/><stop offset="0.4000" stop-color="rgb(248,201,169)"/><stop offset="0.5000" stop-color="rgb(248,204,173)"/><stop offset="0.6000" stop-color="rgb(248,201,169)"/><stop offset="0.6650" stop-color="rgb(247,198,165)"/><stop offset="0.7200" stop-color="rgb(247,194,159)"/><stop offset="0.7675" stop-color="rgb(246,190,152)"/><stop offset="0.8130" stop-color="rgb(245,186,145)"/><stop offset="0.8600" stop-color="rgb(245,180,136)"/><stop offset="0.9050" stop-color="rgb(244,174,126)"/><stop offset="0.9525" stop-color="rgb(243,165,112)"/><stop offset="0.9800" stop-color="rgb(242,158,101)"/><stop offset="1.0000" stop-color="rgb(241,152,91)"/></linearGradient><linearGradient id="g2s24" gradientUnits="userSpaceOnUse" x1="748.20" y1="0" x2="1397.70" y2="0"><stop offset="0.0000" stop-color="rgb(241,151,90)"/><stop offset="0.0200" stop-color="rgb(241,157,99)"/><stop offset="0.0475" stop-color="rgb(242,164,110)"/><stop offset="0.0950" stop-color="rgb(243,172,123)"/><stop offset="0.1400" stop-color="rgb(244,178,133)"/><stop offset="0.1870" stop-color="rgb(245,184,142)"/><stop offset="0.2325" stop-color="rgb(246,188,149)"/><stop offset="0.2800" stop-color="rgb(246,192,155)"/><stop offset="0.3350" stop-color="rgb(247,196,162)"/><stop offset="0.4000" stop-color="rgb(247,199,166)"/><stop offset="0.5000" stop-color="rgb(248,201,170)"/><stop offset="0.6000" stop-color="rgb(247,199,166)"/><stop offset="0.6650" stop-color="rgb(247,196,162)"/><stop offset="0.7200" stop-color="rgb(246,192,155)"/><stop offset="0.7675" stop-color="rgb(246,188,149)"/><stop offset="0.8130" stop-color="rgb(245,184,142)"/><stop offset="0.8600" stop-color="rgb(244,178,133)"/><stop offset="0.9050" stop-color="rgb(243,172,123)"/><stop offset="0.9525" stop-color="rgb(242,164,110)"/><stop offset="0.9800" stop-color="rgb(241,157,99)"/><stop offset="1.0000" stop-color="rgb(241,151,90)"/></linearGradient><linearGradient id="g2s25" gradientUnits="userSpaceOnUse" x1="748.20" y1="0" x2="1397.70" y2="0"><stop offset="0.0000" stop-color="rgb(240,150,88)"/><stop offset="0.0200" stop-color="rgb(241,155,97)"/><stop offset="0.0475" stop-color="rgb(242,162,108)"/><stop offset="0.0950" stop-color="rgb(243,170,121)"/><stop offset="0.1400" stop-color="rgb(244,176,130)"/><stop offset="0.1870" stop-color="rgb(245,182,139)"/><stop offset="0.2325" stop-color="rgb(245,186,146)"/><stop offset="0.2800" stop-color="rgb(246,190,152)"/><stop offset="0.3350" stop-color="rgb(247,194,158)"/><stop offset="0.4000" stop-color="rgb(247,196,162)"/><stop offset="0.5000" stop-color="rgb(247,199,166)"/><stop offset="0.6000" stop-color="rgb(247,196,162)"/><stop offset="0.6650" stop-color="rgb(247,194,158)"/><stop offset="0.7200" stop-color="rgb(246,190,152)"/><stop offset="0.7675" stop-color="rgb(245,186,146)"/><stop offset="0.8130" stop-color="rgb(245,182,139)"/><stop offset="0.8600" stop-color="rgb(244,176,130)"/><stop offset="0.9050" stop-color="rgb(243,170,121)"/><stop offset="0.9525" stop-color="rgb(242,162,108)"/><stop offset="0.9800" stop-color="rgb(241,155,97)"/><stop offset="1.0000" stop-color="rgb(240,150,88)"/></linearGradient><linearGradient id="g2s26" gradientUnits="userSpaceOnUse" x1="748.20" y1="0" x2="1397.70" y2="0"><stop offset="0.0000" stop-color="rgb(240,148,86)"/><stop offset="0.0200" stop-color="rgb(241,154,95)"/><stop offset="0.0475" stop-color="rgb(242,160,105)"/><stop offset="0.0950" stop-color="rgb(243,168,118)"/><stop offset="0.1400" stop-color="rgb(244,175,128)"/><stop offset="0.1870" stop-color="rgb(245,180,136)"/><stop offset="0.2325" stop-color="rgb(245,184,142)"/><stop offset="0.2800" stop-color="rgb(246,188,149)"/><stop offset="0.3350" stop-color="rgb(246,192,155)"/><stop offset="0.4000" stop-color="rgb(247,194,159)"/><stop offset="0.5000" stop-color="rgb(247,197,163)"/><stop offset="0.6000" stop-color="rgb(247,194,159)"/><stop offset="0.6650" stop-color="rgb(246,192,155)"/><stop offset="0.7200" stop-color="rgb(246,188,149)"/><stop offset="0.7675" stop-color="rgb(245,184,142)"/><stop offset="0.8130" stop-color="rgb(245,180,136)"/><stop offset="0.8600" stop-color="rgb(244,175,128)"/><stop offset="0.9050" stop-color="rgb(243,168,118)"/><stop offset="0.9525" stop-color="rgb(242,160,105)"/><stop offset="0.9800" stop-color="rgb(241,154,95)"/><stop offset="1.0000" stop-color="rgb(240,148,86)"/></linearGradient><linearGradient id="g2s27" gradientUnits="userSpaceOnUse" x1="748.20" y1="0" x2="1397.70" y2="0"><stop offset="0.0000" stop-color="rgb(240,147,84)"/><stop offset="0.0200" stop-color="rgb(241,152,92)"/><stop offset="0.0475" stop-color="rgb(242,159,103)"/><stop offset="0.0950" stop-color="rgb(243,167,115)"/><stop offset="0.1400" stop-color="rgb(244,173,125)"/><stop offset="0.1870" stop-color="rgb(244,178,133)"/><stop offset="0.2325" stop-color="rgb(245,182,139)"/><stop offset="0.2800" stop-color="rgb(245,186,145)"/><stop offset="0.3350" stop-color="rgb(246,190,151)"/><stop offset="0.4000" stop-color="rgb(246,192,155)"/><stop offset="0.5000" stop-color="rgb(247,194,159)"/><stop offset="0.6000" stop-color="rgb(246,192,155)"/><stop offset="0.6650" stop-color="rgb(246,190,151)"/><stop offset="0.7200" stop-color="rgb(245,186,145)"/><stop offset="0.7675" stop-color="rgb(245,182,139)"/><stop offset="0.8130" stop-color="rgb(244,178,133)"/><stop offset="0.8600" stop-color="rgb(244,173,125)"/><stop offset="0.9050" stop-color="rgb(243,167,115)"/><stop offset="0.9525" stop-color="rgb(242,159,103)"/><stop offset="0.9800" stop-color="rgb(241,152,92)"/><stop offset="1.0000" stop-color="rgb(240,147,84)"/></linearGradient><linearGradient id="g2s28" gradientUnits="userSpaceOnUse" x1="748.20" y1="0" x2="1397.70" y2="0"><stop offset="0.0000" stop-color="rgb(240,146,82)"/><stop offset="0.0200" stop-color="rgb(241,151,90)"/><stop offset="0.0475" stop-color="rgb(241,157,100)"/><stop offset="0.0950" stop-color="rgb(243,165,112)"/><stop offset="0.1400" stop-color="rgb(243,171,122)"/><stop offset="0.1870" stop-color="rgb(244,176,129)"/><stop offset="0.2325" stop-color="rgb(245,180,136)"/><stop offset="0.2800" stop-color="rgb(245,184,142)"/><stop offset="0.3350" stop-color="rgb(246,187,148)"/><stop offset="0.4000" stop-color="rgb(246,190,152)"/><stop offset="0.5000" stop-color="rgb(246,192,155)"/><stop offset="0.6000" stop-color="rgb(246,190,152)"/><stop offset="0.6650" stop-color="rgb(246,187,148)"/><stop offset="0.7200" stop-color="rgb(245,184,142)"/><stop offset="0.7675" stop-color="rgb(245,180,136)"/><stop offset="0.8130" stop-color="rgb(244,176,129)"/><stop offset="0.8600" stop-color="rgb(243,171,122)"/><stop offset="0.9050" stop-color="rgb(243,165,112)"/><stop offset="0.9525" stop-color="rgb(241,157,100)"/><stop offset="0.9800" stop-color="rgb(241,151,90)"/><stop offset="1.0000" stop-color="rgb(240,146,82)"/></linearGradient><linearGradient id="g2s29" gradientUnits="userSpaceOnUse" x1="748.20" y1="0" x2="1397.70" y2="0"><stop offset="0.0000" stop-color="rgb(240,145,80)"/><stop offset="0.0200" stop-color="rgb(240,150,88)"/><stop offset="0.0475" stop-color="rgb(241,156,98)"/><stop offset="0.0950" stop-color="rgb(242,163,110)"/><stop offset="0.1400" stop-color="rgb(243,169,119)"/><stop offset="0.1870" stop-color="rgb(244,174,126)"/><stop offset="0.2325" stop-color="rgb(244,178,132)"/><stop offset="0.2800" stop-color="rgb(245,181,138)"/><stop offset="0.3350" stop-color="rgb(245,185,144)"/><stop offset="0.4000" stop-color="rgb(246,188,148)"/><stop offset="0.5000" stop-color="rgb(246,190,152)"/><stop offset="0.6000" stop-color="rgb(246,188,148)"/><stop offset="0.6650" stop-color="rgb(245,185,144)"/><stop offset="0.7200" stop-color="rgb(245,181,138)"/><stop offset="0.7675" stop-color="rgb(244,178,132)"/><stop offset="0.8130" stop-color="rgb(244,174,126)"/><stop offset="0.8600" stop-color="rgb(243,169,119)"/><stop offset="0.9050" stop-color="rgb(242,163,110)"/><stop offset="0.9525" stop-color="rgb(241,156,98)"/><stop offset="0.9800" stop-color="rgb(240,150,88)"/><stop offset="1.0000" stop-color="rgb(240,145,80)"/></linearGradient><linearGradient id="g2s30" gradientUnits="userSpaceOnUse" x1="748.20" y1="0" x2="1397.70" y2="0"><stop offset="0.0000" stop-color="rgb(240,144,78)"/><stop offset="0.0200" stop-color="rgb(240,148,86)"/><stop offset="0.0475" stop-color="rgb(241,154,95)"/><stop offset="0.0950" stop-color="rgb(242,162,107)"/><stop offset="0.1400" stop-color="rgb(243,167,116)"/><stop offset="0.1870" stop-color="rgb(243,172,123)"/><stop offset="0.2325" stop-color="rgb(244,175,129)"/><stop offset="0.2800" stop-color="rgb(245,179,135)"/><stop offset="0.3350" stop-color="rgb(245,183,141)"/><stop offset="0.4000" stop-color="rgb(245,185,145)"/><stop offset="0.5000" stop-color="rgb(246,188,148)"/><stop offset="0.6000" stop-color="rgb(245,185,145)"/><stop offset="0.6650" stop-color="rgb(245,183,141)"/><stop offset="0.7200" stop-color="rgb(245,179,135)"/><stop offset="0.7675" stop-color="rgb(244,175,129)"/><stop offset="0.8130" stop-color="rgb(243,172,123)"/><stop offset="0.8600" stop-color="rgb(243,167,116)"/><stop offset="0.9050" stop-color="rgb(242,162,107)"/><stop offset="0.9525" stop-color="rgb(241,154,95)"/><stop offset="0.9800" stop-color="rgb(240,148,86)"/><stop offset="1.0000" stop-color="rgb(240,144,78)"/></linearGradient><linearGradient id="g2s31" gradientUnits="userSpaceOnUse" x1="748.20" y1="0" x2="1397.70" y2="0"><stop offset="0.0000" stop-color="rgb(239,142,76)"/><stop offset="0.0200" stop-color="rgb(240,147,83)"/><stop offset="0.0475" stop-color="rgb(241,152,92)"/><stop offset="0.0950" stop-color="rgb(242,160,104)"/><stop offset="0.1400" stop-color="rgb(243,165,113)"/><stop offset="0.1870" stop-color="rgb(243,170,120)"/><stop offset="0.2325" stop-color="rgb(244,173,126)"/><stop offset="0.2800" stop-color="rgb(244,177,132)"/><stop offset="0.3350" stop-color="rgb(245,181,138)"/><stop offset="0.4000" stop-color="rgb(245,183,141)"/><stop offset="0.5000" stop-color="rgb(245,185,145)"/><stop offset="0.6000" stop-color="rgb(245,183,141)"/><stop offset="0.6650" stop-color="rgb(245,181,138)"/><stop offset="0.7200" stop-color="rgb(244,177,132)"/><stop offset="0.7675" stop-color="rgb(244,173,126)"/><stop offset="0.8130" stop-color="rgb(243,170,120)"/><stop offset="0.8600" stop-color="rgb(243,165,113)"/><stop offset="0.9050" stop-color="rgb(242,160,104)"/><stop offset="0.9525" stop-color="rgb(241,152,92)"/><stop offset="0.9800" stop-color="rgb(240,147,83)"/><stop offset="1.0000" stop-color="rgb(239,142,76)"/></linearGradient><linearGradient id="g2s32" gradientUnits="userSpaceOnUse" x1="748.20" y1="0" x2="1397.70" y2="0"><stop offset="0.0000" stop-color="rgb(239,140,74)"/><stop offset="0.0200" stop-color="rgb(240,145,80)"/><stop offset="0.0475" stop-color="rgb(241,150,89)"/><stop offset="0.0950" stop-color="rgb(242,158,101)"/><stop offset="0.1400" stop-color="rgb(242,163,110)"/><stop offset="0.1870" stop-color="rgb(243,168,117)"/><stop offset="0.2325" stop-color="rgb(243,171,123)"/><stop offset="0.2800" stop-color="rgb(244,175,129)"/><stop offset="0.3350" stop-color="rgb(244,179,134)"/><stop offset="0.4000" stop-color="rgb(245,181,138)"/><stop offset="0.5000" stop-color="rgb(245,183,141)"/><stop offset="0.6000" stop-color="rgb(245,181,138)"/><stop offset="0.6650" stop-color="rgb(244,179,134)"/><stop offset="0.7200" stop-color="rgb(244,175,129)"/><stop offset="0.7675" stop-color="rgb(243,171,123)"/><stop offset="0.8130" stop-color="rgb(243,168,117)"/><stop offset="0.8600" stop-color="rgb(242,163,110)"/><stop offset="0.9050" stop-color="rgb(242,158,101)"/><stop offset="0.9525" stop-color="rgb(241,150,89)"/><stop offset="0.9800" stop-color="rgb(240,145,80)"/><stop offset="1.0000" stop-color="rgb(239,140,74)"/></linearGradient><linearGradient id="g2s33" gradientUnits="userSpaceOnUse" x1="748.20" y1="0" x2="1397.70" y2="0"><stop offset="0.0000" stop-color="rgb(239,139,71)"/><stop offset="0.0200" stop-color="rgb(240,143,78)"/><stop offset="0.0475" stop-color="rgb(240,149,86)"/><stop offset="0.0950" stop-color="rgb(241,156,98)"/><stop offset="0.1400" stop-color="rgb(242,162,107)"/><stop offset="0.1870" stop-color="rgb(243,166,114)"/><stop offset="0.2325" stop-color="rgb(243,169,119)"/><stop offset="0.2800" stop-color="rgb(244,173,125)"/><stop offset="0.3350" stop-color="rgb(244,177,131)"/><stop offset="0.4000" stop-color="rgb(244,179,134)"/><stop offset="0.5000" stop-color="rgb(245,181,137)"/><stop offset="0.6000" stop-color="rgb(244,179,134)"/><stop offset="0.6650" stop-color="rgb(244,177,131)"/><stop offset="0.7200" stop-color="rgb(244,173,125)"/><stop offset="0.7675" stop-color="rgb(243,169,119)"/><stop offset="0.8130" stop-color="rgb(243,166,114)"/><stop offset="0.8600" stop-color="rgb(242,162,107)"/><stop offset="0.9050" stop-color="rgb(241,156,98)"/><stop offset="0.9525" stop-color="rgb(240,149,86)"/><stop offset="0.9800" stop-color="rgb(240,143,78)"/><stop offset="1.0000" stop-color="rgb(239,139,71)"/></linearGradient><linearGradient id="g2s34" gradientUnits="userSpaceOnUse" x1="748.20" y1="0" x2="1397.70" y2="0"><stop offset="0.0000" stop-color="rgb(239,137,68)"/><stop offset="0.0200" stop-color="rgb(239,141,75)"/><stop offset="0.0475" stop-color="rgb(240,147,84)"/><stop offset="0.0950" stop-color="rgb(241,154,95)"/><stop offset="0.1400" stop-color="rgb(242,160,104)"/><stop offset="0.1870" stop-color="rgb(242,164,111)"/><stop offset="0.2325" stop-color="rgb(243,168,116)"/><stop offset="0.2800" stop-color="rgb(243,171,122)"/><stop offset="0.3350" stop-color="rgb(244,175,128)"/><stop offset="0.4000" stop-color="rgb(244,177,131)"/><stop offset="0.5000" stop-color="rgb(244,178,134)"/><stop offset="0.6000" stop-color="rgb(244,177,131)"/><stop offset="0.6650" stop-color="rgb(244,175,128)"/><stop offset="0.7200" stop-color="rgb(243,171,122)"/><stop offset="0.7675" stop-color="rgb(243,168,116)"/><stop offset="0.8130" stop-color="rgb(242,164,111)"/><stop offset="0.8600" stop-color="rgb(242,160,104)"/><stop offset="0.9050" stop-color="rgb(241,154,95)"/><stop offset="0.9525" stop-color="rgb(240,147,84)"/><stop offset="0.9800" stop-color="rgb(239,141,75)"/><stop offset="1.0000" stop-color="rgb(239,137,68)"/></linearGradient><linearGradient id="g2s35" gradientUnits="userSpaceOnUse" x1="748.20" y1="0" x2="1397.70" y2="0"><stop offset="0.0000" stop-color="rgb(238,136,66)"/><stop offset="0.0200" stop-color="rgb(239,140,72)"/><stop offset="0.0475" stop-color="rgb(240,145,81)"/><stop offset="0.0950" stop-color="rgb(241,152,93)"/><stop offset="0.1400" stop-color="rgb(242,158,101)"/><stop offset="0.1870" stop-color="rgb(242,162,108)"/><stop offset="0.2325" stop-color="rgb(243,166,113)"/><stop offset="0.2800" stop-color="rgb(243,169,119)"/><stop offset="0.3350" stop-color="rgb(244,172,124)"/><stop offset="0.4000" stop-color="rgb(244,174,127)"/><stop offset="0.5000" stop-color="rgb(244,176,130)"/><stop offset="0.6000" stop-color="rgb(244,174,127)"/><stop offset="0.6650" stop-color="rgb(244,172,124)"/><stop offset="0.7200" stop-color="rgb(243,169,119)"/><stop offset="0.7675" stop-color="rgb(243,166,113)"/><stop offset="0.8130" stop-color="rgb(242,162,108)"/><stop offset="0.8600" stop-color="rgb(242,158,101)"/><stop offset="0.9050" stop-color="rgb(241,152,93)"/><stop offset="0.9525" stop-color="rgb(240,145,81)"/><stop offset="0.9800" stop-color="rgb(239,140,72)"/><stop offset="1.0000" stop-color="rgb(238,136,66)"/></linearGradient><linearGradient id="g2s36" gradientUnits="userSpaceOnUse" x1="748.20" y1="0" x2="1397.70" y2="0"><stop offset="0.0000" stop-color="rgb(238,134,63)"/><stop offset="0.0200" stop-color="rgb(239,138,70)"/><stop offset="0.0475" stop-color="rgb(240,143,78)"/><stop offset="0.0950" stop-color="rgb(241,151,90)"/><stop offset="0.1400" stop-color="rgb(241,156,98)"/><stop offset="0.1870" stop-color="rgb(242,160,105)"/><stop offset="0.2325" stop-color="rgb(242,164,110)"/><stop offset="0.2800" stop-color="rgb(243,167,115)"/><stop offset="0.3350" stop-color="rgb(243,170,121)"/><stop offset="0.4000" stop-color="rgb(244,172,124)"/><stop offset="0.5000" stop-color="rgb(244,174,127)"/><stop offset="0.6000" stop-color="rgb(244,172,124)"/><stop offset="0.6650" stop-color="rgb(243,170,121)"/><stop offset="0.7200" stop-color="rgb(243,167,115)"/><stop offset="0.7675" stop-color="rgb(242,164,110)"/><stop offset="0.8130" stop-color="rgb(242,160,105)"/><stop offset="0.8600" stop-color="rgb(241,156,98)"/><stop offset="0.9050" stop-color="rgb(241,151,90)"/><stop offset="0.9525" stop-color="rgb(240,143,78)"/><stop offset="0.9800" stop-color="rgb(239,138,70)"/><stop offset="1.0000" stop-color="rgb(238,134,63)"/></linearGradient><linearGradient id="g2s37" gradientUnits="userSpaceOnUse" x1="748.20" y1="0" x2="1397.70" y2="0"><stop offset="0.0000" stop-color="rgb(238,132,61)"/><stop offset="0.0200" stop-color="rgb(239,136,67)"/><stop offset="0.0475" stop-color="rgb(239,141,75)"/><stop offset="0.0950" stop-color="rgb(240,149,87)"/><stop offset="0.1400" stop-color="rgb(241,154,95)"/><stop offset="0.1870" stop-color="rgb(242,158,102)"/><stop offset="0.2325" stop-color="rgb(242,162,107)"/><stop offset="0.2800" stop-color="rgb(243,165,112)"/><stop offset="0.3350" stop-color="rgb(243,168,117)"/><stop offset="0.4000" stop-color="rgb(243,170,120)"/><stop offset="0.5000" stop-color="rgb(243,172,123)"/><stop offset="0.6000" stop-color="rgb(243,170,120)"/><stop offset="0.6650" stop-color="rgb(243,168,117)"/><stop offset="0.7200" stop-color="rgb(243,165,112)"/><stop offset="0.7675" stop-color="rgb(242,162,107)"/><stop offset="0.8130" stop-color="rgb(242,158,102)"/><stop offset="0.8600" stop-color="rgb(241,154,95)"/><stop offset="0.9050" stop-color="rgb(240,149,87)"/><stop offset="0.9525" stop-color="rgb(239,141,75)"/><stop offset="0.9800" stop-color="rgb(239,136,67)"/><stop offset="1.0000" stop-color="rgb(238,132,61)"/></linearGradient><linearGradient id="g2s38" gradientUnits="userSpaceOnUse" x1="748.20" y1="0" x2="1397.70" y2="0"><stop offset="0.0000" stop-color="rgb(238,131,58)"/><stop offset="0.0200" stop-color="rgb(238,135,64)"/><stop offset="0.0475" stop-color="rgb(239,140,72)"/><stop offset="0.0950" stop-color="rgb(240,147,84)"/><stop offset="0.1400" stop-color="rgb(241,152,92)"/><stop offset="0.1870" stop-color="rgb(241,157,99)"/><stop offset="0.2325" stop-color="rgb(242,160,104)"/><stop offset="0.2800" stop-color="rgb(242,163,109)"/><stop offset="0.3350" stop-color="rgb(243,166,114)"/><stop offset="0.4000" stop-color="rgb(243,168,117)"/><stop offset="0.5000" stop-color="rgb(243,169,119)"/><stop offset="0.6000" stop-color="rgb(243,168,117)"/><stop offset="0.6650" stop-color="rgb(243,166,114)"/><stop offset="0.7200" stop-color="rgb(242,163,109)"/><stop offset="0.7675" stop-color="rgb(242,160,104)"/><stop offset="0.8130" stop-color="rgb(241,157,99)"/><stop offset="0.8600" stop-color="rgb(241,152,92)"/><stop offset="0.9050" stop-color="rgb(240,147,84)"/><stop offset="0.9525" stop-color="rgb(239,140,72)"/><stop offset="0.9800" stop-color="rgb(238,135,64)"/><stop offset="1.0000" stop-color="rgb(238,131,58)"/></linearGradient><linearGradient id="g2s39" gradientUnits="userSpaceOnUse" x1="748.20" y1="0" x2="1397.70" y2="0"><stop offset="0.0000" stop-color="rgb(238,129,56)"/><stop offset="0.0200" stop-color="rgb(238,132,61)"/><stop offset="0.0475" stop-color="rgb(239,137,67)"/><stop offset="0.0950" stop-color="rgb(240,144,79)"/><stop offset="0.1400" stop-color="rgb(240,149,87)"/><stop offset="0.1870" stop-color="rgb(241,153,94)"/><stop offset="0.2325" stop-color="rgb(241,157,99)"/><stop offset="0.2800" stop-color="rgb(242,160,104)"/><stop offset="0.3350" stop-color="rgb(242,163,110)"/><stop offset="0.4000" stop-color="rgb(243,165,113)"/><stop offset="0.5000" stop-color="rgb(243,167,116)"/><stop offset="0.6000" stop-color="rgb(243,165,113)"/><stop offset="0.6650" stop-color="rgb(242,163,110)"/><stop offset="0.7200" stop-color="rgb(242,160,104)"/><stop offset="0.7675" stop-color="rgb(241,157,99)"/><stop offset="0.8130" stop-color="rgb(241,153,94)"/><stop offset="0.8600" stop-color="rgb(240,149,87)"/><stop offset="0.9050" stop-color="rgb(240,144,79)"/><stop offset="0.9525" stop-color="rgb(239,137,67)"/><stop offset="0.9800" stop-color="rgb(238,132,61)"/><stop offset="1.0000" stop-color="rgb(238,129,56)"/></linearGradient><linearGradient id="g2s40" gradientUnits="userSpaceOnUse" x1="748.20" y1="0" x2="1397.70" y2="0"><stop offset="0.0000" stop-color="rgb(237,127,53)"/><stop offset="0.0200" stop-color="rgb(238,130,57)"/><stop offset="0.0475" stop-color="rgb(238,134,63)"/><stop offset="0.0950" stop-color="rgb(239,141,74)"/><stop offset="0.1400" stop-color="rgb(240,146,82)"/><stop offset="0.1870" stop-color="rgb(240,150,89)"/><stop offset="0.2325" stop-color="rgb(241,154,94)"/><stop offset="0.2800" stop-color="rgb(241,157,100)"/><stop offset="0.3350" stop-color="rgb(242,161,106)"/><stop offset="0.4000" stop-color="rgb(242,163,109)"/><stop offset="0.5000" stop-color="rgb(243,165,113)"/><stop offset="0.6000" stop-color="rgb(242,163,109)"/><stop offset="0.6650" stop-color="rgb(242,161,106)"/><stop offset="0.7200" stop-color="rgb(241,157,100)"/><stop offset="0.7675" stop-color="rgb(241,154,94)"/><stop offset="0.8130" stop-color="rgb(240,150,89)"/><stop offset="0.8600" stop-color="rgb(240,146,82)"/><stop offset="0.9050" stop-color="rgb(239,141,74)"/><stop offset="0.9525" stop-color="rgb(238,134,63)"/><stop offset="0.9800" stop-color="rgb(238,130,57)"/><stop offset="1.0000" stop-color="rgb(237,127,53)"/></linearGradient><linearGradient id="g2s41" gradientUnits="userSpaceOnUse" x1="748.20" y1="0" x2="1397.70" y2="0"><stop offset="0.0000" stop-color="rgb(237,126,50)"/><stop offset="0.0200" stop-color="rgb(237,128,53)"/><stop offset="0.0475" stop-color="rgb(238,131,59)"/><stop offset="0.0950" stop-color="rgb(239,137,68)"/><stop offset="0.1400" stop-color="rgb(239,142,77)"/><stop offset="0.1870" stop-color="rgb(240,147,84)"/><stop offset="0.2325" stop-color="rgb(241,151,89)"/><stop offset="0.2800" stop-color="rgb(241,154,95)"/><stop offset="0.3350" stop-color="rgb(242,158,101)"/><stop offset="0.4000" stop-color="rgb(242,160,105)"/><stop offset="0.5000" stop-color="rgb(242,163,109)"/><stop offset="0.6000" stop-color="rgb(242,160,105)"/><stop offset="0.6650" stop-color="rgb(242,158,101)"/><stop offset="0.7200" stop-color="rgb(241,154,95)"/><stop offset="0.7675" stop-color="rgb(241,151,89)"/><stop offset="0.8130" stop-color="rgb(240,147,84)"/><stop offset="0.8600" stop-color="rgb(239,142,77)"/><stop offset="0.9050" stop-color="rgb(239,137,68)"/><stop offset="0.9525" stop-color="rgb(238,131,59)"/><stop offset="0.9800" stop-color="rgb(237,128,53)"/><stop offset="1.0000" stop-color="rgb(237,126,50)"/></linearGradient><linearGradient id="g2s42" gradientUnits="userSpaceOnUse" x1="748.20" y1="0" x2="1397.70" y2="0"><stop offset="0.0000" stop-color="rgb(237,125,49)"/><stop offset="0.0200" stop-color="rgb(237,127,52)"/><stop offset="0.0475" stop-color="rgb(238,130,57)"/><stop offset="0.0950" stop-color="rgb(239,136,67)"/><stop offset="0.1400" stop-color="rgb(239,141,75)"/><stop offset="0.1870" stop-color="rgb(240,146,82)"/><stop offset="0.2325" stop-color="rgb(240,149,88)"/><stop offset="0.2800" stop-color="rgb(241,153,93)"/><stop offset="0.3350" stop-color="rgb(241,157,99)"/><stop offset="0.4000" stop-color="rgb(242,159,104)"/><stop offset="0.5000" stop-color="rgb(242,162,108)"/><stop offset="0.6000" stop-color="rgb(242,159,104)"/><stop offset="0.6650" stop-color="rgb(241,157,99)"/><stop offset="0.7200" stop-color="rgb(241,153,93)"/><stop offset="0.7675" stop-color="rgb(240,149,88)"/><stop offset="0.8130" stop-color="rgb(240,146,82)"/><stop offset="0.8600" stop-color="rgb(239,141,75)"/><stop offset="0.9050" stop-color="rgb(239,136,67)"/><stop offset="0.9525" stop-color="rgb(238,130,57)"/><stop offset="0.9800" stop-color="rgb(237,127,52)"/><stop offset="1.0000" stop-color="rgb(237,125,49)"/></linearGradient><linearGradient id="g2s43" gradientUnits="userSpaceOnUse" x1="748.20" y1="0" x2="1397.70" y2="0"><stop offset="0.0000" stop-color="rgb(237,125,49)"/><stop offset="0.0200" stop-color="rgb(237,127,52)"/><stop offset="0.0475" stop-color="rgb(238,130,57)"/><stop offset="0.0950" stop-color="rgb(239,136,67)"/><stop offset="0.1400" stop-color="rgb(239,141,75)"/><stop offset="0.1870" stop-color="rgb(240,146,82)"/><stop offset="0.2325" stop-color="rgb(240,149,88)"/><stop offset="0.2800" stop-color="rgb(241,153,93)"/><stop offset="0.3350" stop-color="rgb(241,157,99)"/><stop offset="0.4000" stop-color="rgb(242,159,104)"/><stop offset="0.5000" stop-color="rgb(242,162,108)"/><stop offset="0.6000" stop-color="rgb(242,159,104)"/><stop offset="0.6650" stop-color="rgb(241,157,99)"/><stop offset="0.7200" stop-color="rgb(241,153,93)"/><stop offset="0.7675" stop-color="rgb(240,149,88)"/><stop offset="0.8130" stop-color="rgb(240,146,82)"/><stop offset="0.8600" stop-color="rgb(239,141,75)"/><stop offset="0.9050" stop-color="rgb(239,136,67)"/><stop offset="0.9525" stop-color="rgb(238,130,57)"/><stop offset="0.9800" stop-color="rgb(237,127,52)"/><stop offset="1.0000" stop-color="rgb(237,125,49)"/></linearGradient><clipPath id="g2clip"><rect x="748.2" y="225.6" width="649.5" height="456.4"/></clipPath><filter id="g2blur" filterUnits="userSpaceOnUse" x="728.2" y="202.8" width="689.5" height="502.0"><feGaussianBlur stdDeviation="0 6.8"/></filter></defs><g clip-path="url(#g2clip)"><g filter="url(#g2blur)"><rect x="728.2" y="202.48" width="689.5" height="12.01" fill="url(#g2s0)"/><rect x="728.2" y="213.89" width="689.5" height="12.01" fill="url(#g2s1)"/><rect x="728.2" y="225.30" width="689.5" height="12.01" fill="url(#g2s2)"/><rect x="728.2" y="236.71" width="689.5" height="12.01" fill="url(#g2s3)"/><rect x="728.2" y="248.12" width="689.5" height="12.01" fill="url(#g2s4)"/><rect x="728.2" y="259.53" width="689.5" height="12.01" fill="url(#g2s5)"/><rect x="728.2" y="270.94" width="689.5" height="12.01" fill="url(#g2s6)"/><rect x="728.2" y="282.35" width="689.5" height="12.01" fill="url(#g2s7)"/><rect x="728.2" y="293.76" width="689.5" height="12.01" fill="url(#g2s8)"/><rect x="728.2" y="305.17" width="689.5" height="12.01" fill="url(#g2s9)"/><rect x="728.2" y="316.58" width="689.5" height="12.01" fill="url(#g2s10)"/><rect x="728.2" y="327.99" width="689.5" height="12.01" fill="url(#g2s11)"/><rect x="728.2" y="339.40" width="689.5" height="12.01" fill="url(#g2s12)"/><rect x="728.2" y="350.81" width="689.5" height="12.01" fill="url(#g2s13)"/><rect x="728.2" y="362.22" width="689.5" height="12.01" fill="url(#g2s14)"/><rect x="728.2" y="373.63" width="689.5" height="12.01" fill="url(#g2s15)"/><rect x="728.2" y="385.04" width="689.5" height="12.01" fill="url(#g2s16)"/><rect x="728.2" y="396.45" width="689.5" height="12.01" fill="url(#g2s17)"/><rect x="728.2" y="407.86" width="689.5" height="12.01" fill="url(#g2s18)"/><rect x="728.2" y="419.27" width="689.5" height="12.01" fill="url(#g2s19)"/><rect x="728.2" y="430.68" width="689.5" height="12.01" fill="url(#g2s20)"/><rect x="728.2" y="442.09" width="689.5" height="12.01" fill="url(#g2s21)"/><rect x="728.2" y="453.50" width="689.5" height="12.01" fill="url(#g2s22)"/><rect x="728.2" y="464.91" width="689.5" height="12.01" fill="url(#g2s23)"/><rect x="728.2" y="476.32" width="689.5" height="12.01" fill="url(#g2s24)"/><rect x="728.2" y="487.73" width="689.5" height="12.01" fill="url(#g2s25)"/><rect x="728.2" y="499.14" width="689.5" height="12.01" fill="url(#g2s26)"/><rect x="728.2" y="510.55" width="689.5" height="12.01" fill="url(#g2s27)"/><rect x="728.2" y="521.96" width="689.5" height="12.01" fill="url(#g2s28)"/><rect x="728.2" y="533.37" width="689.5" height="12.01" fill="url(#g2s29)"/><rect x="728.2" y="544.78" width="689.5" height="12.01" fill="url(#g2s30)"/><rect x="728.2" y="556.19" width="689.5" height="12.01" fill="url(#g2s31)"/><rect x="728.2" y="567.60" width="689.5" height="12.01" fill="url(#g2s32)"/><rect x="728.2" y="579.01" width="689.5" height="12.01" fill="url(#g2s33)"/><rect x="728.2" y="590.42" width="689.5" height="12.01" fill="url(#g2s34)"/><rect x="728.2" y="601.83" width="689.5" height="12.01" fill="url(#g2s35)"/><rect x="728.2" y="613.24" width="689.5" height="12.01" fill="url(#g2s36)"/><rect x="728.2" y="624.65" width="689.5" height="12.01" fill="url(#g2s37)"/><rect x="728.2" y="636.06" width="689.5" height="12.01" fill="url(#g2s38)"/><rect x="728.2" y="647.47" width="689.5" height="12.01" fill="url(#g2s39)"/><rect x="728.2" y="658.88" width="689.5" height="12.01" fill="url(#g2s40)"/><rect x="728.2" y="670.29" width="689.5" height="12.01" fill="url(#g2s41)"/><rect x="728.2" y="681.70" width="689.5" height="12.01" fill="url(#g2s42)"/><rect x="728.2" y="693.11" width="689.5" height="12.01" fill="url(#g2s43)"/></g></g><rect x="748.7" y="226.1" width="648.5" height="455.4" fill="none" stroke="#c3cad2" stroke-width="1"/>
<text x="828.80" y="253.30" font-size="18.2" font-weight="700" fill="#12ad4f" textLength="64.60" lengthAdjust="spacingAndGlyphs" stroke="#12ad4f" stroke-width="0.4">Backtest</text>
<text x="899.40" y="253.30" font-size="18.2" font-weight="700" fill="#12ad4f" textLength="55.40" lengthAdjust="spacingAndGlyphs" stroke="#12ad4f" stroke-width="0.4">Trading</text>
<text x="960.50" y="253.30" font-size="18.2" font-weight="700" fill="#12ad4f" textLength="63.50" lengthAdjust="spacingAndGlyphs" stroke="#12ad4f" stroke-width="0.4">Strategy</text>
<text x="1029.00" y="253.30" font-size="18.2" font-weight="700" fill="#404040" textLength="15.50" lengthAdjust="spacingAndGlyphs" stroke="#404040" stroke-width="0.4">vs</text>
<text x="1049.40" y="253.30" font-size="18.2" font-weight="700" fill="#ff0000" textLength="32.50" lengthAdjust="spacingAndGlyphs" stroke="#ff0000" stroke-width="0.4">S&amp;P</text>
<text x="1087.60" y="253.30" font-size="18.2" font-weight="700" fill="#ff0000" textLength="26.10" lengthAdjust="spacingAndGlyphs" stroke="#ff0000" stroke-width="0.4">500</text>
<text x="1119.30" y="253.30" font-size="18.2" font-weight="700" fill="#ff0000" textLength="42.40" lengthAdjust="spacingAndGlyphs" stroke="#ff0000" stroke-width="0.4">Index</text>
<text x="1167.70" y="253.30" font-size="18.2" font-weight="700" fill="#000" textLength="90.00" lengthAdjust="spacingAndGlyphs" stroke="#000" stroke-width="0.4">-Annualized</text>
<text x="1264.00" y="253.30" font-size="18.2" font-weight="700" fill="#000" textLength="57.20" lengthAdjust="spacingAndGlyphs" stroke="#000" stroke-width="0.4">Growth</text>
<path d="M809.3 624.50 H1384" stroke="#dddad8" stroke-opacity="0.95" stroke-width="1.4"/>
<text x="755.90" y="627.60" font-size="10.2" fill="#111" textLength="42.50" lengthAdjust="spacingAndGlyphs" stroke="#111" stroke-width="0.15">$100,000</text>
<path d="M809.3 580.67 H1384" stroke="#dddad8" stroke-opacity="0.95" stroke-width="1.4"/>
<text x="755.90" y="583.77" font-size="10.2" fill="#111" textLength="42.50" lengthAdjust="spacingAndGlyphs" stroke="#111" stroke-width="0.15">$200,000</text>
<path d="M809.3 536.84 H1384" stroke="#dddad8" stroke-opacity="0.95" stroke-width="1.4"/>
<text x="755.90" y="539.94" font-size="10.2" fill="#111" textLength="42.50" lengthAdjust="spacingAndGlyphs" stroke="#111" stroke-width="0.15">$300,000</text>
<path d="M809.3 493.01 H1384" stroke="#dddad8" stroke-opacity="0.95" stroke-width="1.4"/>
<text x="755.90" y="496.11" font-size="10.2" fill="#111" textLength="42.50" lengthAdjust="spacingAndGlyphs" stroke="#111" stroke-width="0.15">$400,000</text>
<path d="M809.3 449.18 H1384" stroke="#dddad8" stroke-opacity="0.95" stroke-width="1.4"/>
<text x="755.90" y="452.28" font-size="10.2" fill="#111" textLength="42.50" lengthAdjust="spacingAndGlyphs" stroke="#111" stroke-width="0.15">$500,000</text>
<path d="M809.3 405.35 H1384" stroke="#dddad8" stroke-opacity="0.95" stroke-width="1.4"/>
<text x="755.90" y="408.45" font-size="10.2" fill="#111" textLength="42.50" lengthAdjust="spacingAndGlyphs" stroke="#111" stroke-width="0.15">$600,000</text>
<path d="M809.3 361.52 H1384" stroke="#dddad8" stroke-opacity="0.95" stroke-width="1.4"/>
<text x="755.90" y="364.62" font-size="10.2" fill="#111" textLength="42.50" lengthAdjust="spacingAndGlyphs" stroke="#111" stroke-width="0.15">$700,000</text>
<path d="M809.3 317.69 H1384" stroke="#dddad8" stroke-opacity="0.95" stroke-width="1.4"/>
<text x="755.90" y="320.79" font-size="10.2" fill="#111" textLength="42.50" lengthAdjust="spacingAndGlyphs" stroke="#111" stroke-width="0.15">$800,000</text>
<path d="M809.3 273.86 H1384" stroke="#dddad8" stroke-opacity="0.95" stroke-width="1.4"/>
<text x="755.90" y="276.96" font-size="10.2" fill="#111" textLength="42.50" lengthAdjust="spacingAndGlyphs" stroke="#111" stroke-width="0.15">$900,000</text>
<text x="824.24" y="643.00" font-size="10.3" font-weight="700" fill="#111" textLength="21.80" lengthAdjust="spacingAndGlyphs">2014</text>
<text x="876.50" y="643.00" font-size="10.3" font-weight="700" fill="#111" textLength="21.80" lengthAdjust="spacingAndGlyphs">2015</text>
<text x="928.77" y="643.00" font-size="10.3" font-weight="700" fill="#111" textLength="21.80" lengthAdjust="spacingAndGlyphs">2016</text>
<text x="981.05" y="643.00" font-size="10.3" font-weight="700" fill="#111" textLength="21.80" lengthAdjust="spacingAndGlyphs">2017</text>
<text x="1033.31" y="643.00" font-size="10.3" font-weight="700" fill="#111" textLength="21.80" lengthAdjust="spacingAndGlyphs">2018</text>
<text x="1085.59" y="643.00" font-size="10.3" font-weight="700" fill="#111" textLength="21.80" lengthAdjust="spacingAndGlyphs">2019</text>
<text x="1137.86" y="643.00" font-size="10.3" font-weight="700" fill="#111" textLength="21.80" lengthAdjust="spacingAndGlyphs">2020</text>
<text x="1190.12" y="643.00" font-size="10.3" font-weight="700" fill="#111" textLength="21.80" lengthAdjust="spacingAndGlyphs">2021</text>
<text x="1242.39" y="643.00" font-size="10.3" font-weight="700" fill="#111" textLength="21.80" lengthAdjust="spacingAndGlyphs">2022</text>
<text x="1294.66" y="643.00" font-size="10.3" font-weight="700" fill="#111" textLength="21.80" lengthAdjust="spacingAndGlyphs">2023</text>
<text x="1346.93" y="643.00" font-size="10.3" font-weight="700" fill="#111" textLength="21.80" lengthAdjust="spacingAndGlyphs">2024</text>
<polyline points="835.1,623.7 887.4,619.6 939.7,612.1 991.9,599.4 1044.2,602.0 1096.5,589.7 1148.8,577.0 1201.0,557.2 1253.3,566.1 1305.6,537.4" fill="none" stroke="#ff0000" stroke-width="3" stroke-linecap="round" stroke-linejoin="round"/>
<polyline points="835.1,623.7 887.4,618.5 939.7,622.6 991.9,621.8 1044.2,606.5 1096.5,582.2 1148.8,590.4 1201.0,581.1 1253.3,410.0 1305.6,297.0" fill="none" stroke="#0db050" stroke-width="3" stroke-linecap="round" stroke-linejoin="round"/>
<path d="M934 663.4 H955.8" stroke="#ff0000" stroke-width="3" stroke-linecap="round"/>
<text x="959.60" y="666.60" font-size="9.6" fill="#111" textLength="68.40" lengthAdjust="spacingAndGlyphs" stroke="#111" stroke-width="0.15">S&amp;P 500 INDEX</text>
<path d="M1051 663.4 H1074" stroke="#0db050" stroke-width="3" stroke-linecap="round"/>
<text x="1077.30" y="666.60" font-size="9.6" fill="#111" textLength="140.10" lengthAdjust="spacingAndGlyphs" stroke="#111" stroke-width="0.15">BACKTEST TRADING STRATEGY</text></svg>
</body></html>
